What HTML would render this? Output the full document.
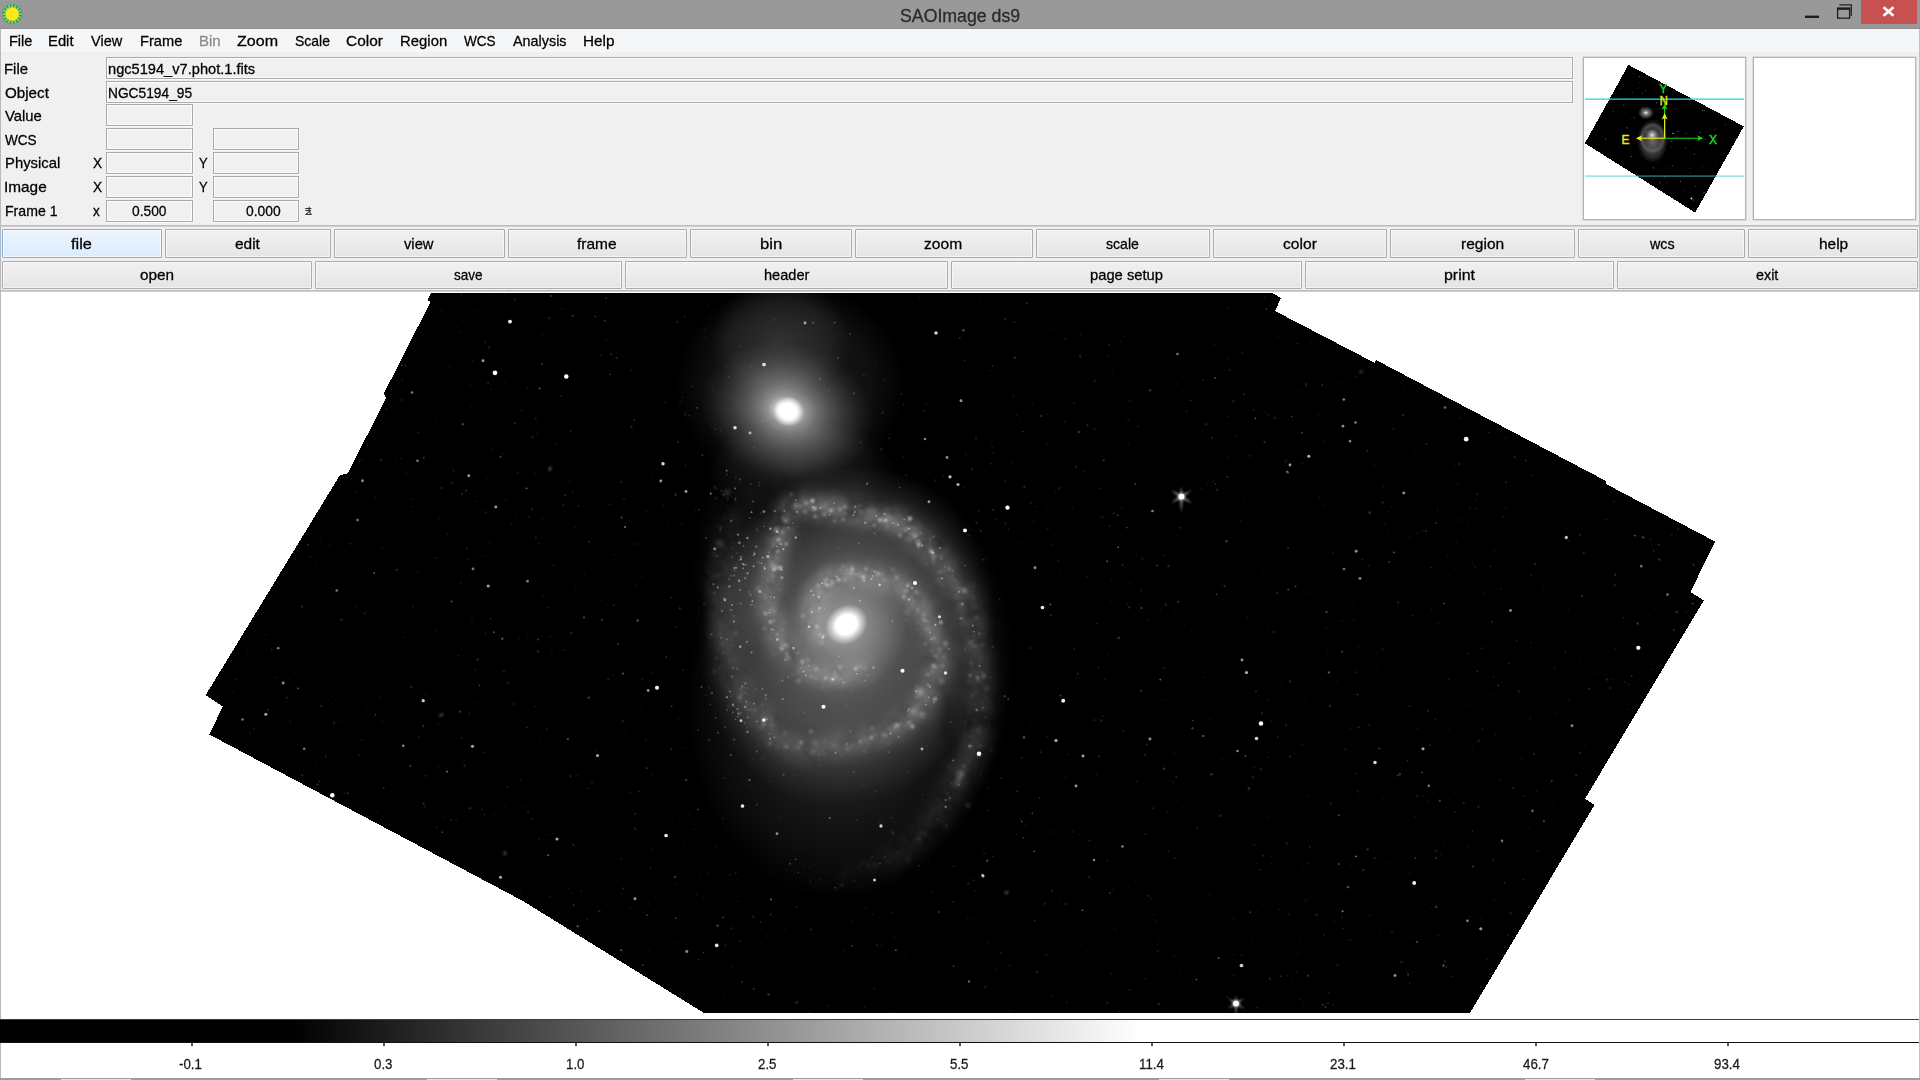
<!DOCTYPE html>
<html><head><meta charset="utf-8"><title>SAOImage ds9</title>
<style>
html,body{margin:0;padding:0}
body{width:1920px;height:1080px;position:relative;overflow:hidden;background:#f0f0f0;font-family:"Liberation Sans",sans-serif;}
.t{-webkit-text-stroke:0.28px currentColor;position:absolute;white-space:pre;line-height:20px;height:20px;transform-origin:0 0;font-family:"Liberation Sans",sans-serif;}
.abs{position:absolute}
.entry{position:absolute;box-sizing:border-box;border:1px solid #a9a9a9;box-shadow:inset 1px 1px 0 #fcfcfc, inset -1px -1px 0 #fcfcfc, 1px 1px 0 #fafafa;background:#f0f0f0}
.btn{position:absolute;box-sizing:border-box;border:1px solid #acacac;border-radius:1px;background:linear-gradient(#f1f1f1,#e5e5e5);box-shadow:inset 0 0 0 1px rgba(255,255,255,.55)}
.btn.act{border-color:#7eb4ea;background:linear-gradient(#ecf4fc,#dcecfc)}
.panel{position:absolute;box-sizing:border-box;background:#fff;border:1px solid #b4b4b4;box-shadow:0 0 0 1px #dcdcdc}
</style></head>
<body>
<div class="abs" style="left:0;top:0;width:1920px;height:29px;background:#999999"></div>
<div class="abs" style="left:0;top:28px;width:1920px;height:1px;background:#8e8e8e"></div>
<svg class="abs" style="left:0;top:2px" width="26" height="26" viewBox="0 0 26 26">
<circle cx="12.2" cy="12" r="10.1" fill="#1fa08c"/>
<g stroke="#9fd23a" stroke-width="1.6"><line x1="18.20" y1="12.00" x2="21.90" y2="12.00"/><line x1="17.74" y1="14.30" x2="21.16" y2="15.71"/><line x1="16.44" y1="16.24" x2="19.06" y2="18.86"/><line x1="14.50" y1="17.54" x2="15.91" y2="20.96"/><line x1="12.20" y1="18.00" x2="12.20" y2="21.70"/><line x1="9.90" y1="17.54" x2="8.49" y2="20.96"/><line x1="7.96" y1="16.24" x2="5.34" y2="18.86"/><line x1="6.66" y1="14.30" x2="3.24" y2="15.71"/><line x1="6.20" y1="12.00" x2="2.50" y2="12.00"/><line x1="6.66" y1="9.70" x2="3.24" y2="8.29"/><line x1="7.96" y1="7.76" x2="5.34" y2="5.14"/><line x1="9.90" y1="6.46" x2="8.49" y2="3.04"/><line x1="12.20" y1="6.00" x2="12.20" y2="2.30"/><line x1="14.50" y1="6.46" x2="15.91" y2="3.04"/><line x1="16.44" y1="7.76" x2="19.06" y2="5.14"/><line x1="17.74" y1="9.70" x2="21.16" y2="8.29"/></g><circle cx="12.2" cy="12" r="6.7" fill="#ffe81a"/></svg>
<div class="abs" style="left:1861px;top:0;width:56px;height:24px;background:#c75050"></div>
<svg class="abs" style="left:1800px;top:0" width="120" height="28" viewBox="0 0 120 28">
<rect x="5" y="15.6" width="14" height="2.4" fill="#1e1e1e"/>
<path d="M39.4 4.8 H51.3 V16" fill="none" stroke="#1e1e1e" stroke-width="1.25"/>
<rect x="37.6" y="8.6" width="12" height="9.6" fill="none" stroke="#1e1e1e" stroke-width="1.3"/>
<rect x="37" y="7.4" width="13.2" height="2.4" fill="#1e1e1e"/>
<path d="M83.5 7.2 L93.5 15.8 M93.5 7.2 L83.5 15.8" stroke="#fff" stroke-width="2.6" fill="none"/>
</svg>
<div class="abs" style="left:0;top:29px;width:1920px;height:23px;background:#f5f6f7"></div>
<div class="abs" style="left:0;top:29px;width:1px;height:1051px;background:#b9b9b9"></div>
<div class="entry" style="left:106px;top:57px;width:1467px;height:22px"></div>
<div class="entry" style="left:106px;top:81px;width:1467px;height:22px"></div>
<div class="entry" style="left:106px;top:104px;width:87px;height:22px"></div>
<div class="entry" style="left:106px;top:128px;width:87px;height:22px"></div>
<div class="entry" style="left:213px;top:128px;width:86px;height:22px"></div>
<div class="entry" style="left:106px;top:152px;width:87px;height:22px"></div>
<div class="entry" style="left:213px;top:152px;width:86px;height:22px"></div>
<div class="entry" style="left:106px;top:176px;width:87px;height:22px"></div>
<div class="entry" style="left:213px;top:176px;width:86px;height:22px"></div>
<div class="entry" style="left:106px;top:200px;width:87px;height:22px"></div>
<div class="entry" style="left:213px;top:200px;width:86px;height:22px"></div>
<svg class="abs" style="left:304px;top:206px" width="10" height="10" viewBox="0 0 10 10"><path d="M1.2 2.6 H7.4 M5.2 0.8 V4 M1.4 4.6 H6.8 L1.6 8.4 H7.2 M5 5.4 L7.6 8.6" stroke="#222" stroke-width="1" fill="none"/></svg>
<div class="panel" style="left:1583px;top:57px;width:163px;height:163px"></div>
<div class="panel" style="left:1753px;top:57px;width:163px;height:163px"></div>
<div class="abs" style="left:1px;top:225px;width:1919px;height:1px;background:#bdbdbd"></div>
<div class="abs" style="left:1px;top:226px;width:1919px;height:1px;background:#cfcfcf"></div>
<div class="btn act" style="left:2px;top:229px;width:160px;height:29px"></div>
<div class="btn" style="left:165px;top:229px;width:166px;height:29px"></div>
<div class="btn" style="left:334px;top:229px;width:171px;height:29px"></div>
<div class="btn" style="left:508px;top:229px;width:179px;height:29px"></div>
<div class="btn" style="left:690px;top:229px;width:162px;height:29px"></div>
<div class="btn" style="left:855px;top:229px;width:178px;height:29px"></div>
<div class="btn" style="left:1036px;top:229px;width:174px;height:29px"></div>
<div class="btn" style="left:1213px;top:229px;width:174px;height:29px"></div>
<div class="btn" style="left:1390px;top:229px;width:185px;height:29px"></div>
<div class="btn" style="left:1578px;top:229px;width:167px;height:29px"></div>
<div class="btn" style="left:1748px;top:229px;width:170px;height:29px"></div>
<div class="btn" style="left:2px;top:261px;width:310px;height:28px"></div>
<div class="btn" style="left:315px;top:261px;width:307px;height:28px"></div>
<div class="btn" style="left:625px;top:261px;width:323px;height:28px"></div>
<div class="btn" style="left:951px;top:261px;width:351px;height:28px"></div>
<div class="btn" style="left:1305px;top:261px;width:309px;height:28px"></div>
<div class="btn" style="left:1617px;top:261px;width:301px;height:28px"></div>
<div class="abs" style="left:1px;top:290px;width:1919px;height:1px;background:#bdbdbd"></div>
<div class="abs" style="left:1px;top:291px;width:1919px;height:1px;background:#cfcfcf"></div>
<div class="abs" style="left:1px;top:292px;width:1919px;height:786px;background:#fff"></div>
<svg class="abs" style="left:0;top:292px" width="1920" height="722" viewBox="0 292 1920 722">
<defs>
<clipPath id="cp"><polygon points="431,293 1272.5,293 1281,298 1275,311 1375,363 1376,360 1606,481 1606,484 1715,541.5 1690.5,592 1703.75,600.5 1585,798.75 1594.5,805 1470,1013 704,1013 522.5,900.75 209.25,734.5 222.8,706.5 205.75,695 340,475 347.5,473.5 386.25,398 383.75,393.75 430.5,302 427.5,300"/></clipPath>
<filter id="b05" filterUnits="userSpaceOnUse" x="0" y="292" width="1920" height="722"><feGaussianBlur stdDeviation="0.62"/></filter>
<filter id="b07" x="-50%" y="-50%" width="200%" height="200%"><feGaussianBlur stdDeviation="0.6"/></filter>
<filter id="b15" filterUnits="userSpaceOnUse" x="600" y="292" width="500" height="722"><feGaussianBlur stdDeviation="1.25"/></filter>
<filter id="b1" filterUnits="userSpaceOnUse" x="0" y="292" width="1920" height="722"><feGaussianBlur stdDeviation="1.1"/></filter>
<filter id="b2" filterUnits="userSpaceOnUse" x="600" y="292" width="500" height="722"><feGaussianBlur stdDeviation="2.4"/></filter>
<filter id="b5" filterUnits="userSpaceOnUse" x="600" y="292" width="500" height="722"><feGaussianBlur stdDeviation="5"/></filter>
<filter id="b9" x="-20%" y="-20%" width="140%" height="140%"><feGaussianBlur stdDeviation="9"/></filter>
<filter id="b16" x="-30%" y="-30%" width="160%" height="160%"><feGaussianBlur stdDeviation="16"/></filter>
<filter id="b7t" filterUnits="userSpaceOnUse" x="640" y="440" width="420" height="500"><feGaussianBlur stdDeviation="8" result="bl"/><feTurbulence type="fractalNoise" baseFrequency="0.045" numOctaves="3" seed="4" result="n"/><feColorMatrix in="n" type="matrix" values="0 0 0 0 1 0 0 0 0 1 0 0 0 0 1 1.7 0 0 0 -0.05" result="a"/><feComposite in="bl" in2="a" operator="in"/></filter>
<filter id="b3t" filterUnits="userSpaceOnUse" x="640" y="440" width="420" height="500"><feGaussianBlur stdDeviation="3.5" result="bl"/><feTurbulence type="fractalNoise" baseFrequency="0.11" numOctaves="3" seed="9" result="n"/><feColorMatrix in="n" type="matrix" values="0 0 0 0 1 0 0 0 0 1 0 0 0 0 1 2.4 0 0 0 -0.45" result="a"/><feComposite in="bl" in2="a" operator="in"/></filter>
<radialGradient id="genv"><stop offset="0" stop-color="#fff" stop-opacity=".13"/><stop offset="0.6" stop-color="#fff" stop-opacity=".09"/><stop offset="0.85" stop-color="#fff" stop-opacity=".04"/><stop offset="1" stop-color="#fff" stop-opacity="0"/></radialGradient>
<radialGradient id="gcore"><stop offset="0" stop-color="#fff" stop-opacity="1"/><stop offset="0.3" stop-color="#fff" stop-opacity="1"/><stop offset="0.55" stop-color="#fff" stop-opacity=".55"/><stop offset="1" stop-color="#fff" stop-opacity="0"/></radialGradient>
<radialGradient id="ginner"><stop offset="0" stop-color="#fff" stop-opacity=".30"/><stop offset="0.6" stop-color="#fff" stop-opacity=".17"/><stop offset="1" stop-color="#fff" stop-opacity="0"/></radialGradient>
<radialGradient id="gcore2"><stop offset="0" stop-color="#fff" stop-opacity="1"/><stop offset="0.5" stop-color="#fff" stop-opacity="1"/><stop offset="0.7" stop-color="#fff" stop-opacity=".55"/><stop offset="1" stop-color="#fff" stop-opacity="0"/></radialGradient>
<radialGradient id="ghalo2"><stop offset="0" stop-color="#fff" stop-opacity="1"/><stop offset="0.10" stop-color="#fff" stop-opacity=".95"/><stop offset="0.15" stop-color="#fff" stop-opacity=".72"/><stop offset="0.22" stop-color="#fff" stop-opacity=".53"/><stop offset="0.34" stop-color="#fff" stop-opacity=".38"/><stop offset="0.48" stop-color="#fff" stop-opacity=".26"/><stop offset="0.66" stop-color="#fff" stop-opacity=".14"/><stop offset="0.84" stop-color="#fff" stop-opacity=".05"/><stop offset="1" stop-color="#fff" stop-opacity="0"/></radialGradient>
<radialGradient id="ghalo"><stop offset="0" stop-color="#fff" stop-opacity=".75"/><stop offset="0.25" stop-color="#fff" stop-opacity=".42"/><stop offset="0.6" stop-color="#fff" stop-opacity=".16"/><stop offset="1" stop-color="#fff" stop-opacity="0"/></radialGradient>
<radialGradient id="gdisk"><stop offset="0" stop-color="#fff" stop-opacity=".30"/><stop offset="0.55" stop-color="#fff" stop-opacity=".20"/><stop offset="0.82" stop-color="#fff" stop-opacity=".09"/><stop offset="1" stop-color="#fff" stop-opacity="0"/></radialGradient>
<radialGradient id="gfaint"><stop offset="0" stop-color="#fff" stop-opacity=".12"/><stop offset="0.7" stop-color="#fff" stop-opacity=".06"/><stop offset="1" stop-color="#fff" stop-opacity="0"/></radialGradient>
</defs>
<polygon points="431,293 1272.5,293 1281,298 1275,311 1375,363 1376,360 1606,481 1606,484 1715,541.5 1690.5,592 1703.75,600.5 1585,798.75 1594.5,805 1470,1013 704,1013 522.5,900.75 209.25,734.5 222.8,706.5 205.75,695 340,475 347.5,473.5 386.25,398 383.75,393.75 430.5,302 427.5,300" fill="#000" shape-rendering="crispEdges"/>
<g clip-path="url(#cp)">
<ellipse cx="790" cy="385" rx="115" ry="105" fill="url(#gfaint)"/>
<ellipse cx="780" cy="340" rx="70" ry="60" fill="url(#gfaint)"/>
<ellipse cx="800" cy="468" rx="95" ry="48" fill="url(#gfaint)" opacity=".9"/><g transform="rotate(15 788 411)"><ellipse cx="787" cy="411" rx="88" ry="68" fill="url(#ghalo2)"/></g>
<circle cx="788.5" cy="411.6" r="15" fill="url(#gcore2)"/>
<g transform="rotate(10 850 682)"><ellipse cx="850" cy="682" rx="162" ry="218" fill="url(#genv)"/></g>
<g transform="rotate(14 848 636)"><ellipse cx="848" cy="636" rx="146" ry="172" fill="url(#gdisk)"/></g>
<g filter="url(#b7t)" fill="#fff"><circle cx="868.0" cy="668.0" r="10.5" opacity="0.045"/><circle cx="865.1" cy="669.3" r="10.5" opacity="0.045"/><circle cx="862.3" cy="670.7" r="10.5" opacity="0.045"/><circle cx="859.4" cy="672.0" r="10.6" opacity="0.045"/><circle cx="856.5" cy="673.3" r="10.6" opacity="0.046"/><circle cx="853.6" cy="674.6" r="10.6" opacity="0.046"/><circle cx="850.6" cy="675.7" r="10.6" opacity="0.046"/><circle cx="847.7" cy="676.7" r="10.6" opacity="0.047"/><circle cx="844.6" cy="677.6" r="10.7" opacity="0.047"/><circle cx="841.5" cy="678.1" r="10.7" opacity="0.047"/><circle cx="838.3" cy="678.3" r="10.7" opacity="0.047"/><circle cx="835.1" cy="678.2" r="10.7" opacity="0.048"/><circle cx="832.0" cy="678.0" r="10.7" opacity="0.048"/><circle cx="828.8" cy="677.6" r="10.8" opacity="0.048"/><circle cx="825.7" cy="677.1" r="10.8" opacity="0.048"/><circle cx="822.6" cy="676.4" r="10.8" opacity="0.049"/><circle cx="819.6" cy="675.6" r="10.8" opacity="0.049"/><circle cx="816.6" cy="674.6" r="10.8" opacity="0.049"/><circle cx="813.6" cy="673.4" r="10.8" opacity="0.050"/><circle cx="810.8" cy="672.1" r="10.9" opacity="0.050"/><circle cx="808.0" cy="670.6" r="10.9" opacity="0.050"/><circle cx="805.3" cy="668.9" r="10.9" opacity="0.050"/><circle cx="802.7" cy="667.1" r="10.9" opacity="0.051"/><circle cx="800.2" cy="665.2" r="10.9" opacity="0.051"/><circle cx="797.7" cy="663.2" r="11.0" opacity="0.051"/><circle cx="795.3" cy="661.1" r="11.0" opacity="0.051"/><circle cx="793.0" cy="659.0" r="11.0" opacity="0.052"/><circle cx="790.7" cy="656.8" r="11.0" opacity="0.052"/><circle cx="788.5" cy="654.4" r="11.0" opacity="0.052"/><circle cx="786.5" cy="652.0" r="11.1" opacity="0.052"/><circle cx="784.6" cy="649.5" r="11.1" opacity="0.052"/><circle cx="782.8" cy="646.9" r="11.1" opacity="0.052"/><circle cx="781.1" cy="644.2" r="11.1" opacity="0.053"/><circle cx="779.7" cy="641.4" r="11.1" opacity="0.053"/><circle cx="778.3" cy="638.5" r="11.2" opacity="0.053"/><circle cx="777.2" cy="635.6" r="11.2" opacity="0.053"/><circle cx="776.1" cy="632.6" r="11.2" opacity="0.053"/><circle cx="775.2" cy="629.6" r="11.2" opacity="0.053"/><circle cx="774.3" cy="626.5" r="11.2" opacity="0.054"/><circle cx="773.5" cy="623.5" r="11.3" opacity="0.054"/><circle cx="772.8" cy="620.4" r="11.3" opacity="0.054"/><circle cx="772.1" cy="617.3" r="11.3" opacity="0.054"/><circle cx="771.4" cy="614.2" r="11.3" opacity="0.054"/><circle cx="770.8" cy="611.1" r="11.3" opacity="0.054"/><circle cx="770.3" cy="608.0" r="11.3" opacity="0.054"/><circle cx="769.9" cy="604.8" r="11.4" opacity="0.055"/><circle cx="769.5" cy="601.7" r="11.4" opacity="0.055"/><circle cx="769.2" cy="598.5" r="11.4" opacity="0.055"/><circle cx="769.0" cy="595.4" r="11.4" opacity="0.055"/><circle cx="768.9" cy="592.2" r="11.4" opacity="0.055"/><circle cx="768.9" cy="589.0" r="11.5" opacity="0.055"/><circle cx="769.1" cy="585.9" r="11.5" opacity="0.055"/><circle cx="769.4" cy="582.7" r="11.5" opacity="0.056"/><circle cx="769.9" cy="579.6" r="11.5" opacity="0.056"/><circle cx="770.5" cy="576.5" r="11.5" opacity="0.056"/><circle cx="771.3" cy="573.4" r="11.6" opacity="0.056"/><circle cx="772.0" cy="570.3" r="11.6" opacity="0.056"/><circle cx="772.7" cy="567.2" r="11.6" opacity="0.056"/><circle cx="773.4" cy="564.1" r="11.6" opacity="0.056"/><circle cx="774.1" cy="561.1" r="11.6" opacity="0.056"/><circle cx="774.7" cy="558.0" r="11.7" opacity="0.056"/><circle cx="775.4" cy="554.9" r="11.7" opacity="0.056"/><circle cx="776.1" cy="551.8" r="11.7" opacity="0.056"/><circle cx="776.9" cy="548.7" r="11.7" opacity="0.056"/><circle cx="777.6" cy="545.6" r="11.7" opacity="0.056"/><circle cx="778.4" cy="542.5" r="11.8" opacity="0.056"/><circle cx="779.1" cy="539.5" r="11.8" opacity="0.056"/><circle cx="779.9" cy="536.4" r="11.8" opacity="0.056"/><circle cx="780.5" cy="533.3" r="11.8" opacity="0.056"/><circle cx="781.2" cy="530.2" r="11.8" opacity="0.056"/><circle cx="781.9" cy="527.1" r="11.9" opacity="0.056"/><circle cx="782.6" cy="524.0" r="11.9" opacity="0.056"/><circle cx="783.5" cy="521.0" r="11.9" opacity="0.056"/><circle cx="784.6" cy="518.0" r="11.9" opacity="0.056"/><circle cx="785.9" cy="515.1" r="11.9" opacity="0.056"/><circle cx="787.6" cy="512.5" r="11.9" opacity="0.056"/><circle cx="789.6" cy="510.0" r="12.0" opacity="0.056"/><circle cx="791.9" cy="507.8" r="12.0" opacity="0.056"/><circle cx="794.5" cy="506.0" r="12.0" opacity="0.056"/><circle cx="797.3" cy="504.7" r="12.0" opacity="0.056"/><circle cx="800.4" cy="503.9" r="12.0" opacity="0.056"/><circle cx="803.6" cy="503.8" r="12.1" opacity="0.056"/><circle cx="806.7" cy="504.2" r="12.1" opacity="0.056"/><circle cx="809.8" cy="504.9" r="12.1" opacity="0.056"/><circle cx="812.9" cy="505.8" r="12.1" opacity="0.056"/><circle cx="815.9" cy="506.6" r="12.1" opacity="0.056"/><circle cx="819.0" cy="507.3" r="12.2" opacity="0.056"/><circle cx="822.1" cy="507.9" r="12.2" opacity="0.056"/><circle cx="825.3" cy="508.3" r="12.2" opacity="0.056"/><circle cx="828.4" cy="508.7" r="12.2" opacity="0.056"/><circle cx="831.6" cy="509.0" r="12.2" opacity="0.055"/><circle cx="834.7" cy="509.3" r="12.3" opacity="0.055"/><circle cx="837.9" cy="509.6" r="12.3" opacity="0.055"/><circle cx="841.0" cy="509.9" r="12.3" opacity="0.055"/><circle cx="844.2" cy="510.2" r="12.3" opacity="0.055"/><circle cx="847.3" cy="510.6" r="12.3" opacity="0.055"/><circle cx="850.4" cy="511.0" r="12.4" opacity="0.055"/><circle cx="853.6" cy="511.4" r="12.4" opacity="0.055"/><circle cx="856.7" cy="511.9" r="12.4" opacity="0.055"/><circle cx="859.8" cy="512.5" r="12.4" opacity="0.055"/><circle cx="862.9" cy="513.1" r="12.4" opacity="0.055"/><circle cx="866.1" cy="513.7" r="12.4" opacity="0.055"/><circle cx="869.2" cy="514.3" r="12.5" opacity="0.055"/><circle cx="872.3" cy="514.9" r="12.5" opacity="0.054"/><circle cx="875.3" cy="515.6" r="12.5" opacity="0.054"/><circle cx="878.4" cy="516.4" r="12.5" opacity="0.054"/><circle cx="881.5" cy="517.2" r="12.5" opacity="0.054"/><circle cx="884.5" cy="518.1" r="12.6" opacity="0.054"/><circle cx="887.5" cy="519.1" r="12.6" opacity="0.054"/><circle cx="890.5" cy="520.2" r="12.6" opacity="0.054"/><circle cx="893.4" cy="521.4" r="12.6" opacity="0.053"/><circle cx="896.3" cy="522.8" r="12.6" opacity="0.053"/><circle cx="899.1" cy="524.2" r="12.7" opacity="0.052"/><circle cx="901.9" cy="525.8" r="12.7" opacity="0.051"/><circle cx="904.6" cy="527.4" r="12.7" opacity="0.050"/><circle cx="907.2" cy="529.2" r="12.7" opacity="0.050"/><circle cx="909.8" cy="531.0" r="12.7" opacity="0.049"/><circle cx="912.3" cy="532.9" r="12.8" opacity="0.048"/><circle cx="914.8" cy="534.8" r="12.8" opacity="0.048"/><circle cx="917.3" cy="536.8" r="12.8" opacity="0.047"/><circle cx="919.7" cy="538.9" r="12.8" opacity="0.046"/><circle cx="922.0" cy="541.0" r="12.8" opacity="0.046"/><circle cx="924.3" cy="543.2" r="12.9" opacity="0.045"/><circle cx="926.6" cy="545.4" r="12.9" opacity="0.044"/><circle cx="928.9" cy="547.6" r="12.9" opacity="0.044"/><circle cx="931.1" cy="549.9" r="12.9" opacity="0.043"/><circle cx="933.2" cy="552.2" r="12.9" opacity="0.042"/><circle cx="935.3" cy="554.6" r="13.0" opacity="0.042"/><circle cx="937.4" cy="556.9" r="13.0" opacity="0.041"/><circle cx="939.5" cy="559.4" r="13.0" opacity="0.040"/><circle cx="941.5" cy="561.8" r="13.0" opacity="0.040"/><circle cx="943.4" cy="564.3" r="13.0" opacity="0.039"/><circle cx="945.3" cy="566.8" r="13.0" opacity="0.039"/><circle cx="947.2" cy="569.4" r="13.1" opacity="0.038"/><circle cx="949.0" cy="572.0" r="13.1" opacity="0.038"/><circle cx="950.8" cy="574.6" r="13.1" opacity="0.037"/><circle cx="952.6" cy="577.2" r="13.1" opacity="0.037"/><circle cx="954.3" cy="579.9" r="13.1" opacity="0.036"/><circle cx="955.9" cy="582.6" r="13.2" opacity="0.036"/><circle cx="957.5" cy="585.4" r="13.2" opacity="0.035"/><circle cx="959.0" cy="588.1" r="13.2" opacity="0.034"/><circle cx="960.5" cy="590.9" r="13.2" opacity="0.034"/><circle cx="961.9" cy="593.8" r="13.2" opacity="0.033"/><circle cx="963.2" cy="596.6" r="13.3" opacity="0.033"/><circle cx="964.5" cy="599.5" r="13.3" opacity="0.032"/><circle cx="965.7" cy="602.5" r="13.3" opacity="0.032"/><circle cx="966.8" cy="605.4" r="13.3" opacity="0.031"/><circle cx="967.9" cy="608.4" r="13.3" opacity="0.031"/><circle cx="968.9" cy="611.4" r="13.4" opacity="0.030"/><circle cx="969.9" cy="614.4" r="13.4" opacity="0.030"/><circle cx="970.8" cy="617.5" r="13.4" opacity="0.029"/><circle cx="971.6" cy="620.5" r="13.4" opacity="0.029"/><circle cx="972.4" cy="623.6" r="13.4" opacity="0.029"/><circle cx="973.1" cy="626.7" r="13.5" opacity="0.029"/><circle cx="973.7" cy="629.8" r="13.5" opacity="0.028"/><circle cx="974.3" cy="632.9" r="13.5" opacity="0.028"/><circle cx="974.8" cy="636.0" r="13.5" opacity="0.028"/><circle cx="975.3" cy="639.1" r="13.5" opacity="0.028"/><circle cx="975.7" cy="642.3" r="13.6" opacity="0.027"/><circle cx="976.2" cy="645.4" r="13.6" opacity="0.027"/><circle cx="976.6" cy="648.6" r="13.6" opacity="0.027"/><circle cx="977.0" cy="651.7" r="13.6" opacity="0.027"/><circle cx="977.4" cy="654.8" r="13.6" opacity="0.026"/><circle cx="977.7" cy="658.0" r="13.6" opacity="0.026"/><circle cx="978.1" cy="661.1" r="13.7" opacity="0.026"/><circle cx="978.6" cy="664.3" r="13.7" opacity="0.026"/><circle cx="979.0" cy="667.4" r="13.7" opacity="0.026"/><circle cx="979.4" cy="670.5" r="13.7" opacity="0.025"/><circle cx="979.8" cy="673.7" r="13.7" opacity="0.025"/><circle cx="980.2" cy="676.8" r="13.8" opacity="0.025"/><circle cx="980.5" cy="680.0" r="13.8" opacity="0.025"/><circle cx="980.7" cy="683.1" r="13.8" opacity="0.024"/><circle cx="980.9" cy="686.3" r="13.8" opacity="0.025"/><circle cx="981.0" cy="689.5" r="13.8" opacity="0.025"/><circle cx="981.0" cy="692.6" r="13.9" opacity="0.025"/><circle cx="980.8" cy="695.8" r="13.9" opacity="0.025"/><circle cx="980.6" cy="699.0" r="13.9" opacity="0.025"/><circle cx="980.2" cy="702.1" r="13.9" opacity="0.025"/><circle cx="979.8" cy="705.2" r="13.9" opacity="0.025"/><circle cx="979.3" cy="708.4" r="14.0" opacity="0.025"/><circle cx="978.8" cy="711.5" r="14.0" opacity="0.025"/><circle cx="978.2" cy="714.6" r="14.0" opacity="0.025"/><circle cx="977.7" cy="717.7" r="14.0" opacity="0.025"/><circle cx="977.2" cy="720.9" r="14.0" opacity="0.026"/><circle cx="976.7" cy="724.0" r="14.1" opacity="0.026"/><circle cx="976.3" cy="727.1" r="14.1" opacity="0.026"/><circle cx="975.9" cy="730.3" r="14.1" opacity="0.026"/><circle cx="975.5" cy="733.4" r="14.1" opacity="0.026"/><circle cx="975.1" cy="736.6" r="14.1" opacity="0.026"/><circle cx="974.7" cy="739.7" r="14.1" opacity="0.025"/><circle cx="974.2" cy="742.8" r="14.2" opacity="0.025"/><circle cx="973.6" cy="745.9" r="14.2" opacity="0.025"/><circle cx="972.9" cy="749.0" r="14.2" opacity="0.025"/><circle cx="972.0" cy="752.1" r="14.2" opacity="0.025"/><circle cx="970.9" cy="755.0" r="14.2" opacity="0.025"/><circle cx="969.6" cy="757.9" r="14.3" opacity="0.025"/><circle cx="968.2" cy="760.8" r="14.3" opacity="0.024"/><circle cx="966.7" cy="763.5" r="14.3" opacity="0.024"/><circle cx="965.1" cy="766.3" r="14.3" opacity="0.024"/><circle cx="963.4" cy="769.0" r="14.3" opacity="0.024"/><circle cx="961.8" cy="771.7" r="14.4" opacity="0.024"/><circle cx="960.3" cy="774.5" r="14.4" opacity="0.024"/><circle cx="958.8" cy="777.3" r="14.4" opacity="0.024"/><circle cx="957.5" cy="780.1" r="14.4" opacity="0.023"/><circle cx="956.1" cy="783.0" r="14.4" opacity="0.022"/><circle cx="954.7" cy="785.8" r="14.5" opacity="0.022"/><circle cx="953.3" cy="788.7" r="14.5" opacity="0.021"/><circle cx="951.9" cy="791.5" r="14.5" opacity="0.020"/><circle cx="950.4" cy="794.3" r="14.5" opacity="0.020"/><circle cx="948.9" cy="797.1" r="14.5" opacity="0.019"/><circle cx="947.3" cy="799.9" r="14.6" opacity="0.019"/><circle cx="945.8" cy="802.6" r="14.6" opacity="0.018"/><circle cx="944.3" cy="805.4" r="14.6" opacity="0.017"/><circle cx="942.7" cy="808.2" r="14.6" opacity="0.017"/><circle cx="941.1" cy="810.9" r="14.6" opacity="0.016"/><circle cx="939.5" cy="813.6" r="14.7" opacity="0.016"/><circle cx="937.7" cy="816.2" r="14.7" opacity="0.015"/><circle cx="935.9" cy="818.8" r="14.7" opacity="0.014"/><circle cx="934.0" cy="821.3" r="14.7" opacity="0.014"/><circle cx="931.9" cy="823.7" r="14.7" opacity="0.014"/><circle cx="929.8" cy="826.1" r="14.7" opacity="0.014"/><circle cx="927.6" cy="828.4" r="14.8" opacity="0.013"/><circle cx="925.3" cy="830.6" r="14.8" opacity="0.013"/><circle cx="923.0" cy="832.8" r="14.8" opacity="0.013"/><circle cx="920.7" cy="834.9" r="14.8" opacity="0.013"/><circle cx="918.3" cy="837.0" r="14.8" opacity="0.012"/><circle cx="916.0" cy="839.1" r="14.9" opacity="0.012"/><circle cx="913.6" cy="841.2" r="14.9" opacity="0.012"/><circle cx="911.3" cy="843.4" r="14.9" opacity="0.012"/><circle cx="909.0" cy="845.5" r="14.9" opacity="0.012"/><circle cx="906.6" cy="847.7" r="14.9" opacity="0.011"/><circle cx="904.3" cy="849.8" r="15.0" opacity="0.011"/><circle cx="901.8" cy="851.8" r="15.0" opacity="0.011"/><circle cx="899.4" cy="853.8" r="15.0" opacity="0.011"/><circle cx="896.8" cy="855.7" r="15.0" opacity="0.010"/><circle cx="894.2" cy="857.5" r="15.0" opacity="0.010"/><circle cx="891.5" cy="859.1" r="15.1" opacity="0.010"/><circle cx="888.8" cy="860.7" r="15.1" opacity="0.010"/><circle cx="885.9" cy="862.1" r="15.1" opacity="0.009"/><circle cx="883.1" cy="863.5" r="15.1" opacity="0.009"/><circle cx="880.2" cy="864.9" r="15.1" opacity="0.009"/><circle cx="877.3" cy="866.1" r="15.2" opacity="0.009"/><circle cx="874.4" cy="867.4" r="15.2" opacity="0.008"/><circle cx="871.5" cy="868.6" r="15.2" opacity="0.008"/><circle cx="868.5" cy="869.7" r="15.2" opacity="0.008"/><circle cx="865.5" cy="870.8" r="15.2" opacity="0.008"/><circle cx="862.6" cy="871.8" r="15.2" opacity="0.007"/><circle cx="859.5" cy="872.8" r="15.3" opacity="0.007"/><circle cx="856.5" cy="873.8" r="15.3" opacity="0.007"/><circle cx="853.5" cy="874.6" r="15.3" opacity="0.006"/><circle cx="850.4" cy="875.4" r="15.3" opacity="0.006"/><circle cx="847.3" cy="875.9" r="15.3" opacity="0.006"/><circle cx="844.1" cy="876.4" r="15.4" opacity="0.006"/><circle cx="841.0" cy="876.7" r="15.4" opacity="0.005"/><circle cx="837.8" cy="876.8" r="15.4" opacity="0.005"/><circle cx="834.7" cy="876.9" r="15.4" opacity="0.005"/><circle cx="831.5" cy="877.0" r="15.4" opacity="0.005"/><circle cx="828.3" cy="877.0" r="15.5" opacity="0.004"/><circle cx="825.2" cy="876.9" r="15.5" opacity="0.004"/><circle cx="822.0" cy="877.0" r="15.5" opacity="0.004"/><circle cx="822.0" cy="640.0" r="10.5" opacity="0.054"/><circle cx="820.8" cy="637.0" r="10.5" opacity="0.054"/><circle cx="819.5" cy="634.1" r="10.5" opacity="0.054"/><circle cx="818.2" cy="631.2" r="10.6" opacity="0.054"/><circle cx="817.0" cy="628.2" r="10.6" opacity="0.055"/><circle cx="815.8" cy="625.2" r="10.6" opacity="0.055"/><circle cx="814.7" cy="622.2" r="10.6" opacity="0.055"/><circle cx="813.8" cy="619.1" r="10.7" opacity="0.055"/><circle cx="813.1" cy="616.0" r="10.7" opacity="0.055"/><circle cx="812.9" cy="612.8" r="10.7" opacity="0.055"/><circle cx="812.9" cy="609.6" r="10.7" opacity="0.055"/><circle cx="813.2" cy="606.4" r="10.8" opacity="0.056"/><circle cx="813.7" cy="603.3" r="10.8" opacity="0.056"/><circle cx="814.3" cy="600.1" r="10.8" opacity="0.056"/><circle cx="815.2" cy="597.0" r="10.8" opacity="0.056"/><circle cx="816.2" cy="594.0" r="10.8" opacity="0.056"/><circle cx="817.4" cy="591.0" r="10.9" opacity="0.056"/><circle cx="818.8" cy="588.2" r="10.9" opacity="0.056"/><circle cx="820.6" cy="585.5" r="10.9" opacity="0.056"/><circle cx="822.7" cy="583.1" r="10.9" opacity="0.056"/><circle cx="825.1" cy="581.0" r="11.0" opacity="0.056"/><circle cx="827.7" cy="579.2" r="11.0" opacity="0.056"/><circle cx="830.5" cy="577.6" r="11.0" opacity="0.056"/><circle cx="833.4" cy="576.2" r="11.0" opacity="0.056"/><circle cx="836.4" cy="575.0" r="11.0" opacity="0.056"/><circle cx="839.4" cy="574.0" r="11.1" opacity="0.056"/><circle cx="842.5" cy="573.1" r="11.1" opacity="0.056"/><circle cx="845.7" cy="572.5" r="11.1" opacity="0.056"/><circle cx="848.8" cy="572.1" r="11.1" opacity="0.055"/><circle cx="852.0" cy="572.0" r="11.2" opacity="0.055"/><circle cx="855.2" cy="572.3" r="11.2" opacity="0.055"/><circle cx="858.4" cy="572.9" r="11.2" opacity="0.055"/><circle cx="861.5" cy="573.6" r="11.2" opacity="0.055"/><circle cx="864.6" cy="574.5" r="11.3" opacity="0.055"/><circle cx="867.6" cy="575.4" r="11.3" opacity="0.055"/><circle cx="870.7" cy="576.4" r="11.3" opacity="0.055"/><circle cx="873.8" cy="577.2" r="11.3" opacity="0.055"/><circle cx="876.9" cy="578.0" r="11.3" opacity="0.055"/><circle cx="880.0" cy="578.7" r="11.4" opacity="0.055"/><circle cx="883.1" cy="579.5" r="11.4" opacity="0.054"/><circle cx="886.2" cy="580.4" r="11.4" opacity="0.054"/><circle cx="889.2" cy="581.4" r="11.4" opacity="0.054"/><circle cx="892.2" cy="582.6" r="11.5" opacity="0.054"/><circle cx="895.1" cy="584.0" r="11.5" opacity="0.054"/><circle cx="897.9" cy="585.6" r="11.5" opacity="0.054"/><circle cx="900.6" cy="587.4" r="11.5" opacity="0.053"/><circle cx="903.2" cy="589.2" r="11.6" opacity="0.053"/><circle cx="905.7" cy="591.1" r="11.6" opacity="0.052"/><circle cx="908.2" cy="593.2" r="11.6" opacity="0.052"/><circle cx="910.6" cy="595.3" r="11.6" opacity="0.051"/><circle cx="912.8" cy="597.6" r="11.6" opacity="0.051"/><circle cx="915.0" cy="600.0" r="11.7" opacity="0.050"/><circle cx="917.0" cy="602.5" r="11.7" opacity="0.050"/><circle cx="918.9" cy="605.1" r="11.7" opacity="0.049"/><circle cx="920.7" cy="607.7" r="11.7" opacity="0.049"/><circle cx="922.4" cy="610.4" r="11.8" opacity="0.048"/><circle cx="924.0" cy="613.2" r="11.8" opacity="0.048"/><circle cx="925.5" cy="616.0" r="11.8" opacity="0.047"/><circle cx="927.0" cy="618.9" r="11.8" opacity="0.046"/><circle cx="928.4" cy="621.7" r="11.8" opacity="0.046"/><circle cx="929.8" cy="624.6" r="11.9" opacity="0.045"/><circle cx="931.1" cy="627.5" r="11.9" opacity="0.045"/><circle cx="932.4" cy="630.5" r="11.9" opacity="0.044"/><circle cx="933.6" cy="633.5" r="11.9" opacity="0.044"/><circle cx="934.7" cy="636.5" r="12.0" opacity="0.043"/><circle cx="935.7" cy="639.5" r="12.0" opacity="0.043"/><circle cx="936.5" cy="642.6" r="12.0" opacity="0.042"/><circle cx="937.3" cy="645.7" r="12.0" opacity="0.042"/><circle cx="937.8" cy="648.9" r="12.1" opacity="0.041"/><circle cx="938.3" cy="652.0" r="12.1" opacity="0.041"/><circle cx="938.5" cy="655.2" r="12.1" opacity="0.041"/><circle cx="938.7" cy="658.4" r="12.1" opacity="0.040"/><circle cx="938.7" cy="661.6" r="12.1" opacity="0.040"/><circle cx="938.6" cy="664.8" r="12.2" opacity="0.040"/><circle cx="938.3" cy="668.0" r="12.2" opacity="0.039"/><circle cx="937.9" cy="671.2" r="12.2" opacity="0.039"/><circle cx="937.4" cy="674.4" r="12.2" opacity="0.039"/><circle cx="936.6" cy="677.5" r="12.3" opacity="0.038"/><circle cx="935.6" cy="680.5" r="12.3" opacity="0.038"/><circle cx="934.5" cy="683.5" r="12.3" opacity="0.038"/><circle cx="933.2" cy="686.5" r="12.3" opacity="0.038"/><circle cx="931.8" cy="689.4" r="12.3" opacity="0.038"/><circle cx="930.4" cy="692.2" r="12.4" opacity="0.038"/><circle cx="928.8" cy="695.0" r="12.4" opacity="0.038"/><circle cx="927.3" cy="697.8" r="12.4" opacity="0.039"/><circle cx="925.7" cy="700.6" r="12.4" opacity="0.039"/><circle cx="924.0" cy="703.3" r="12.5" opacity="0.039"/><circle cx="922.3" cy="706.1" r="12.5" opacity="0.039"/><circle cx="920.5" cy="708.7" r="12.5" opacity="0.039"/><circle cx="918.6" cy="711.2" r="12.5" opacity="0.039"/><circle cx="916.4" cy="713.6" r="12.6" opacity="0.040"/><circle cx="914.1" cy="715.9" r="12.6" opacity="0.040"/><circle cx="911.7" cy="718.0" r="12.6" opacity="0.040"/><circle cx="909.2" cy="719.9" r="12.6" opacity="0.039"/><circle cx="906.5" cy="721.7" r="12.6" opacity="0.039"/><circle cx="903.8" cy="723.4" r="12.7" opacity="0.038"/><circle cx="901.0" cy="724.9" r="12.7" opacity="0.037"/><circle cx="898.1" cy="726.4" r="12.7" opacity="0.037"/><circle cx="895.3" cy="727.9" r="12.7" opacity="0.036"/><circle cx="892.4" cy="729.2" r="12.8" opacity="0.035"/><circle cx="889.5" cy="730.6" r="12.8" opacity="0.035"/><circle cx="886.6" cy="731.9" r="12.8" opacity="0.034"/><circle cx="883.6" cy="733.2" r="12.8" opacity="0.033"/><circle cx="880.7" cy="734.4" r="12.9" opacity="0.033"/><circle cx="877.7" cy="735.6" r="12.9" opacity="0.032"/><circle cx="874.7" cy="736.7" r="12.9" opacity="0.031"/><circle cx="871.7" cy="737.8" r="12.9" opacity="0.031"/><circle cx="868.6" cy="738.8" r="12.9" opacity="0.030"/><circle cx="865.6" cy="739.8" r="13.0" opacity="0.029"/><circle cx="862.5" cy="740.7" r="13.0" opacity="0.029"/><circle cx="859.4" cy="741.6" r="13.0" opacity="0.028"/><circle cx="856.3" cy="742.4" r="13.0" opacity="0.028"/><circle cx="853.2" cy="743.1" r="13.1" opacity="0.028"/><circle cx="850.1" cy="743.7" r="13.1" opacity="0.027"/><circle cx="846.9" cy="744.3" r="13.1" opacity="0.027"/><circle cx="843.7" cy="744.8" r="13.1" opacity="0.027"/><circle cx="840.6" cy="745.3" r="13.1" opacity="0.026"/><circle cx="837.4" cy="745.7" r="13.2" opacity="0.026"/><circle cx="834.2" cy="746.1" r="13.2" opacity="0.026"/><circle cx="831.0" cy="746.6" r="13.2" opacity="0.026"/><circle cx="827.9" cy="747.1" r="13.2" opacity="0.025"/><circle cx="824.7" cy="747.6" r="13.3" opacity="0.025"/><circle cx="821.6" cy="748.2" r="13.3" opacity="0.025"/><circle cx="818.4" cy="748.7" r="13.3" opacity="0.025"/><circle cx="815.2" cy="749.1" r="13.3" opacity="0.024"/><circle cx="812.0" cy="749.4" r="13.4" opacity="0.024"/><circle cx="808.8" cy="749.6" r="13.4" opacity="0.024"/><circle cx="805.6" cy="749.5" r="13.4" opacity="0.024"/><circle cx="802.5" cy="749.3" r="13.4" opacity="0.024"/><circle cx="799.3" cy="748.7" r="13.4" opacity="0.024"/><circle cx="796.2" cy="747.7" r="13.5" opacity="0.024"/><circle cx="793.3" cy="746.4" r="13.5" opacity="0.024"/><circle cx="790.5" cy="744.9" r="13.5" opacity="0.024"/><circle cx="787.8" cy="743.2" r="13.5" opacity="0.024"/><circle cx="785.2" cy="741.3" r="13.6" opacity="0.024"/><circle cx="782.7" cy="739.3" r="13.6" opacity="0.024"/><circle cx="780.3" cy="737.2" r="13.6" opacity="0.024"/><circle cx="777.9" cy="735.0" r="13.6" opacity="0.024"/><circle cx="775.6" cy="732.8" r="13.7" opacity="0.024"/><circle cx="773.3" cy="730.6" r="13.7" opacity="0.024"/><circle cx="771.1" cy="728.3" r="13.7" opacity="0.024"/><circle cx="768.9" cy="726.0" r="13.7" opacity="0.024"/><circle cx="766.6" cy="723.7" r="13.7" opacity="0.024"/><circle cx="764.4" cy="721.4" r="13.8" opacity="0.024"/><circle cx="762.2" cy="719.1" r="13.8" opacity="0.024"/><circle cx="760.0" cy="716.7" r="13.8" opacity="0.023"/><circle cx="757.8" cy="714.3" r="13.8" opacity="0.023"/><circle cx="755.7" cy="711.9" r="13.9" opacity="0.023"/><circle cx="753.7" cy="709.5" r="13.9" opacity="0.023"/><circle cx="751.7" cy="706.9" r="13.9" opacity="0.022"/><circle cx="749.8" cy="704.4" r="13.9" opacity="0.022"/><circle cx="748.0" cy="701.8" r="13.9" opacity="0.022"/><circle cx="746.2" cy="699.1" r="14.0" opacity="0.021"/><circle cx="744.5" cy="696.4" r="14.0" opacity="0.021"/><circle cx="742.9" cy="693.6" r="14.0" opacity="0.021"/><circle cx="741.3" cy="690.8" r="14.0" opacity="0.021"/><circle cx="739.9" cy="687.9" r="14.1" opacity="0.020"/><circle cx="738.5" cy="685.0" r="14.1" opacity="0.020"/><circle cx="737.2" cy="682.1" r="14.1" opacity="0.020"/><circle cx="735.9" cy="679.2" r="14.1" opacity="0.019"/><circle cx="734.8" cy="676.2" r="14.2" opacity="0.019"/><circle cx="733.6" cy="673.2" r="14.2" opacity="0.019"/><circle cx="732.5" cy="670.2" r="14.2" opacity="0.019"/><circle cx="731.5" cy="667.1" r="14.2" opacity="0.018"/><circle cx="730.5" cy="664.1" r="14.2" opacity="0.018"/><circle cx="729.6" cy="661.0" r="14.3" opacity="0.018"/><circle cx="728.6" cy="658.0" r="14.3" opacity="0.018"/><circle cx="727.8" cy="654.9" r="14.3" opacity="0.017"/><circle cx="726.9" cy="651.8" r="14.3" opacity="0.017"/><circle cx="726.2" cy="648.7" r="14.4" opacity="0.017"/><circle cx="725.4" cy="645.6" r="14.4" opacity="0.017"/><circle cx="724.8" cy="642.4" r="14.4" opacity="0.017"/><circle cx="724.1" cy="639.3" r="14.4" opacity="0.016"/><circle cx="723.5" cy="636.1" r="14.4" opacity="0.016"/><circle cx="722.9" cy="633.0" r="14.5" opacity="0.016"/><circle cx="722.4" cy="629.8" r="14.5" opacity="0.016"/><circle cx="721.9" cy="626.7" r="14.5" opacity="0.015"/><circle cx="721.4" cy="623.5" r="14.5" opacity="0.015"/><circle cx="720.9" cy="620.3" r="14.6" opacity="0.015"/><circle cx="720.5" cy="617.2" r="14.6" opacity="0.015"/><circle cx="720.1" cy="614.0" r="14.6" opacity="0.015"/><circle cx="719.7" cy="610.8" r="14.6" opacity="0.015"/><circle cx="719.3" cy="607.6" r="14.7" opacity="0.015"/><circle cx="718.9" cy="604.4" r="14.7" opacity="0.015"/><circle cx="718.6" cy="601.2" r="14.7" opacity="0.015"/><circle cx="718.4" cy="598.1" r="14.7" opacity="0.014"/><circle cx="718.2" cy="594.9" r="14.7" opacity="0.014"/><circle cx="718.0" cy="591.7" r="14.8" opacity="0.014"/><circle cx="717.9" cy="588.5" r="14.8" opacity="0.014"/><circle cx="717.9" cy="585.3" r="14.8" opacity="0.014"/><circle cx="717.8" cy="582.0" r="14.8" opacity="0.014"/><circle cx="717.9" cy="578.8" r="14.9" opacity="0.014"/><circle cx="717.9" cy="575.6" r="14.9" opacity="0.014"/><circle cx="718.0" cy="572.4" r="14.9" opacity="0.014"/><circle cx="718.0" cy="569.2" r="14.9" opacity="0.013"/><circle cx="718.1" cy="566.0" r="15.0" opacity="0.013"/><circle cx="718.2" cy="562.8" r="15.0" opacity="0.013"/><circle cx="718.4" cy="559.6" r="15.0" opacity="0.013"/><circle cx="718.7" cy="556.4" r="15.0" opacity="0.013"/><circle cx="718.9" cy="553.2" r="15.0" opacity="0.013"/><circle cx="719.2" cy="550.1" r="15.1" opacity="0.012"/><circle cx="719.6" cy="546.9" r="15.1" opacity="0.012"/><circle cx="719.9" cy="543.7" r="15.1" opacity="0.012"/><circle cx="720.3" cy="540.5" r="15.1" opacity="0.012"/><circle cx="720.7" cy="537.3" r="15.2" opacity="0.011"/><circle cx="721.1" cy="534.1" r="15.2" opacity="0.011"/><circle cx="721.5" cy="531.0" r="15.2" opacity="0.011"/><circle cx="722.0" cy="527.8" r="15.2" opacity="0.010"/><circle cx="722.4" cy="524.6" r="15.2" opacity="0.010"/><circle cx="722.9" cy="521.5" r="15.3" opacity="0.010"/><circle cx="723.5" cy="518.3" r="15.3" opacity="0.010"/><circle cx="724.0" cy="515.1" r="15.3" opacity="0.009"/><circle cx="724.5" cy="512.0" r="15.3" opacity="0.009"/><circle cx="725.1" cy="508.8" r="15.4" opacity="0.009"/><circle cx="725.7" cy="505.7" r="15.4" opacity="0.008"/><circle cx="726.4" cy="502.5" r="15.4" opacity="0.008"/><circle cx="727.0" cy="499.4" r="15.4" opacity="0.008"/><circle cx="727.7" cy="496.3" r="15.5" opacity="0.008"/><circle cx="728.3" cy="493.1" r="15.5" opacity="0.007"/><circle cx="729.0" cy="490.0" r="15.5" opacity="0.007"/></g>
<g filter="url(#b15)" fill="#fff"><circle cx="864.9" cy="668.0" r="2.5" opacity="0.089"/><circle cx="859.5" cy="666.2" r="1.6" opacity="0.175"/><circle cx="851.7" cy="691.4" r="1.9" opacity="0.053"/><circle cx="837.6" cy="678.5" r="1.9" opacity="0.154"/><circle cx="839.9" cy="667.0" r="2.5" opacity="0.212"/><circle cx="835.4" cy="675.4" r="2.6" opacity="0.142"/><circle cx="816.3" cy="669.0" r="2.1" opacity="0.224"/><circle cx="811.1" cy="676.8" r="1.8" opacity="0.180"/><circle cx="807.9" cy="659.9" r="1.8" opacity="0.234"/><circle cx="797.9" cy="681.2" r="2.8" opacity="0.119"/><circle cx="815.4" cy="678.6" r="1.5" opacity="0.137"/><circle cx="799.7" cy="680.0" r="1.7" opacity="0.146"/><circle cx="793.2" cy="675.0" r="1.3" opacity="0.154"/><circle cx="788.1" cy="657.8" r="2.7" opacity="0.182"/><circle cx="802.6" cy="661.7" r="1.4" opacity="0.162"/><circle cx="786.9" cy="646.1" r="1.6" opacity="0.226"/><circle cx="781.5" cy="644.0" r="2.1" opacity="0.091"/><circle cx="784.7" cy="644.6" r="1.7" opacity="0.254"/><circle cx="782.2" cy="647.2" r="2.4" opacity="0.074"/><circle cx="772.0" cy="632.4" r="1.3" opacity="0.122"/><circle cx="781.7" cy="629.5" r="1.4" opacity="0.181"/><circle cx="783.5" cy="622.8" r="2.3" opacity="0.062"/><circle cx="773.6" cy="620.6" r="1.5" opacity="0.213"/><circle cx="773.9" cy="610.7" r="2.2" opacity="0.158"/><circle cx="764.2" cy="628.2" r="1.5" opacity="0.261"/><circle cx="768.8" cy="601.8" r="1.6" opacity="0.090"/><circle cx="765.5" cy="597.6" r="2.3" opacity="0.109"/><circle cx="757.9" cy="588.6" r="2.7" opacity="0.119"/><circle cx="780.1" cy="589.8" r="1.5" opacity="0.122"/><circle cx="772.9" cy="575.9" r="1.4" opacity="0.143"/><circle cx="781.1" cy="578.5" r="1.4" opacity="0.152"/><circle cx="769.3" cy="556.7" r="1.9" opacity="0.122"/><circle cx="771.9" cy="565.1" r="1.4" opacity="0.217"/><circle cx="769.7" cy="560.8" r="1.9" opacity="0.088"/><circle cx="775.8" cy="567.9" r="2.6" opacity="0.269"/><circle cx="773.0" cy="562.0" r="1.6" opacity="0.101"/><circle cx="776.9" cy="557.7" r="1.9" opacity="0.097"/><circle cx="775.2" cy="554.2" r="1.5" opacity="0.089"/><circle cx="773.1" cy="544.9" r="2.5" opacity="0.073"/><circle cx="776.1" cy="529.4" r="2.6" opacity="0.248"/><circle cx="797.6" cy="526.3" r="1.4" opacity="0.073"/><circle cx="782.1" cy="532.2" r="2.2" opacity="0.192"/><circle cx="782.4" cy="517.7" r="1.8" opacity="0.125"/><circle cx="800.5" cy="506.2" r="2.2" opacity="0.134"/><circle cx="795.2" cy="505.0" r="1.8" opacity="0.173"/><circle cx="805.0" cy="511.5" r="2.6" opacity="0.199"/><circle cx="791.5" cy="494.0" r="1.6" opacity="0.233"/><circle cx="806.1" cy="503.2" r="2.4" opacity="0.226"/><circle cx="801.1" cy="506.0" r="1.2" opacity="0.097"/><circle cx="830.2" cy="510.6" r="2.1" opacity="0.210"/><circle cx="814.3" cy="508.8" r="2.1" opacity="0.262"/><circle cx="826.0" cy="504.2" r="2.5" opacity="0.071"/><circle cx="824.2" cy="514.7" r="2.2" opacity="0.159"/><circle cx="834.3" cy="497.4" r="1.9" opacity="0.072"/><circle cx="834.9" cy="521.0" r="1.9" opacity="0.174"/><circle cx="824.1" cy="513.8" r="1.6" opacity="0.154"/><circle cx="831.5" cy="510.5" r="2.5" opacity="0.216"/><circle cx="840.0" cy="509.3" r="2.0" opacity="0.259"/><circle cx="844.9" cy="506.8" r="1.9" opacity="0.270"/><circle cx="862.6" cy="511.5" r="1.7" opacity="0.096"/><circle cx="859.9" cy="505.4" r="1.9" opacity="0.124"/><circle cx="869.3" cy="509.9" r="1.5" opacity="0.083"/><circle cx="887.6" cy="516.3" r="2.2" opacity="0.090"/><circle cx="874.3" cy="525.4" r="1.8" opacity="0.276"/><circle cx="880.9" cy="520.3" r="1.9" opacity="0.105"/><circle cx="896.2" cy="523.7" r="2.3" opacity="0.129"/><circle cx="887.1" cy="526.6" r="2.1" opacity="0.102"/><circle cx="879.4" cy="529.8" r="1.2" opacity="0.097"/><circle cx="909.7" cy="519.5" r="2.0" opacity="0.196"/><circle cx="910.7" cy="534.4" r="2.2" opacity="0.111"/><circle cx="909.7" cy="527.6" r="2.2" opacity="0.148"/><circle cx="900.2" cy="535.2" r="2.2" opacity="0.224"/><circle cx="914.3" cy="527.8" r="1.7" opacity="0.097"/><circle cx="906.8" cy="538.7" r="2.3" opacity="0.143"/><circle cx="906.1" cy="529.7" r="2.4" opacity="0.196"/><circle cx="911.0" cy="539.4" r="2.5" opacity="0.133"/><circle cx="917.7" cy="542.2" r="2.5" opacity="0.234"/><circle cx="933.7" cy="556.4" r="2.8" opacity="0.185"/><circle cx="935.3" cy="543.2" r="1.5" opacity="0.062"/><circle cx="930.7" cy="539.3" r="1.4" opacity="0.090"/><circle cx="930.5" cy="551.4" r="1.9" opacity="0.086"/><circle cx="941.4" cy="558.2" r="1.9" opacity="0.195"/><circle cx="944.0" cy="571.2" r="1.8" opacity="0.097"/><circle cx="933.6" cy="561.3" r="2.6" opacity="0.097"/><circle cx="939.0" cy="579.5" r="2.8" opacity="0.087"/><circle cx="939.7" cy="572.2" r="2.4" opacity="0.114"/><circle cx="941.4" cy="583.9" r="2.5" opacity="0.060"/><circle cx="957.4" cy="587.9" r="2.4" opacity="0.048"/><circle cx="963.2" cy="590.7" r="2.7" opacity="0.119"/><circle cx="965.2" cy="591.2" r="2.6" opacity="0.147"/><circle cx="955.9" cy="595.2" r="2.0" opacity="0.041"/><circle cx="973.5" cy="596.3" r="1.3" opacity="0.125"/><circle cx="960.0" cy="588.7" r="2.3" opacity="0.098"/><circle cx="964.1" cy="589.3" r="2.7" opacity="0.075"/><circle cx="961.6" cy="604.5" r="2.5" opacity="0.133"/><circle cx="976.4" cy="607.1" r="1.6" opacity="0.070"/><circle cx="976.3" cy="617.5" r="2.3" opacity="0.134"/><circle cx="962.6" cy="618.6" r="2.4" opacity="0.117"/><circle cx="962.3" cy="624.1" r="1.2" opacity="0.099"/><circle cx="974.1" cy="635.2" r="1.3" opacity="0.102"/><circle cx="981.7" cy="644.7" r="2.3" opacity="0.103"/><circle cx="975.6" cy="645.9" r="2.4" opacity="0.045"/><circle cx="973.8" cy="646.2" r="2.5" opacity="0.044"/><circle cx="970.3" cy="642.8" r="2.4" opacity="0.108"/><circle cx="974.3" cy="653.7" r="1.2" opacity="0.054"/><circle cx="971.1" cy="663.4" r="1.8" opacity="0.114"/><circle cx="983.4" cy="675.6" r="2.2" opacity="0.129"/><circle cx="969.2" cy="681.2" r="2.8" opacity="0.056"/><circle cx="977.7" cy="674.4" r="1.3" opacity="0.048"/><circle cx="984.3" cy="676.2" r="2.1" opacity="0.109"/><circle cx="978.7" cy="679.6" r="2.5" opacity="0.083"/><circle cx="975.6" cy="693.1" r="2.4" opacity="0.052"/><circle cx="981.9" cy="708.6" r="1.5" opacity="0.069"/><circle cx="986.8" cy="688.5" r="2.2" opacity="0.089"/><circle cx="980.7" cy="701.6" r="1.8" opacity="0.043"/><circle cx="980.1" cy="726.8" r="2.0" opacity="0.063"/><circle cx="970.2" cy="736.4" r="1.2" opacity="0.066"/><circle cx="973.9" cy="720.2" r="1.3" opacity="0.042"/><circle cx="965.7" cy="723.3" r="1.8" opacity="0.064"/><circle cx="978.4" cy="730.7" r="2.8" opacity="0.080"/><circle cx="991.1" cy="749.6" r="2.1" opacity="0.063"/><circle cx="980.0" cy="746.0" r="1.6" opacity="0.125"/><circle cx="978.9" cy="755.3" r="2.6" opacity="0.104"/><circle cx="976.5" cy="766.3" r="1.3" opacity="0.054"/><circle cx="959.5" cy="779.3" r="2.7" opacity="0.085"/><circle cx="948.8" cy="766.8" r="2.1" opacity="0.039"/><circle cx="947.4" cy="793.4" r="1.8" opacity="0.095"/><circle cx="967.7" cy="805.5" r="2.7" opacity="0.108"/><circle cx="958.2" cy="779.5" r="2.4" opacity="0.032"/><circle cx="950.9" cy="796.8" r="2.4" opacity="0.032"/><circle cx="939.1" cy="798.9" r="1.4" opacity="0.035"/><circle cx="948.9" cy="799.9" r="2.6" opacity="0.033"/><circle cx="950.1" cy="807.9" r="2.0" opacity="0.063"/><circle cx="930.5" cy="817.7" r="2.1" opacity="0.031"/><circle cx="939.3" cy="820.7" r="2.0" opacity="0.019"/><circle cx="918.8" cy="833.8" r="2.4" opacity="0.027"/><circle cx="930.4" cy="840.5" r="2.2" opacity="0.028"/><circle cx="918.3" cy="838.1" r="2.5" opacity="0.049"/><circle cx="921.2" cy="832.6" r="1.9" opacity="0.056"/><circle cx="920.0" cy="839.4" r="2.7" opacity="0.047"/><circle cx="924.6" cy="833.8" r="2.1" opacity="0.062"/><circle cx="908.9" cy="861.4" r="1.8" opacity="0.045"/><circle cx="897.9" cy="852.1" r="2.0" opacity="0.043"/><circle cx="904.1" cy="840.6" r="2.5" opacity="0.032"/><circle cx="908.5" cy="857.9" r="2.7" opacity="0.027"/><circle cx="891.1" cy="857.1" r="1.5" opacity="0.015"/><circle cx="884.1" cy="867.3" r="1.4" opacity="0.026"/><circle cx="874.9" cy="865.0" r="2.6" opacity="0.045"/><circle cx="887.7" cy="861.1" r="2.8" opacity="0.027"/><circle cx="859.3" cy="867.7" r="2.0" opacity="0.030"/><circle cx="862.5" cy="863.4" r="2.1" opacity="0.035"/><circle cx="868.1" cy="866.5" r="2.0" opacity="0.022"/><circle cx="853.3" cy="870.7" r="2.1" opacity="0.015"/><circle cx="859.6" cy="869.2" r="1.2" opacity="0.011"/><circle cx="861.3" cy="884.8" r="2.6" opacity="0.010"/><circle cx="843.5" cy="874.1" r="2.7" opacity="0.022"/><circle cx="837.6" cy="889.2" r="2.8" opacity="0.021"/><circle cx="829.5" cy="873.1" r="1.7" opacity="0.012"/><circle cx="827.6" cy="874.4" r="2.4" opacity="0.009"/><circle cx="821.8" cy="642.4" r="2.0" opacity="0.190"/><circle cx="820.3" cy="634.3" r="1.5" opacity="0.241"/><circle cx="811.2" cy="621.6" r="2.6" opacity="0.107"/><circle cx="802.8" cy="615.9" r="1.9" opacity="0.244"/><circle cx="819.1" cy="610.9" r="2.4" opacity="0.109"/><circle cx="811.3" cy="610.3" r="2.3" opacity="0.113"/><circle cx="819.2" cy="593.8" r="2.7" opacity="0.094"/><circle cx="818.3" cy="585.2" r="1.7" opacity="0.284"/><circle cx="829.7" cy="585.3" r="1.9" opacity="0.280"/><circle cx="825.4" cy="580.3" r="2.4" opacity="0.191"/><circle cx="824.9" cy="583.6" r="1.6" opacity="0.250"/><circle cx="832.5" cy="582.5" r="2.7" opacity="0.255"/><circle cx="839.2" cy="581.0" r="2.4" opacity="0.083"/><circle cx="842.8" cy="565.8" r="2.0" opacity="0.131"/><circle cx="844.9" cy="580.0" r="1.8" opacity="0.250"/><circle cx="859.6" cy="574.4" r="2.3" opacity="0.169"/><circle cx="851.7" cy="572.7" r="1.5" opacity="0.270"/><circle cx="866.0" cy="568.5" r="2.0" opacity="0.280"/><circle cx="863.4" cy="578.3" r="2.5" opacity="0.220"/><circle cx="884.0" cy="580.2" r="1.3" opacity="0.183"/><circle cx="872.0" cy="570.7" r="2.2" opacity="0.095"/><circle cx="877.3" cy="574.7" r="2.2" opacity="0.173"/><circle cx="892.6" cy="569.3" r="1.4" opacity="0.219"/><circle cx="886.7" cy="579.9" r="2.2" opacity="0.064"/><circle cx="896.6" cy="577.4" r="2.0" opacity="0.244"/><circle cx="881.8" cy="574.5" r="2.7" opacity="0.146"/><circle cx="909.0" cy="584.8" r="1.7" opacity="0.194"/><circle cx="911.7" cy="597.8" r="1.4" opacity="0.216"/><circle cx="907.8" cy="585.8" r="2.0" opacity="0.138"/><circle cx="916.2" cy="592.2" r="1.7" opacity="0.248"/><circle cx="905.7" cy="591.1" r="2.1" opacity="0.192"/><circle cx="913.2" cy="601.3" r="2.1" opacity="0.104"/><circle cx="917.8" cy="610.0" r="1.5" opacity="0.202"/><circle cx="927.0" cy="621.1" r="1.4" opacity="0.175"/><circle cx="923.7" cy="614.6" r="2.1" opacity="0.164"/><circle cx="923.4" cy="619.3" r="1.4" opacity="0.213"/><circle cx="927.6" cy="629.2" r="2.7" opacity="0.126"/><circle cx="939.5" cy="649.6" r="2.7" opacity="0.119"/><circle cx="945.4" cy="644.1" r="2.5" opacity="0.174"/><circle cx="934.8" cy="655.4" r="2.2" opacity="0.148"/><circle cx="932.0" cy="650.7" r="1.6" opacity="0.127"/><circle cx="944.2" cy="656.1" r="2.7" opacity="0.096"/><circle cx="925.4" cy="644.3" r="1.7" opacity="0.170"/><circle cx="936.7" cy="656.7" r="1.6" opacity="0.175"/><circle cx="942.6" cy="665.3" r="2.4" opacity="0.071"/><circle cx="942.8" cy="666.6" r="1.4" opacity="0.095"/><circle cx="933.7" cy="666.9" r="2.8" opacity="0.110"/><circle cx="936.8" cy="667.4" r="1.5" opacity="0.122"/><circle cx="941.9" cy="681.6" r="2.8" opacity="0.126"/><circle cx="938.3" cy="683.5" r="1.8" opacity="0.054"/><circle cx="926.6" cy="674.4" r="2.6" opacity="0.084"/><circle cx="930.1" cy="686.0" r="2.0" opacity="0.044"/><circle cx="916.8" cy="697.2" r="1.7" opacity="0.112"/><circle cx="926.5" cy="698.8" r="2.8" opacity="0.057"/><circle cx="917.8" cy="705.7" r="2.4" opacity="0.077"/><circle cx="908.6" cy="715.8" r="1.4" opacity="0.146"/><circle cx="911.5" cy="727.7" r="2.6" opacity="0.059"/><circle cx="905.6" cy="725.0" r="1.4" opacity="0.110"/><circle cx="889.4" cy="728.9" r="2.6" opacity="0.105"/><circle cx="895.6" cy="724.9" r="2.5" opacity="0.143"/><circle cx="888.3" cy="743.7" r="1.6" opacity="0.116"/><circle cx="885.3" cy="734.9" r="2.4" opacity="0.117"/><circle cx="875.8" cy="735.2" r="2.2" opacity="0.044"/><circle cx="890.7" cy="740.2" r="1.3" opacity="0.039"/><circle cx="883.3" cy="734.4" r="2.7" opacity="0.119"/><circle cx="872.3" cy="728.4" r="2.3" opacity="0.116"/><circle cx="851.8" cy="745.7" r="1.9" opacity="0.119"/><circle cx="864.4" cy="751.2" r="2.5" opacity="0.087"/><circle cx="847.5" cy="748.6" r="2.7" opacity="0.115"/><circle cx="837.7" cy="750.9" r="2.6" opacity="0.061"/><circle cx="842.1" cy="755.6" r="1.9" opacity="0.072"/><circle cx="815.6" cy="742.8" r="2.8" opacity="0.085"/><circle cx="823.9" cy="754.7" r="1.8" opacity="0.098"/><circle cx="825.2" cy="746.5" r="1.4" opacity="0.035"/><circle cx="818.2" cy="746.7" r="1.4" opacity="0.067"/><circle cx="824.3" cy="741.1" r="2.0" opacity="0.067"/><circle cx="811.7" cy="752.6" r="2.6" opacity="0.086"/><circle cx="815.7" cy="750.7" r="1.5" opacity="0.091"/><circle cx="798.8" cy="746.6" r="1.5" opacity="0.100"/><circle cx="784.5" cy="743.4" r="2.2" opacity="0.038"/><circle cx="797.8" cy="747.3" r="2.6" opacity="0.057"/><circle cx="777.1" cy="746.6" r="1.5" opacity="0.102"/><circle cx="785.0" cy="747.4" r="2.5" opacity="0.043"/><circle cx="784.3" cy="733.9" r="2.8" opacity="0.092"/><circle cx="768.9" cy="744.2" r="2.4" opacity="0.055"/><circle cx="771.5" cy="724.4" r="2.5" opacity="0.094"/><circle cx="761.0" cy="728.0" r="2.8" opacity="0.069"/><circle cx="781.6" cy="714.4" r="1.5" opacity="0.071"/><circle cx="771.1" cy="718.6" r="2.5" opacity="0.077"/><circle cx="755.4" cy="710.1" r="2.7" opacity="0.072"/><circle cx="746.5" cy="703.3" r="2.6" opacity="0.063"/><circle cx="747.1" cy="689.8" r="2.0" opacity="0.061"/><circle cx="740.1" cy="697.8" r="2.8" opacity="0.102"/><circle cx="741.4" cy="693.5" r="2.3" opacity="0.103"/><circle cx="740.9" cy="689.3" r="1.6" opacity="0.101"/><circle cx="730.1" cy="673.7" r="1.8" opacity="0.023"/><circle cx="716.2" cy="658.0" r="2.0" opacity="0.085"/><circle cx="714.7" cy="671.4" r="2.3" opacity="0.077"/><circle cx="722.0" cy="664.5" r="1.9" opacity="0.037"/><circle cx="710.1" cy="636.2" r="2.5" opacity="0.045"/><circle cx="736.1" cy="633.0" r="2.6" opacity="0.065"/><circle cx="722.4" cy="643.4" r="2.4" opacity="0.070"/><circle cx="719.6" cy="634.4" r="2.3" opacity="0.042"/><circle cx="719.6" cy="625.0" r="1.3" opacity="0.020"/><circle cx="720.1" cy="619.6" r="1.9" opacity="0.024"/><circle cx="721.2" cy="610.9" r="1.4" opacity="0.038"/><circle cx="721.2" cy="611.0" r="1.4" opacity="0.053"/><circle cx="723.9" cy="607.2" r="1.6" opacity="0.058"/><circle cx="724.0" cy="587.8" r="1.5" opacity="0.045"/><circle cx="714.8" cy="594.1" r="1.4" opacity="0.051"/><circle cx="709.7" cy="590.9" r="2.0" opacity="0.023"/><circle cx="717.7" cy="575.6" r="2.4" opacity="0.069"/><circle cx="708.5" cy="571.6" r="1.9" opacity="0.045"/><circle cx="712.8" cy="576.6" r="1.6" opacity="0.060"/><circle cx="736.7" cy="566.0" r="2.4" opacity="0.046"/><circle cx="713.9" cy="554.0" r="1.8" opacity="0.066"/><circle cx="728.5" cy="557.2" r="2.8" opacity="0.014"/><circle cx="720.0" cy="543.5" r="2.7" opacity="0.039"/><circle cx="723.7" cy="545.8" r="2.5" opacity="0.020"/><circle cx="717.4" cy="540.7" r="1.7" opacity="0.040"/><circle cx="720.9" cy="526.0" r="2.0" opacity="0.032"/><circle cx="717.5" cy="526.2" r="2.3" opacity="0.023"/><circle cx="723.5" cy="524.3" r="1.8" opacity="0.023"/><circle cx="723.7" cy="517.7" r="2.2" opacity="0.034"/><circle cx="718.0" cy="517.4" r="1.6" opacity="0.028"/></g>
<g filter="url(#b2)" fill="#fff"><circle cx="920" cy="692" r="3.2" opacity="0.55"/><circle cx="913" cy="711" r="2.6" opacity="0.5"/><circle cx="922" cy="715" r="2.2" opacity="0.45"/><circle cx="895" cy="727" r="2.4" opacity="0.3"/><circle cx="907" cy="612" r="2" opacity="0.35"/><circle cx="763.8" cy="720" r="2.2" opacity="0.5"/><circle cx="796" cy="505" r="2.6" opacity="0.4"/><circle cx="823" cy="508" r="2.4" opacity="0.35"/><circle cx="786" cy="520" r="2.4" opacity="0.4"/><circle cx="779" cy="540" r="2.2" opacity="0.4"/><circle cx="772" cy="566" r="2.4" opacity="0.45"/><circle cx="961" cy="774" r="2.6" opacity="0.5"/><circle cx="957" cy="783" r="2" opacity="0.4"/><circle cx="727" cy="493" r="2.4" opacity="0.35"/><circle cx="720" cy="543" r="2.2" opacity="0.3"/><circle cx="865" cy="740" r="2.4" opacity="0.22"/><circle cx="835" cy="746" r="2.6" opacity="0.2"/><circle cx="890" cy="520" r="2.2" opacity="0.35"/><circle cx="915" cy="535" r="2.4" opacity="0.35"/><circle cx="850" cy="572" r="2.0" opacity="0.4"/><circle cx="828" cy="579" r="2.0" opacity="0.4"/><circle cx="873" cy="577" r="2.0" opacity="0.35"/><circle cx="818" cy="590" r="2" opacity="0.35"/></g>
<g filter="url(#b07)" fill="#fff"><circle cx="873.5" cy="667.6" r="1.3" opacity="0.32"/><circle cx="867.2" cy="675.0" r="0.8" opacity="0.30"/><circle cx="856.7" cy="673.7" r="0.8" opacity="0.50"/><circle cx="841.5" cy="679.4" r="1.0" opacity="0.14"/><circle cx="843.6" cy="682.6" r="1.1" opacity="0.32"/><circle cx="833.1" cy="679.3" r="1.3" opacity="0.49"/><circle cx="834.5" cy="671.8" r="1.0" opacity="0.31"/><circle cx="805.9" cy="675.5" r="1.0" opacity="0.37"/><circle cx="803.5" cy="671.6" r="1.1" opacity="0.38"/><circle cx="808.4" cy="665.7" r="0.8" opacity="0.35"/><circle cx="785.2" cy="659.9" r="0.8" opacity="0.51"/><circle cx="793.5" cy="648.1" r="1.3" opacity="0.51"/><circle cx="777.3" cy="639.5" r="1.3" opacity="0.51"/><circle cx="771.8" cy="629.3" r="1.1" opacity="0.34"/><circle cx="773.9" cy="629.9" r="1.1" opacity="0.18"/><circle cx="769.9" cy="609.8" r="1.0" opacity="0.18"/><circle cx="767.8" cy="580.2" r="0.8" opacity="0.27"/><circle cx="782.0" cy="577.5" r="1.3" opacity="0.36"/><circle cx="764.7" cy="568.5" r="0.9" opacity="0.60"/><circle cx="776.9" cy="546.6" r="0.8" opacity="0.38"/><circle cx="783.4" cy="549.0" r="1.0" opacity="0.56"/><circle cx="769.3" cy="552.3" r="0.8" opacity="0.37"/><circle cx="795.8" cy="537.6" r="1.1" opacity="0.60"/><circle cx="781.1" cy="544.0" r="0.9" opacity="0.49"/><circle cx="776.7" cy="531.6" r="1.0" opacity="0.58"/><circle cx="792.7" cy="523.3" r="0.8" opacity="0.30"/><circle cx="788.4" cy="515.6" r="0.9" opacity="0.13"/><circle cx="784.4" cy="510.9" r="0.9" opacity="0.30"/><circle cx="788.1" cy="527.7" r="0.8" opacity="0.36"/><circle cx="795.8" cy="500.0" r="0.8" opacity="0.48"/><circle cx="796.9" cy="511.9" r="1.1" opacity="0.30"/><circle cx="812.7" cy="506.8" r="1.0" opacity="0.43"/><circle cx="820.2" cy="507.9" r="0.8" opacity="0.57"/><circle cx="829.5" cy="514.9" r="0.8" opacity="0.34"/><circle cx="833.9" cy="503.0" r="1.0" opacity="0.26"/><circle cx="853.5" cy="514.9" r="0.9" opacity="0.43"/><circle cx="854.8" cy="512.1" r="1.1" opacity="0.35"/><circle cx="855.4" cy="506.6" r="0.9" opacity="0.47"/><circle cx="876.3" cy="515.8" r="0.8" opacity="0.50"/><circle cx="865.1" cy="522.7" r="1.3" opacity="0.34"/><circle cx="884.6" cy="513.9" r="1.1" opacity="0.34"/><circle cx="893.2" cy="523.2" r="0.9" opacity="0.33"/><circle cx="898.1" cy="524.9" r="0.8" opacity="0.57"/><circle cx="904.2" cy="519.6" r="0.8" opacity="0.39"/><circle cx="909.1" cy="528.6" r="0.9" opacity="0.51"/><circle cx="922.3" cy="545.4" r="1.0" opacity="0.46"/><circle cx="919.5" cy="540.1" r="1.1" opacity="0.14"/><circle cx="939.8" cy="547.9" r="1.0" opacity="0.35"/><circle cx="933.0" cy="552.8" r="1.3" opacity="0.46"/><circle cx="942.1" cy="578.3" r="1.1" opacity="0.42"/><circle cx="953.2" cy="570.7" r="1.3" opacity="0.13"/><circle cx="965.3" cy="565.7" r="1.1" opacity="0.17"/><circle cx="962.5" cy="603.7" r="1.1" opacity="0.36"/><circle cx="959.1" cy="591.8" r="1.1" opacity="0.36"/><circle cx="966.4" cy="621.1" r="1.0" opacity="0.07"/><circle cx="972.9" cy="625.6" r="1.1" opacity="0.36"/><circle cx="972.6" cy="640.3" r="0.8" opacity="0.23"/><circle cx="973.8" cy="631.7" r="0.9" opacity="0.33"/><circle cx="979.4" cy="649.8" r="0.8" opacity="0.12"/><circle cx="979.6" cy="666.0" r="1.3" opacity="0.24"/><circle cx="982.2" cy="672.2" r="0.9" opacity="0.15"/><circle cx="983.5" cy="707.5" r="0.9" opacity="0.20"/><circle cx="976.7" cy="710.0" r="1.3" opacity="0.29"/><circle cx="989.2" cy="724.7" r="0.9" opacity="0.11"/><circle cx="969.2" cy="746.0" r="0.9" opacity="0.30"/><circle cx="959.0" cy="784.5" r="0.9" opacity="0.25"/><circle cx="951.1" cy="783.2" r="0.8" opacity="0.14"/><circle cx="949.6" cy="798.0" r="1.3" opacity="0.15"/><circle cx="945.7" cy="806.9" r="1.3" opacity="0.31"/><circle cx="945.7" cy="799.9" r="1.1" opacity="0.29"/><circle cx="872.2" cy="857.0" r="1.1" opacity="0.12"/><circle cx="820.5" cy="879.4" r="1.0" opacity="0.09"/><circle cx="819.5" cy="634.9" r="1.1" opacity="0.15"/><circle cx="822.6" cy="637.4" r="1.3" opacity="0.47"/><circle cx="823.5" cy="635.6" r="1.3" opacity="0.30"/><circle cx="809.1" cy="626.7" r="1.3" opacity="0.60"/><circle cx="811.9" cy="612.3" r="1.0" opacity="0.49"/><circle cx="818.8" cy="597.2" r="1.1" opacity="0.59"/><circle cx="819.5" cy="607.9" r="1.0" opacity="0.57"/><circle cx="813.5" cy="594.9" r="1.0" opacity="0.41"/><circle cx="811.0" cy="590.9" r="0.9" opacity="0.54"/><circle cx="822.1" cy="583.4" r="0.8" opacity="0.54"/><circle cx="827.0" cy="579.6" r="0.9" opacity="0.15"/><circle cx="836.6" cy="576.5" r="1.1" opacity="0.38"/><circle cx="853.9" cy="588.1" r="0.9" opacity="0.62"/><circle cx="856.0" cy="574.1" r="1.0" opacity="0.30"/><circle cx="864.1" cy="580.5" r="1.0" opacity="0.34"/><circle cx="859.6" cy="576.4" r="1.0" opacity="0.13"/><circle cx="874.7" cy="571.4" r="0.9" opacity="0.49"/><circle cx="872.6" cy="576.0" r="0.8" opacity="0.59"/><circle cx="879.6" cy="585.0" r="1.3" opacity="0.61"/><circle cx="871.3" cy="579.0" r="1.1" opacity="0.39"/><circle cx="912.0" cy="588.0" r="0.9" opacity="0.50"/><circle cx="907.3" cy="585.8" r="1.0" opacity="0.33"/><circle cx="909.1" cy="599.6" r="1.1" opacity="0.54"/><circle cx="919.3" cy="605.9" r="0.8" opacity="0.13"/><circle cx="935.3" cy="624.8" r="1.1" opacity="0.47"/><circle cx="930.1" cy="632.5" r="0.9" opacity="0.34"/><circle cx="931.3" cy="639.2" r="0.9" opacity="0.34"/><circle cx="949.2" cy="648.8" r="1.1" opacity="0.21"/><circle cx="929.9" cy="686.6" r="1.1" opacity="0.36"/><circle cx="928.0" cy="684.7" r="1.1" opacity="0.25"/><circle cx="915.9" cy="691.1" r="1.3" opacity="0.29"/><circle cx="928.6" cy="697.4" r="0.8" opacity="0.36"/><circle cx="926.0" cy="704.7" r="0.8" opacity="0.43"/><circle cx="922.3" cy="713.8" r="0.8" opacity="0.26"/><circle cx="908.7" cy="709.6" r="1.0" opacity="0.35"/><circle cx="907.5" cy="711.5" r="0.8" opacity="0.19"/><circle cx="895.1" cy="727.7" r="0.9" opacity="0.14"/><circle cx="900.7" cy="723.5" r="1.1" opacity="0.15"/><circle cx="898.6" cy="737.1" r="0.8" opacity="0.38"/><circle cx="890.5" cy="733.4" r="1.3" opacity="0.26"/><circle cx="846.8" cy="744.0" r="1.1" opacity="0.22"/><circle cx="835.5" cy="752.9" r="0.9" opacity="0.37"/><circle cx="819.4" cy="754.4" r="1.3" opacity="0.08"/><circle cx="774.6" cy="737.4" r="1.3" opacity="0.12"/><circle cx="769.6" cy="733.8" r="1.3" opacity="0.11"/><circle cx="746.1" cy="701.4" r="1.1" opacity="0.20"/><circle cx="745.2" cy="707.0" r="1.3" opacity="0.33"/><circle cx="744.1" cy="687.8" r="0.8" opacity="0.17"/><circle cx="745.2" cy="683.5" r="1.1" opacity="0.20"/><circle cx="732.3" cy="676.4" r="1.3" opacity="0.19"/><circle cx="737.4" cy="668.8" r="1.3" opacity="0.14"/><circle cx="728.5" cy="660.1" r="0.8" opacity="0.06"/><circle cx="723.5" cy="652.7" r="0.8" opacity="0.15"/><circle cx="721.3" cy="637.9" r="1.0" opacity="0.24"/><circle cx="722.2" cy="611.3" r="1.0" opacity="0.28"/><circle cx="731.2" cy="610.1" r="1.0" opacity="0.27"/><circle cx="725.0" cy="601.2" r="1.1" opacity="0.06"/><circle cx="721.1" cy="528.0" r="1.3" opacity="0.08"/><circle cx="715.7" cy="498.6" r="1.3" opacity="0.08"/></g>
<g filter="url(#b1)" fill="#fff"><circle cx="855.6" cy="668.7" r="1.9" opacity="0.44"/><circle cx="832.0" cy="679.3" r="1.9" opacity="0.34"/><circle cx="825.8" cy="678.0" r="1.6" opacity="0.51"/><circle cx="822.4" cy="687.7" r="1.6" opacity="0.10"/><circle cx="802.3" cy="661.7" r="1.9" opacity="0.31"/><circle cx="797.6" cy="653.4" r="1.6" opacity="0.16"/><circle cx="782.0" cy="648.7" r="1.9" opacity="0.37"/><circle cx="787.1" cy="653.7" r="1.6" opacity="0.25"/><circle cx="776.8" cy="634.1" r="1.6" opacity="0.26"/><circle cx="770.4" cy="622.0" r="1.9" opacity="0.41"/><circle cx="765.6" cy="613.4" r="1.6" opacity="0.50"/><circle cx="780.3" cy="567.8" r="1.9" opacity="0.62"/><circle cx="773.8" cy="569.7" r="1.6" opacity="0.55"/><circle cx="777.6" cy="551.5" r="1.6" opacity="0.43"/><circle cx="786.3" cy="544.0" r="1.9" opacity="0.35"/><circle cx="778.4" cy="539.7" r="1.6" opacity="0.39"/><circle cx="785.6" cy="520.9" r="1.9" opacity="0.25"/><circle cx="815.2" cy="508.3" r="1.6" opacity="0.48"/><circle cx="815.0" cy="516.5" r="1.9" opacity="0.29"/><circle cx="812.4" cy="500.8" r="1.9" opacity="0.61"/><circle cx="845.2" cy="513.3" r="1.6" opacity="0.23"/><circle cx="843.1" cy="519.6" r="1.9" opacity="0.21"/><circle cx="860.4" cy="511.6" r="1.9" opacity="0.10"/><circle cx="878.9" cy="520.0" r="1.9" opacity="0.14"/><circle cx="880.5" cy="519.9" r="1.6" opacity="0.40"/><circle cx="885.4" cy="520.3" r="1.9" opacity="0.57"/><circle cx="910.0" cy="518.2" r="1.9" opacity="0.48"/><circle cx="918.8" cy="545.0" r="1.9" opacity="0.47"/><circle cx="915.0" cy="536.4" r="1.6" opacity="0.36"/><circle cx="931.5" cy="551.6" r="1.9" opacity="0.50"/><circle cx="949.5" cy="569.1" r="1.9" opacity="0.18"/><circle cx="977.3" cy="677.3" r="1.6" opacity="0.30"/><circle cx="970.1" cy="675.2" r="1.6" opacity="0.25"/><circle cx="972.6" cy="695.6" r="1.6" opacity="0.10"/><circle cx="970.3" cy="746.1" r="1.6" opacity="0.37"/><circle cx="963.9" cy="765.9" r="1.9" opacity="0.14"/><circle cx="938.7" cy="800.1" r="1.6" opacity="0.07"/><circle cx="946.5" cy="827.6" r="1.6" opacity="0.05"/><circle cx="892.9" cy="832.9" r="1.6" opacity="0.15"/><circle cx="842.0" cy="885.2" r="1.6" opacity="0.14"/><circle cx="816.8" cy="626.4" r="1.9" opacity="0.39"/><circle cx="813.2" cy="590.7" r="1.6" opacity="0.13"/><circle cx="826.8" cy="584.9" r="1.6" opacity="0.48"/><circle cx="852.3" cy="568.9" r="1.6" opacity="0.51"/><circle cx="838.5" cy="579.6" r="1.9" opacity="0.45"/><circle cx="863.3" cy="576.5" r="1.6" opacity="0.37"/><circle cx="878.1" cy="572.8" r="1.9" opacity="0.31"/><circle cx="903.7" cy="596.9" r="1.9" opacity="0.30"/><circle cx="924.7" cy="620.0" r="1.6" opacity="0.21"/><circle cx="940.8" cy="622.3" r="1.9" opacity="0.47"/><circle cx="934.0" cy="637.9" r="1.6" opacity="0.30"/><circle cx="933.7" cy="665.6" r="1.9" opacity="0.29"/><circle cx="932.4" cy="671.7" r="1.9" opacity="0.15"/><circle cx="928.5" cy="674.6" r="1.6" opacity="0.20"/><circle cx="934.9" cy="699.2" r="1.9" opacity="0.42"/><circle cx="909.3" cy="722.5" r="1.9" opacity="0.32"/><circle cx="912.5" cy="726.4" r="1.9" opacity="0.42"/><circle cx="897.8" cy="725.2" r="1.9" opacity="0.30"/><circle cx="871.4" cy="737.5" r="1.9" opacity="0.35"/><circle cx="860.3" cy="741.6" r="1.6" opacity="0.32"/><circle cx="812.8" cy="750.0" r="1.9" opacity="0.10"/><circle cx="811.0" cy="731.5" r="1.9" opacity="0.23"/><circle cx="800.9" cy="742.5" r="1.9" opacity="0.30"/><circle cx="786.7" cy="746.8" r="1.6" opacity="0.23"/><circle cx="770.1" cy="743.1" r="1.9" opacity="0.13"/><circle cx="763.7" cy="724.5" r="1.6" opacity="0.31"/><circle cx="739.8" cy="713.7" r="1.6" opacity="0.23"/><circle cx="740.1" cy="697.4" r="1.9" opacity="0.07"/><circle cx="728.8" cy="706.3" r="1.6" opacity="0.12"/><circle cx="715.0" cy="487.6" r="1.6" opacity="0.17"/></g>
<g transform="rotate(8 742 575)"><ellipse cx="742" cy="575" rx="40" ry="95" fill="url(#gfaint)" opacity="1.3"/></g>
<g filter="url(#b07)" fill="#fff"><circle cx="731.0" cy="575.9" r="0.9" opacity="0.20"/><circle cx="747.7" cy="573.3" r="1.2" opacity="0.34"/><circle cx="739.3" cy="542.7" r="1.5" opacity="0.32"/><circle cx="717.7" cy="587.4" r="0.9" opacity="0.46"/><circle cx="750.9" cy="484.2" r="0.9" opacity="0.17"/><circle cx="721.2" cy="490.8" r="1.0" opacity="0.14"/><circle cx="735.7" cy="498.2" r="0.8" opacity="0.31"/><circle cx="729.0" cy="579.1" r="0.8" opacity="0.29"/><circle cx="711.8" cy="634.3" r="0.8" opacity="0.31"/><circle cx="764.1" cy="526.4" r="0.8" opacity="0.26"/><circle cx="751.6" cy="652.4" r="0.9" opacity="0.44"/><circle cx="752.4" cy="604.6" r="0.9" opacity="0.12"/><circle cx="764.4" cy="566.9" r="1.2" opacity="0.14"/><circle cx="734.4" cy="568.0" r="1.0" opacity="0.38"/><circle cx="734.1" cy="575.4" r="1.2" opacity="0.19"/><circle cx="743.6" cy="546.2" r="0.9" opacity="0.30"/><circle cx="706.2" cy="537.9" r="0.9" opacity="0.26"/><circle cx="726.7" cy="470.7" r="0.9" opacity="0.43"/><circle cx="735.1" cy="488.5" r="0.9" opacity="0.37"/><circle cx="734.4" cy="570.3" r="0.9" opacity="0.23"/><circle cx="762.5" cy="557.6" r="0.9" opacity="0.50"/><circle cx="732.1" cy="604.8" r="0.9" opacity="0.48"/><circle cx="769.5" cy="612.4" r="0.9" opacity="0.41"/><circle cx="739.0" cy="560.0" r="0.8" opacity="0.25"/><circle cx="729.0" cy="586.6" r="1.2" opacity="0.27"/><circle cx="751.6" cy="512.2" r="0.9" opacity="0.50"/><circle cx="770.3" cy="528.8" r="1.2" opacity="0.45"/><circle cx="746.9" cy="641.7" r="0.9" opacity="0.39"/><circle cx="726.9" cy="639.4" r="1.0" opacity="0.20"/><circle cx="752.9" cy="501.4" r="0.9" opacity="0.27"/><circle cx="757.5" cy="530.4" r="1.0" opacity="0.13"/><circle cx="733.9" cy="621.5" r="1.0" opacity="0.45"/><circle cx="740.2" cy="646.7" r="1.2" opacity="0.54"/><circle cx="747.4" cy="538.0" r="1.2" opacity="0.41"/><circle cx="731.2" cy="520.8" r="1.2" opacity="0.25"/><circle cx="742.6" cy="563.7" r="1.0" opacity="0.41"/><circle cx="754.8" cy="553.9" r="0.9" opacity="0.46"/><circle cx="740.6" cy="603.5" r="0.9" opacity="0.28"/><circle cx="760.9" cy="513.1" r="0.8" opacity="0.15"/><circle cx="741.0" cy="559.6" r="1.0" opacity="0.53"/><circle cx="756.3" cy="546.6" r="1.2" opacity="0.31"/><circle cx="714.7" cy="548.7" r="1.5" opacity="0.45"/><circle cx="743.3" cy="568.2" r="0.8" opacity="0.46"/><circle cx="746.5" cy="564.9" r="0.8" opacity="0.29"/><circle cx="724.6" cy="599.3" r="1.5" opacity="0.36"/><circle cx="745.2" cy="578.1" r="1.2" opacity="0.28"/><circle cx="752.4" cy="601.2" r="0.9" opacity="0.50"/><circle cx="774.8" cy="511.1" r="1.2" opacity="0.29"/><circle cx="754.0" cy="552.5" r="1.0" opacity="0.19"/><circle cx="738.0" cy="534.6" r="1.2" opacity="0.36"/><circle cx="710.7" cy="493.5" r="0.9" opacity="0.54"/><circle cx="732.2" cy="557.0" r="1.2" opacity="0.13"/><circle cx="741.0" cy="556.9" r="1.5" opacity="0.22"/><circle cx="759.5" cy="562.8" r="1.0" opacity="0.17"/><circle cx="736.7" cy="553.1" r="0.8" opacity="0.12"/><circle cx="716.6" cy="556.2" r="1.0" opacity="0.17"/><circle cx="713.4" cy="584.2" r="1.2" opacity="0.20"/><circle cx="750.7" cy="604.8" r="1.0" opacity="0.22"/><circle cx="725.0" cy="600.3" r="0.9" opacity="0.45"/><circle cx="750.6" cy="594.8" r="1.5" opacity="0.14"/><circle cx="727.9" cy="499.3" r="0.9" opacity="0.17"/><circle cx="770.9" cy="596.7" r="1.2" opacity="0.17"/><circle cx="763.9" cy="511.6" r="1.5" opacity="0.37"/><circle cx="753.6" cy="555.1" r="0.8" opacity="0.50"/><circle cx="749.8" cy="518.1" r="1.0" opacity="0.18"/><circle cx="759.9" cy="591.6" r="1.5" opacity="0.43"/><circle cx="761.4" cy="563.2" r="0.8" opacity="0.45"/><circle cx="767.8" cy="556.5" r="1.5" opacity="0.49"/><circle cx="774.3" cy="597.4" r="0.9" opacity="0.45"/><circle cx="729.9" cy="586.1" r="0.8" opacity="0.36"/><circle cx="744.0" cy="564.7" r="1.0" opacity="0.46"/><circle cx="739.1" cy="580.7" r="1.2" opacity="0.46"/><circle cx="753.6" cy="566.3" r="1.0" opacity="0.48"/><circle cx="723.4" cy="494.8" r="0.8" opacity="0.27"/><circle cx="740.1" cy="589.9" r="0.9" opacity="0.41"/><circle cx="781.6" cy="569.7" r="1.0" opacity="0.43"/><circle cx="714.3" cy="592.4" r="0.9" opacity="0.18"/><circle cx="736.4" cy="567.8" r="0.9" opacity="0.39"/><circle cx="755.3" cy="606.6" r="1.2" opacity="0.10"/><circle cx="777.8" cy="532.2" r="0.9" opacity="0.51"/><circle cx="749.2" cy="592.1" r="1.0" opacity="0.18"/><circle cx="746.1" cy="683.0" r="0.8" opacity="0.24"/><circle cx="800.6" cy="668.3" r="0.8" opacity="0.13"/><circle cx="747.5" cy="731.9" r="1.2" opacity="0.37"/><circle cx="766.8" cy="719.2" r="0.9" opacity="0.31"/><circle cx="710.3" cy="704.6" r="0.8" opacity="0.22"/><circle cx="756.8" cy="751.4" r="0.9" opacity="0.23"/><circle cx="755.8" cy="688.9" r="1.0" opacity="0.13"/><circle cx="705.7" cy="694.7" r="0.8" opacity="0.16"/><circle cx="711.9" cy="693.0" r="1.2" opacity="0.21"/><circle cx="729.8" cy="691.6" r="1.0" opacity="0.33"/><circle cx="737.8" cy="716.8" r="0.8" opacity="0.38"/><circle cx="727.3" cy="710.1" r="0.8" opacity="0.29"/><circle cx="763.7" cy="759.1" r="1.0" opacity="0.08"/><circle cx="730.7" cy="696.2" r="1.0" opacity="0.12"/><circle cx="738.2" cy="713.8" r="1.0" opacity="0.25"/><circle cx="747.4" cy="709.6" r="0.8" opacity="0.19"/><circle cx="750.6" cy="709.4" r="1.2" opacity="0.09"/><circle cx="788.1" cy="677.3" r="0.9" opacity="0.25"/><circle cx="745.9" cy="693.8" r="0.9" opacity="0.15"/><circle cx="735.6" cy="719.2" r="0.8" opacity="0.29"/><circle cx="715.5" cy="717.7" r="0.8" opacity="0.30"/><circle cx="765.8" cy="695.1" r="1.2" opacity="0.26"/><circle cx="725.0" cy="727.0" r="1.0" opacity="0.18"/><circle cx="738.8" cy="712.4" r="0.9" opacity="0.10"/><circle cx="762.0" cy="704.9" r="0.8" opacity="0.17"/><circle cx="734.2" cy="739.4" r="0.9" opacity="0.22"/><circle cx="741.2" cy="701.9" r="1.0" opacity="0.10"/><circle cx="718.2" cy="732.8" r="1.0" opacity="0.24"/><circle cx="782.3" cy="680.6" r="1.2" opacity="0.22"/><circle cx="762.5" cy="688.7" r="0.9" opacity="0.27"/><circle cx="701.5" cy="686.9" r="0.8" opacity="0.37"/><circle cx="732.9" cy="712.2" r="1.0" opacity="0.23"/><circle cx="671.8" cy="706.2" r="0.8" opacity="0.30"/><circle cx="753.8" cy="703.7" r="0.9" opacity="0.36"/><circle cx="761.1" cy="758.1" r="0.8" opacity="0.09"/><circle cx="749.7" cy="680.0" r="0.8" opacity="0.08"/><circle cx="698.0" cy="730.3" r="1.0" opacity="0.14"/><circle cx="770.1" cy="738.8" r="1.0" opacity="0.40"/><circle cx="742.2" cy="686.4" r="0.9" opacity="0.32"/><circle cx="737.5" cy="708.9" r="1.0" opacity="0.38"/><circle cx="730.8" cy="755.0" r="0.9" opacity="0.32"/><circle cx="744.2" cy="692.1" r="0.8" opacity="0.16"/><circle cx="709.3" cy="739.7" r="1.2" opacity="0.15"/><circle cx="782.7" cy="699.0" r="1.0" opacity="0.35"/><circle cx="744.8" cy="722.9" r="0.9" opacity="0.23"/><circle cx="756.7" cy="721.6" r="0.9" opacity="0.34"/><circle cx="747.6" cy="727.9" r="0.8" opacity="0.15"/><circle cx="733.7" cy="706.7" r="0.8" opacity="0.19"/><circle cx="749.9" cy="670.4" r="0.8" opacity="0.08"/><circle cx="765.7" cy="717.5" r="0.8" opacity="0.08"/></g>
<path d="M944 690 Q950 712 944 738" stroke="#000" stroke-width="7" fill="none" opacity=".35" filter="url(#b5)"/>
<ellipse cx="846" cy="626" rx="62" ry="66" fill="url(#ginner)"/><ellipse cx="846" cy="624" rx="36" ry="39" fill="url(#ghalo)" opacity=".36"/>
<g transform="rotate(-35 846.4 624.6)"><ellipse cx="846.4" cy="624.6" rx="22" ry="19" fill="url(#gcore2)"/></g>
<g filter="url(#b05)" fill="#fff"><circle cx="1181.5" cy="496.5" r="2.85" opacity="1"/><circle cx="1236" cy="1003.5" r="2.85" opacity="1"/><circle cx="495" cy="372.8" r="2.35" opacity="1"/><circle cx="566.3" cy="376.5" r="2.25" opacity="1"/><circle cx="1466.2" cy="439.2" r="2.35" opacity="1"/><circle cx="1261" cy="723.5" r="2.25" opacity="1"/><circle cx="1638.3" cy="647.8" r="2.15" opacity="1"/><circle cx="332.3" cy="795.2" r="2.25" opacity="1"/><circle cx="979" cy="753.7" r="2.25" opacity="1"/><circle cx="915" cy="583" r="2.05" opacity="1"/><circle cx="902.5" cy="670.7" r="2.05" opacity="1"/><circle cx="823.5" cy="706.8" r="2.05" opacity="1"/><circle cx="1007.5" cy="507.7" r="2.15" opacity="1"/><circle cx="965" cy="530.4" r="1.95" opacity="1"/><circle cx="510" cy="321.6" r="1.95" opacity="0.95"/><circle cx="1063.2" cy="700.8" r="1.95" opacity="0.95"/><circle cx="657" cy="687.7" r="2.05" opacity="0.95"/><circle cx="1042.5" cy="607.5" r="1.85" opacity="0.9"/><circle cx="1414.2" cy="883" r="1.95" opacity="0.95"/><circle cx="1256.5" cy="738.5" r="1.75" opacity="0.85"/><circle cx="1375" cy="762.5" r="1.75" opacity="0.85"/><circle cx="742.5" cy="806" r="1.85" opacity="0.9"/><circle cx="666.1" cy="835.5" r="1.85" opacity="0.9"/><circle cx="716.7" cy="945.3" r="1.85" opacity="0.9"/><circle cx="945.5" cy="673" r="1.75" opacity="0.85"/><circle cx="763.8" cy="720" r="1.85" opacity="0.9"/><circle cx="764" cy="364.5" r="1.85" opacity="0.85"/><circle cx="735" cy="427.8" r="1.75" opacity="0.85"/><circle cx="936" cy="333" r="1.75" opacity="0.85"/><circle cx="663" cy="463.8" r="1.75" opacity="0.85"/><circle cx="1241.5" cy="965.5" r="1.85" opacity="0.8"/><circle cx="881" cy="826" r="1.65" opacity="0.8"/><circle cx="1566.3" cy="537.5" r="1.65" opacity="0.75"/><circle cx="423.2" cy="700.7" r="1.65" opacity="0.8"/><circle cx="1246.5" cy="672.5" r="1.55" opacity="0.7"/><circle cx="1242" cy="660" r="1.45" opacity="0.6"/><circle cx="950" cy="476.8" r="1.65" opacity="0.75"/><circle cx="958" cy="484.5" r="1.55" opacity="0.7"/><circle cx="939.5" cy="616.8" r="1.55" opacity="0.8"/><circle cx="874.5" cy="880" r="1.55" opacity="0.75"/><circle cx="983" cy="876" r="1.55" opacity="0.7"/><circle cx="1056" cy="740.5" r="1.55" opacity="0.7"/><circle cx="1083" cy="756" r="1.45" opacity="0.65"/><circle cx="922" cy="749" r="1.45" opacity="0.6"/><circle cx="1076" cy="786" r="1.45" opacity="0.6"/><circle cx="741" cy="720.8" r="1.45" opacity="0.7"/><circle cx="750" cy="433" r="1.45" opacity="0.6"/><circle cx="961" cy="400.8" r="1.45" opacity="0.6"/><circle cx="929" cy="501.8" r="1.45" opacity="0.55"/><circle cx="925" cy="439" r="1.35" opacity="0.5"/><circle cx="947" cy="457.5" r="1.45" opacity="0.55"/><circle cx="660.8" cy="481" r="1.45" opacity="0.6"/><circle cx="686" cy="491.5" r="1.45" opacity="0.6"/><circle cx="805" cy="323" r="1.45" opacity="0.6"/><circle cx="483" cy="360.8" r="1.45" opacity="0.6"/><circle cx="468.8" cy="475.8" r="1.45" opacity="0.6"/><circle cx="495.8" cy="507" r="1.45" opacity="0.6"/><circle cx="412" cy="392.5" r="1.35" opacity="0.45"/><circle cx="362.5" cy="480.8" r="1.45" opacity="0.55"/><circle cx="417.5" cy="460.8" r="1.35" opacity="0.45"/><circle cx="357.5" cy="520" r="1.35" opacity="0.45"/><circle cx="1308.8" cy="456.2" r="1.55" opacity="0.7"/><circle cx="1290" cy="465" r="1.45" opacity="0.6"/><circle cx="1343.8" cy="399.5" r="1.35" opacity="0.5"/><circle cx="1343" cy="426.2" r="1.35" opacity="0.55"/><circle cx="1355.5" cy="422.5" r="1.35" opacity="0.5"/><circle cx="1350" cy="441.2" r="1.35" opacity="0.5"/><circle cx="1403.8" cy="493" r="1.45" opacity="0.55"/><circle cx="1356.2" cy="551.2" r="1.45" opacity="0.55"/><circle cx="1445" cy="407.5" r="1.35" opacity="0.4"/><circle cx="1510.5" cy="610.5" r="1.45" opacity="0.55"/><circle cx="1423" cy="748.8" r="1.55" opacity="0.65"/><circle cx="1572" cy="725.8" r="1.45" opacity="0.5"/><circle cx="1641.2" cy="566.2" r="1.35" opacity="0.45"/><circle cx="1667.5" cy="594.5" r="1.35" opacity="0.45"/><circle cx="1480.8" cy="928.8" r="1.55" opacity="0.6"/><circle cx="1467.5" cy="920.8" r="1.35" opacity="0.5"/><circle cx="1395" cy="975.5" r="1.45" opacity="0.55"/><circle cx="1428.8" cy="785.8" r="1.35" opacity="0.45"/><circle cx="1502" cy="840.8" r="1.35" opacity="0.45"/><circle cx="1532.5" cy="810.8" r="1.35" opacity="0.4"/><circle cx="265.8" cy="714.2" r="1.55" opacity="0.65"/><circle cx="283.2" cy="683" r="1.45" opacity="0.55"/><circle cx="488.2" cy="586" r="1.55" opacity="0.65"/><circle cx="472.5" cy="746.2" r="1.55" opacity="0.65"/><circle cx="597.5" cy="755.5" r="1.55" opacity="0.65"/><circle cx="648.2" cy="690.5" r="1.45" opacity="0.55"/><circle cx="473" cy="568.8" r="1.35" opacity="0.5"/><circle cx="527.5" cy="581.2" r="1.35" opacity="0.5"/><circle cx="403.2" cy="745.8" r="1.35" opacity="0.5"/><circle cx="336.8" cy="590.5" r="1.35" opacity="0.45"/><circle cx="278.2" cy="648.2" r="1.35" opacity="0.45"/><circle cx="242.5" cy="719.5" r="1.35" opacity="0.45"/><circle cx="304.2" cy="748.8" r="1.35" opacity="0.45"/><circle cx="557" cy="839" r="1.55" opacity="0.65"/><circle cx="500.5" cy="877.3" r="1.55" opacity="0.65"/><circle cx="635" cy="898.7" r="1.45" opacity="0.6"/><circle cx="686.8" cy="951.5" r="1.45" opacity="0.55"/><circle cx="777" cy="833.8" r="1.45" opacity="0.5"/><circle cx="1360" cy="578.5" r="1.45" opacity="0.5"/><circle cx="1344" cy="569" r="1.35" opacity="0.45"/><circle cx="1035" cy="567.8" r="1.45" opacity="0.55"/><circle cx="1150" cy="739" r="1.45" opacity="0.55"/><circle cx="1237.5" cy="751" r="1.35" opacity="0.5"/><circle cx="1177.5" cy="354" r="1.35" opacity="0.45"/><circle cx="1152.5" cy="511" r="1.35" opacity="0.5"/><circle cx="982.5" cy="875" r="1.35" opacity="0.5"/><circle cx="1094" cy="860" r="1.35" opacity="0.5"/><circle cx="1122.5" cy="846.5" r="1.35" opacity="0.5"/></g>
<path d="M1179.60 496.70L1181.30 512.70L1183.00 496.70ZM1183.00 496.70L1181.30 486.70L1179.60 496.70ZM1180.40 498.14L1192.32 503.59L1182.20 495.26ZM1180.40 495.26L1171.12 503.06L1182.20 498.14ZM1182.23 495.27L1171.24 490.16L1180.37 498.13ZM1182.23 498.13L1191.36 490.16L1180.37 495.27Z" fill="#fff" opacity=".5" filter="url(#b1)"/>
<circle cx="1181.3" cy="496.7" r="3.4" fill="#fff" opacity=".5" filter="url(#b1)"/>
<path d="M1234.64 1003.50L1236.00 1016.30L1237.36 1003.50ZM1237.36 1003.50L1236.00 995.50L1234.64 1003.50ZM1235.28 1004.65L1244.82 1009.01L1236.72 1002.35ZM1235.28 1002.35L1227.86 1008.59L1236.72 1004.65ZM1236.74 1002.36L1227.95 998.27L1235.26 1004.64ZM1236.74 1004.64L1244.05 998.27L1235.26 1002.36Z" fill="#fff" opacity=".5" filter="url(#b1)"/>
<circle cx="1236" cy="1003.5" r="3.4" fill="#fff" opacity=".5" filter="url(#b1)"/>
<ellipse cx="550" cy="468.8" rx="1.6" ry="2.6" transform="rotate(20 550 468.8)" fill="#fff" opacity="0.28" filter="url(#b1)"/>
<ellipse cx="441.2" cy="715" rx="2.6" ry="1.3" transform="rotate(-30 441.2 715)" fill="#fff" opacity="0.3" filter="url(#b1)"/>
<ellipse cx="505" cy="853.2" rx="1.4" ry="2.2" transform="rotate(20 505 853.2)" fill="#fff" opacity="0.3" filter="url(#b1)"/>
<ellipse cx="1361.2" cy="371.8" rx="2.2" ry="1.3" transform="rotate(10 1361.2 371.8)" fill="#fff" opacity="0.25" filter="url(#b1)"/>
<ellipse cx="1006.5" cy="892.5" rx="2" ry="2" transform="rotate(0 1006.5 892.5)" fill="#fff" opacity="0.25" filter="url(#b1)"/>
<g filter="url(#b05)" fill="#fff"><circle cx="570.7" cy="431.0" r="0.9" opacity="0.13"/><circle cx="1274.5" cy="417.7" r="1.2" opacity="0.12"/><circle cx="492.6" cy="736.8" r="1.0" opacity="0.04"/><circle cx="1469.8" cy="507.4" r="1.0" opacity="0.09"/><circle cx="874.5" cy="988.8" r="1.0" opacity="0.09"/><circle cx="733.3" cy="543.6" r="0.8" opacity="0.13"/><circle cx="1255.9" cy="691.4" r="0.9" opacity="0.18"/><circle cx="1429.7" cy="745.2" r="1.2" opacity="0.08"/><circle cx="924.6" cy="410.8" r="1.0" opacity="0.10"/><circle cx="1305.3" cy="901.4" r="1.2" opacity="0.06"/><circle cx="230.8" cy="720.3" r="0.9" opacity="0.05"/><circle cx="275.1" cy="677.4" r="1.2" opacity="0.06"/><circle cx="753.7" cy="691.6" r="0.8" opacity="0.13"/><circle cx="652.0" cy="773.9" r="1.0" opacity="0.08"/><circle cx="1165.3" cy="322.0" r="0.8" opacity="0.08"/><circle cx="853.0" cy="684.8" r="1.0" opacity="0.07"/><circle cx="1174.1" cy="957.0" r="1.0" opacity="0.04"/><circle cx="513.5" cy="853.4" r="0.9" opacity="0.04"/><circle cx="1233.7" cy="954.7" r="1.0" opacity="0.07"/><circle cx="1101.5" cy="720.4" r="1.2" opacity="0.12"/><circle cx="642.6" cy="964.9" r="1.0" opacity="0.20"/><circle cx="1475.6" cy="499.8" r="0.8" opacity="0.09"/><circle cx="1013.4" cy="395.5" r="1.0" opacity="0.09"/><circle cx="399.7" cy="511.4" r="1.0" opacity="0.04"/><circle cx="948.4" cy="637.2" r="0.8" opacity="0.09"/><circle cx="661.0" cy="854.2" r="0.8" opacity="0.05"/><circle cx="741.8" cy="982.0" r="1.0" opacity="0.15"/><circle cx="1014.2" cy="321.9" r="0.8" opacity="0.17"/><circle cx="1299.0" cy="964.2" r="1.0" opacity="0.05"/><circle cx="997.7" cy="622.9" r="0.8" opacity="0.05"/><circle cx="1692.8" cy="603.6" r="0.9" opacity="0.30"/><circle cx="1589.4" cy="688.5" r="1.0" opacity="0.17"/><circle cx="1437.5" cy="510.1" r="0.8" opacity="0.12"/><circle cx="1065.5" cy="903.9" r="1.0" opacity="0.14"/><circle cx="634.9" cy="544.0" r="0.9" opacity="0.12"/><circle cx="1448.6" cy="679.1" r="0.9" opacity="0.12"/><circle cx="979.3" cy="637.6" r="0.8" opacity="0.07"/><circle cx="828.4" cy="1005.5" r="1.2" opacity="0.06"/><circle cx="1529.5" cy="805.8" r="0.8" opacity="0.05"/><circle cx="1506.1" cy="508.8" r="1.0" opacity="0.07"/><circle cx="811.3" cy="929.6" r="1.0" opacity="0.15"/><circle cx="215.1" cy="686.8" r="1.0" opacity="0.06"/><circle cx="1472.6" cy="746.5" r="0.9" opacity="0.06"/><circle cx="418.9" cy="737.3" r="1.2" opacity="0.07"/><circle cx="1214.2" cy="403.4" r="1.0" opacity="0.05"/><circle cx="383.6" cy="788.1" r="1.0" opacity="0.15"/><circle cx="1008.7" cy="529.5" r="0.9" opacity="0.13"/><circle cx="1351.1" cy="865.2" r="1.0" opacity="0.05"/><circle cx="574.9" cy="586.4" r="0.9" opacity="0.07"/><circle cx="484.5" cy="814.8" r="0.8" opacity="0.11"/><circle cx="779.1" cy="817.9" r="1.0" opacity="0.08"/><circle cx="969.0" cy="981.4" r="1.2" opacity="0.40"/><circle cx="852.8" cy="921.0" r="1.0" opacity="0.06"/><circle cx="1317.7" cy="414.4" r="0.9" opacity="0.08"/><circle cx="770.9" cy="899.4" r="1.0" opacity="0.39"/><circle cx="906.3" cy="620.3" r="1.2" opacity="0.09"/><circle cx="1105.0" cy="678.7" r="1.2" opacity="0.08"/><circle cx="1594.7" cy="779.6" r="0.9" opacity="0.04"/><circle cx="945.1" cy="567.3" r="1.0" opacity="0.17"/><circle cx="1306.2" cy="384.0" r="0.8" opacity="0.24"/><circle cx="1032.6" cy="978.1" r="0.8" opacity="0.04"/><circle cx="1094.4" cy="428.9" r="0.9" opacity="0.15"/><circle cx="589.1" cy="542.1" r="0.8" opacity="0.27"/><circle cx="537.6" cy="727.4" r="0.9" opacity="0.05"/><circle cx="1342.8" cy="425.4" r="1.0" opacity="0.08"/><circle cx="1456.5" cy="542.7" r="1.0" opacity="0.06"/><circle cx="1446.4" cy="966.9" r="0.9" opacity="0.16"/><circle cx="809.5" cy="866.9" r="1.0" opacity="0.07"/><circle cx="1273.7" cy="632.0" r="1.0" opacity="0.15"/><circle cx="930.5" cy="648.9" r="1.0" opacity="0.04"/><circle cx="1014.7" cy="357.9" r="0.8" opacity="0.33"/><circle cx="1603.3" cy="561.6" r="0.8" opacity="0.05"/><circle cx="747.6" cy="717.5" r="1.0" opacity="0.28"/><circle cx="1210.0" cy="894.3" r="1.2" opacity="0.04"/><circle cx="1214.4" cy="344.9" r="0.8" opacity="0.12"/><circle cx="374.2" cy="572.9" r="1.0" opacity="0.32"/><circle cx="406.3" cy="473.8" r="1.2" opacity="0.07"/><circle cx="720.8" cy="430.3" r="1.0" opacity="0.09"/><circle cx="1403.1" cy="415.0" r="1.2" opacity="0.15"/><circle cx="1217.0" cy="765.6" r="0.9" opacity="0.04"/><circle cx="740.1" cy="479.4" r="1.0" opacity="0.23"/><circle cx="332.6" cy="696.1" r="0.8" opacity="0.11"/><circle cx="1240.9" cy="521.0" r="1.0" opacity="0.07"/><circle cx="1525.9" cy="460.5" r="1.0" opacity="0.16"/><circle cx="890.6" cy="592.8" r="0.9" opacity="0.08"/><circle cx="548.1" cy="834.9" r="1.2" opacity="0.04"/><circle cx="535.9" cy="537.8" r="1.0" opacity="0.15"/><circle cx="515.7" cy="691.7" r="0.8" opacity="0.05"/><circle cx="1440.8" cy="854.1" r="0.9" opacity="0.08"/><circle cx="1110.7" cy="601.4" r="1.0" opacity="0.05"/><circle cx="904.8" cy="957.8" r="1.0" opacity="0.05"/><circle cx="675.3" cy="883.9" r="1.2" opacity="0.04"/><circle cx="532.6" cy="437.4" r="1.2" opacity="0.10"/><circle cx="1336.0" cy="462.5" r="1.0" opacity="0.04"/><circle cx="1503.7" cy="592.8" r="0.9" opacity="0.04"/><circle cx="1401.2" cy="424.6" r="0.9" opacity="0.05"/><circle cx="849.0" cy="348.7" r="1.0" opacity="0.04"/><circle cx="571.4" cy="892.9" r="1.2" opacity="0.04"/><circle cx="1137.1" cy="781.4" r="1.0" opacity="0.11"/><circle cx="1328.8" cy="992.7" r="1.2" opacity="0.08"/><circle cx="1050.5" cy="832.0" r="1.0" opacity="0.09"/><circle cx="1338.8" cy="863.9" r="1.2" opacity="0.19"/><circle cx="1114.8" cy="929.2" r="1.2" opacity="0.05"/><circle cx="1089.6" cy="840.5" r="1.0" opacity="0.16"/><circle cx="631.6" cy="426.8" r="1.0" opacity="0.19"/><circle cx="1109.0" cy="344.9" r="0.9" opacity="0.14"/><circle cx="1332.8" cy="553.1" r="0.9" opacity="0.11"/><circle cx="933.8" cy="702.5" r="1.0" opacity="0.27"/><circle cx="724.1" cy="777.9" r="0.9" opacity="0.12"/><circle cx="625.6" cy="733.0" r="1.2" opacity="0.04"/><circle cx="1422.9" cy="795.7" r="0.9" opacity="0.08"/><circle cx="1183.9" cy="623.7" r="0.9" opacity="0.05"/><circle cx="1145.3" cy="834.1" r="1.2" opacity="0.08"/><circle cx="1369.0" cy="565.8" r="0.9" opacity="0.11"/><circle cx="616.7" cy="357.9" r="1.0" opacity="0.14"/><circle cx="1482.5" cy="729.1" r="1.2" opacity="0.07"/><circle cx="441.5" cy="310.5" r="1.2" opacity="0.04"/><circle cx="666.2" cy="657.1" r="1.0" opacity="0.15"/><circle cx="1529.8" cy="827.2" r="0.8" opacity="0.11"/><circle cx="892.6" cy="912.9" r="1.2" opacity="0.07"/><circle cx="726.2" cy="367.0" r="0.8" opacity="0.11"/><circle cx="386.1" cy="409.1" r="0.9" opacity="0.13"/><circle cx="551.3" cy="636.5" r="0.8" opacity="0.06"/><circle cx="783.6" cy="774.7" r="1.0" opacity="0.22"/><circle cx="1293.1" cy="420.1" r="1.2" opacity="0.04"/><circle cx="781.8" cy="676.7" r="1.2" opacity="0.05"/><circle cx="1064.7" cy="935.2" r="0.8" opacity="0.04"/><circle cx="309.4" cy="531.7" r="1.0" opacity="0.05"/><circle cx="1454.3" cy="961.6" r="0.8" opacity="0.07"/><circle cx="979.5" cy="633.7" r="1.2" opacity="0.15"/><circle cx="704.3" cy="603.9" r="1.2" opacity="0.10"/><circle cx="1311.1" cy="616.0" r="0.9" opacity="0.05"/><circle cx="906.4" cy="474.9" r="1.0" opacity="0.12"/><circle cx="735.1" cy="740.0" r="0.8" opacity="0.05"/><circle cx="990.4" cy="677.6" r="1.0" opacity="0.12"/><circle cx="850.0" cy="334.1" r="0.9" opacity="0.24"/><circle cx="872.5" cy="914.6" r="1.0" opacity="0.08"/><circle cx="489.0" cy="347.5" r="1.2" opacity="0.11"/><circle cx="464.6" cy="760.1" r="1.0" opacity="0.07"/><circle cx="1472.4" cy="830.9" r="1.0" opacity="0.12"/><circle cx="1088.6" cy="705.2" r="1.0" opacity="0.04"/><circle cx="504.7" cy="693.1" r="0.9" opacity="0.04"/><circle cx="681.8" cy="524.1" r="1.0" opacity="0.07"/><circle cx="578.1" cy="505.9" r="1.0" opacity="0.11"/><circle cx="795.6" cy="859.3" r="0.9" opacity="0.24"/><circle cx="1666.4" cy="662.2" r="1.2" opacity="0.21"/><circle cx="1327.8" cy="653.7" r="1.0" opacity="0.08"/><circle cx="1493.0" cy="824.5" r="1.0" opacity="0.05"/><circle cx="774.3" cy="319.3" r="1.0" opacity="0.10"/><circle cx="1065.1" cy="718.1" r="1.0" opacity="0.04"/><circle cx="1108.3" cy="355.8" r="1.2" opacity="0.05"/><circle cx="452.9" cy="854.3" r="1.0" opacity="0.04"/><circle cx="960.6" cy="618.3" r="1.2" opacity="0.21"/><circle cx="294.2" cy="673.4" r="1.0" opacity="0.05"/><circle cx="1295.0" cy="753.8" r="0.8" opacity="0.06"/><circle cx="730.1" cy="875.0" r="1.0" opacity="0.08"/><circle cx="1503.4" cy="516.6" r="1.2" opacity="0.09"/><circle cx="1167.6" cy="812.4" r="0.8" opacity="0.12"/><circle cx="548.2" cy="877.4" r="1.0" opacity="0.04"/><circle cx="1404.3" cy="388.6" r="1.2" opacity="0.04"/><circle cx="992.8" cy="856.4" r="1.0" opacity="0.13"/><circle cx="1480.5" cy="919.4" r="0.8" opacity="0.07"/><circle cx="1278.1" cy="737.2" r="0.9" opacity="0.14"/><circle cx="1427.5" cy="685.8" r="1.0" opacity="0.04"/><circle cx="1243.8" cy="501.2" r="1.0" opacity="0.05"/><circle cx="323.5" cy="765.7" r="1.0" opacity="0.04"/><circle cx="993.0" cy="509.9" r="0.8" opacity="0.21"/><circle cx="903.7" cy="404.6" r="0.9" opacity="0.16"/><circle cx="751.2" cy="366.7" r="1.2" opacity="0.06"/><circle cx="1357.8" cy="791.2" r="1.0" opacity="0.11"/><circle cx="1024.3" cy="487.0" r="1.0" opacity="0.18"/><circle cx="1120.6" cy="341.5" r="0.9" opacity="0.07"/><circle cx="881.4" cy="449.2" r="1.2" opacity="0.11"/><circle cx="1449.2" cy="799.5" r="0.9" opacity="0.05"/><circle cx="1117.6" cy="515.2" r="1.0" opacity="0.19"/><circle cx="718.0" cy="475.6" r="0.9" opacity="0.06"/><circle cx="1299.7" cy="941.9" r="1.2" opacity="0.04"/><circle cx="698.9" cy="959.4" r="1.0" opacity="0.10"/><circle cx="500.5" cy="456.8" r="1.0" opacity="0.26"/><circle cx="522.5" cy="713.7" r="0.8" opacity="0.06"/><circle cx="1648.5" cy="615.2" r="1.0" opacity="0.05"/><circle cx="543.5" cy="595.6" r="1.2" opacity="0.06"/><circle cx="1213.0" cy="933.3" r="0.8" opacity="0.07"/><circle cx="319.5" cy="781.5" r="0.8" opacity="0.22"/><circle cx="1206.1" cy="424.2" r="1.2" opacity="0.10"/><circle cx="338.3" cy="721.6" r="0.9" opacity="0.07"/><circle cx="1543.9" cy="586.6" r="1.0" opacity="0.07"/><circle cx="882.3" cy="568.7" r="1.0" opacity="0.07"/><circle cx="1492.9" cy="860.4" r="1.2" opacity="0.09"/><circle cx="1309.3" cy="795.9" r="1.2" opacity="0.05"/><circle cx="531.5" cy="818.7" r="1.2" opacity="0.08"/><circle cx="1207.5" cy="483.3" r="1.2" opacity="0.06"/><circle cx="1494.4" cy="550.8" r="1.0" opacity="0.05"/><circle cx="498.1" cy="616.1" r="0.8" opacity="0.07"/><circle cx="795.7" cy="1003.1" r="1.2" opacity="0.08"/><circle cx="286.8" cy="697.8" r="1.2" opacity="0.09"/><circle cx="1470.8" cy="449.6" r="0.8" opacity="0.04"/><circle cx="948.4" cy="459.7" r="1.0" opacity="0.06"/><circle cx="1083.6" cy="576.3" r="0.8" opacity="0.04"/><circle cx="1042.4" cy="766.2" r="0.8" opacity="0.05"/><circle cx="1009.7" cy="965.6" r="0.9" opacity="0.13"/><circle cx="726.4" cy="506.1" r="0.8" opacity="0.07"/><circle cx="606.4" cy="339.6" r="1.2" opacity="0.07"/><circle cx="649.4" cy="950.2" r="0.9" opacity="0.06"/><circle cx="785.2" cy="930.2" r="0.8" opacity="0.10"/><circle cx="1178.1" cy="534.7" r="0.8" opacity="0.09"/><circle cx="1048.4" cy="368.4" r="1.0" opacity="0.05"/><circle cx="1462.6" cy="605.0" r="1.0" opacity="0.04"/><circle cx="485.5" cy="633.3" r="1.0" opacity="0.08"/><circle cx="1350.8" cy="940.0" r="0.9" opacity="0.10"/><circle cx="599.3" cy="911.3" r="1.2" opacity="0.12"/><circle cx="650.5" cy="868.0" r="1.0" opacity="0.09"/><circle cx="383.0" cy="722.6" r="1.0" opacity="0.04"/><circle cx="673.1" cy="528.5" r="1.0" opacity="0.04"/><circle cx="1160.6" cy="609.6" r="0.8" opacity="0.08"/><circle cx="527.3" cy="387.7" r="0.8" opacity="0.15"/><circle cx="469.9" cy="580.1" r="0.8" opacity="0.06"/><circle cx="1250.0" cy="455.8" r="1.0" opacity="0.12"/><circle cx="1334.2" cy="921.0" r="0.8" opacity="0.09"/><circle cx="1278.0" cy="336.7" r="0.9" opacity="0.07"/><circle cx="1119.3" cy="1011.4" r="1.0" opacity="0.08"/><circle cx="1228.2" cy="423.6" r="0.8" opacity="0.04"/><circle cx="798.3" cy="872.6" r="0.8" opacity="0.19"/><circle cx="797.1" cy="1001.9" r="1.0" opacity="0.18"/><circle cx="1066.5" cy="573.0" r="0.8" opacity="0.04"/><circle cx="1401.6" cy="962.2" r="1.2" opacity="0.12"/><circle cx="1478.7" cy="740.8" r="1.2" opacity="0.10"/><circle cx="661.5" cy="417.8" r="1.0" opacity="0.04"/><circle cx="410.5" cy="765.9" r="1.0" opacity="0.26"/><circle cx="1236.2" cy="435.4" r="1.0" opacity="0.08"/><circle cx="1297.0" cy="971.5" r="0.9" opacity="0.10"/><circle cx="830.9" cy="801.5" r="0.8" opacity="0.07"/><circle cx="1227.8" cy="417.0" r="1.0" opacity="0.07"/><circle cx="491.1" cy="389.2" r="1.0" opacity="0.09"/><circle cx="987.6" cy="787.5" r="0.9" opacity="0.07"/><circle cx="549.8" cy="896.8" r="0.9" opacity="0.10"/><circle cx="1118.7" cy="638.0" r="1.2" opacity="0.21"/><circle cx="838.5" cy="656.4" r="1.2" opacity="0.15"/><circle cx="520.3" cy="893.7" r="0.8" opacity="0.11"/><circle cx="684.4" cy="845.8" r="0.9" opacity="0.06"/><circle cx="492.4" cy="448.7" r="0.9" opacity="0.08"/><circle cx="489.3" cy="542.4" r="1.0" opacity="0.07"/><circle cx="835.2" cy="887.7" r="0.9" opacity="0.21"/><circle cx="1223.9" cy="820.2" r="1.0" opacity="0.04"/><circle cx="570.0" cy="481.9" r="0.8" opacity="0.09"/><circle cx="1302.4" cy="866.3" r="1.0" opacity="0.06"/><circle cx="1437.6" cy="623.5" r="0.9" opacity="0.09"/><circle cx="423.8" cy="457.8" r="1.2" opacity="0.16"/><circle cx="772.6" cy="699.8" r="1.0" opacity="0.08"/><circle cx="694.2" cy="829.6" r="1.0" opacity="0.07"/><circle cx="1306.7" cy="592.6" r="0.9" opacity="0.08"/><circle cx="783.9" cy="491.2" r="1.2" opacity="0.04"/><circle cx="1109.7" cy="525.9" r="1.0" opacity="0.11"/><circle cx="1349.8" cy="540.8" r="0.8" opacity="0.07"/><circle cx="438.2" cy="467.6" r="0.8" opacity="0.04"/><circle cx="931.0" cy="933.6" r="1.0" opacity="0.05"/><circle cx="1192.2" cy="631.8" r="1.2" opacity="0.05"/><circle cx="1260.7" cy="769.0" r="1.0" opacity="0.14"/><circle cx="1363.3" cy="870.1" r="1.2" opacity="0.16"/><circle cx="1091.1" cy="937.8" r="1.0" opacity="0.04"/><circle cx="1691.2" cy="570.5" r="1.0" opacity="0.04"/><circle cx="1451.9" cy="976.6" r="0.8" opacity="0.14"/><circle cx="899.4" cy="483.8" r="1.0" opacity="0.04"/><circle cx="1417.1" cy="942.0" r="1.2" opacity="0.21"/><circle cx="796.6" cy="907.1" r="1.0" opacity="0.11"/><circle cx="302.2" cy="606.4" r="1.0" opacity="0.17"/><circle cx="1018.4" cy="543.3" r="1.0" opacity="0.05"/><circle cx="1205.3" cy="701.3" r="0.9" opacity="0.07"/><circle cx="604.6" cy="320.5" r="1.0" opacity="0.20"/><circle cx="1148.2" cy="620.3" r="1.0" opacity="0.10"/><circle cx="1475.8" cy="508.7" r="1.0" opacity="0.09"/><circle cx="1523.5" cy="796.2" r="0.8" opacity="0.18"/><circle cx="946.3" cy="372.3" r="0.8" opacity="0.08"/><circle cx="985.9" cy="717.0" r="1.0" opacity="0.11"/><circle cx="1032.0" cy="330.9" r="1.0" opacity="0.06"/><circle cx="1045.6" cy="414.3" r="0.9" opacity="0.06"/><circle cx="466.0" cy="816.3" r="0.8" opacity="0.06"/><circle cx="1457.9" cy="971.7" r="0.8" opacity="0.05"/><circle cx="963.4" cy="330.2" r="1.2" opacity="0.30"/><circle cx="840.9" cy="678.6" r="1.0" opacity="0.15"/><circle cx="539.3" cy="543.0" r="0.9" opacity="0.09"/><circle cx="1516.7" cy="640.8" r="1.2" opacity="0.08"/><circle cx="1205.1" cy="312.0" r="0.8" opacity="0.10"/><circle cx="732.1" cy="440.4" r="0.9" opacity="0.07"/><circle cx="857.9" cy="806.7" r="0.9" opacity="0.04"/><circle cx="983.7" cy="559.8" r="1.0" opacity="0.17"/><circle cx="475.3" cy="669.8" r="1.2" opacity="0.07"/><circle cx="658.5" cy="710.2" r="0.8" opacity="0.05"/><circle cx="1226.4" cy="541.2" r="1.2" opacity="0.24"/><circle cx="1114.6" cy="365.5" r="0.9" opacity="0.07"/><circle cx="1445.3" cy="500.7" r="1.0" opacity="0.06"/><circle cx="1484.4" cy="593.2" r="1.0" opacity="0.09"/><circle cx="1227.3" cy="476.8" r="0.9" opacity="0.20"/><circle cx="543.8" cy="870.9" r="1.0" opacity="0.04"/><circle cx="616.9" cy="901.2" r="1.0" opacity="0.04"/><circle cx="396.7" cy="459.1" r="1.2" opacity="0.05"/><circle cx="939.0" cy="912.1" r="1.0" opacity="0.20"/><circle cx="1280.9" cy="976.2" r="0.9" opacity="0.19"/><circle cx="1490.2" cy="566.3" r="1.0" opacity="0.11"/><circle cx="1247.4" cy="617.5" r="0.8" opacity="0.16"/><circle cx="1046.8" cy="506.7" r="1.2" opacity="0.04"/><circle cx="1111.6" cy="973.7" r="1.0" opacity="0.11"/><circle cx="1331.0" cy="803.4" r="1.2" opacity="0.10"/><circle cx="1059.1" cy="488.3" r="1.2" opacity="0.10"/><circle cx="1288.4" cy="589.6" r="1.2" opacity="0.19"/><circle cx="1676.7" cy="612.0" r="1.2" opacity="0.20"/><circle cx="488.1" cy="382.7" r="1.0" opacity="0.15"/><circle cx="1521.5" cy="521.2" r="0.9" opacity="0.04"/><circle cx="705.3" cy="336.8" r="1.0" opacity="0.05"/><circle cx="651.0" cy="672.3" r="1.2" opacity="0.07"/><circle cx="1565.4" cy="651.9" r="0.9" opacity="0.10"/><circle cx="377.7" cy="582.9" r="0.8" opacity="0.05"/><circle cx="1615.1" cy="649.1" r="0.9" opacity="0.08"/><circle cx="1356.6" cy="672.2" r="1.0" opacity="0.13"/><circle cx="987.2" cy="860.7" r="1.2" opacity="0.28"/><circle cx="862.2" cy="970.1" r="0.9" opacity="0.04"/><circle cx="902.0" cy="674.7" r="0.8" opacity="0.05"/><circle cx="1118.1" cy="547.3" r="1.0" opacity="0.30"/><circle cx="1291.7" cy="416.5" r="0.9" opacity="0.20"/><circle cx="1369.7" cy="640.6" r="1.0" opacity="0.04"/><circle cx="610.3" cy="374.4" r="0.8" opacity="0.22"/><circle cx="1153.4" cy="808.2" r="1.0" opacity="0.15"/><circle cx="1637.7" cy="623.5" r="1.2" opacity="0.22"/><circle cx="595.9" cy="749.9" r="1.2" opacity="0.05"/><circle cx="381.5" cy="721.0" r="0.9" opacity="0.06"/><circle cx="1166.6" cy="810.9" r="1.0" opacity="0.04"/><circle cx="1047.8" cy="529.2" r="0.9" opacity="0.11"/><circle cx="1190.5" cy="400.3" r="0.9" opacity="0.19"/><circle cx="613.7" cy="605.2" r="0.8" opacity="0.20"/><circle cx="942.4" cy="678.1" r="0.8" opacity="0.12"/><circle cx="563.4" cy="505.0" r="1.2" opacity="0.09"/><circle cx="1140.8" cy="590.5" r="1.0" opacity="0.12"/><circle cx="581.2" cy="891.0" r="0.8" opacity="0.17"/><circle cx="889.1" cy="438.3" r="1.2" opacity="0.08"/><circle cx="364.9" cy="613.4" r="1.2" opacity="0.09"/><circle cx="618.0" cy="644.1" r="1.0" opacity="0.17"/><circle cx="709.0" cy="687.7" r="1.2" opacity="0.08"/><circle cx="677.2" cy="321.9" r="0.8" opacity="0.21"/><circle cx="635.1" cy="585.7" r="0.8" opacity="0.13"/><circle cx="1150.6" cy="898.1" r="1.2" opacity="0.05"/><circle cx="1282.1" cy="684.4" r="1.2" opacity="0.04"/><circle cx="1008.3" cy="699.1" r="1.0" opacity="0.23"/><circle cx="728.7" cy="376.9" r="0.9" opacity="0.14"/><circle cx="425.0" cy="358.0" r="1.0" opacity="0.04"/><circle cx="1122.6" cy="564.9" r="1.0" opacity="0.13"/><circle cx="1342.6" cy="911.3" r="1.0" opacity="0.48"/><circle cx="1212.0" cy="438.1" r="0.8" opacity="0.21"/><circle cx="1243.8" cy="394.3" r="0.9" opacity="0.18"/><circle cx="1030.7" cy="502.8" r="1.0" opacity="0.13"/><circle cx="362.0" cy="460.5" r="0.8" opacity="0.12"/><circle cx="1263.1" cy="570.4" r="1.0" opacity="0.05"/><circle cx="1504.6" cy="882.8" r="1.0" opacity="0.13"/><circle cx="1398.1" cy="602.4" r="1.2" opacity="0.11"/><circle cx="413.1" cy="606.4" r="0.8" opacity="0.13"/><circle cx="1289.9" cy="756.4" r="1.0" opacity="0.16"/><circle cx="543.2" cy="475.2" r="0.8" opacity="0.05"/><circle cx="1191.0" cy="490.1" r="0.8" opacity="0.08"/><circle cx="1060.5" cy="695.4" r="1.0" opacity="0.23"/><circle cx="1409.8" cy="706.1" r="1.0" opacity="0.12"/><circle cx="1130.0" cy="583.2" r="1.0" opacity="0.05"/><circle cx="756.4" cy="752.3" r="0.9" opacity="0.04"/><circle cx="900.6" cy="631.3" r="1.0" opacity="0.06"/><circle cx="1428.9" cy="890.2" r="1.0" opacity="0.05"/><circle cx="922.6" cy="794.7" r="0.8" opacity="0.12"/><circle cx="1348.3" cy="886.9" r="1.2" opacity="0.29"/><circle cx="1066.7" cy="1002.2" r="1.0" opacity="0.09"/><circle cx="1128.2" cy="420.2" r="1.0" opacity="0.10"/><circle cx="526.5" cy="381.0" r="0.8" opacity="0.06"/><circle cx="1252.7" cy="777.3" r="1.0" opacity="0.15"/><circle cx="447.0" cy="771.6" r="1.2" opacity="0.32"/><circle cx="1602.5" cy="497.6" r="1.0" opacity="0.05"/><circle cx="470.0" cy="808.3" r="1.2" opacity="0.14"/><circle cx="1367.4" cy="400.3" r="1.0" opacity="0.05"/><circle cx="562.2" cy="323.5" r="1.0" opacity="0.05"/><circle cx="1286.7" cy="843.4" r="1.0" opacity="0.14"/><circle cx="697.0" cy="407.7" r="1.0" opacity="0.19"/><circle cx="887.5" cy="642.9" r="0.9" opacity="0.04"/><circle cx="700.3" cy="877.3" r="1.0" opacity="0.05"/><circle cx="1201.8" cy="628.7" r="0.9" opacity="0.05"/><circle cx="1160.3" cy="679.6" r="0.9" opacity="0.42"/><circle cx="864.8" cy="680.5" r="0.8" opacity="0.27"/><circle cx="1131.9" cy="431.8" r="1.2" opacity="0.04"/><circle cx="1168.4" cy="566.3" r="1.0" opacity="0.20"/><circle cx="1607.3" cy="679.5" r="1.2" opacity="0.13"/><circle cx="655.9" cy="898.1" r="0.8" opacity="0.10"/><circle cx="1221.6" cy="655.0" r="0.8" opacity="0.07"/><circle cx="1377.3" cy="666.9" r="1.0" opacity="0.06"/><circle cx="1287.3" cy="975.7" r="1.0" opacity="0.06"/><circle cx="1543.8" cy="821.1" r="1.2" opacity="0.23"/><circle cx="1065.5" cy="339.1" r="0.8" opacity="0.18"/><circle cx="1390.1" cy="684.8" r="1.0" opacity="0.05"/><circle cx="1308.2" cy="975.7" r="1.0" opacity="0.25"/><circle cx="1302.4" cy="463.8" r="0.8" opacity="0.15"/><circle cx="695.1" cy="524.5" r="0.8" opacity="0.04"/><circle cx="1468.1" cy="653.2" r="1.2" opacity="0.06"/><circle cx="1041.2" cy="415.9" r="1.2" opacity="0.15"/><circle cx="976.4" cy="522.8" r="1.2" opacity="0.11"/><circle cx="928.9" cy="861.9" r="1.2" opacity="0.04"/><circle cx="928.7" cy="435.2" r="1.0" opacity="0.04"/><circle cx="271.7" cy="649.5" r="0.9" opacity="0.12"/><circle cx="813.2" cy="322.8" r="1.2" opacity="0.16"/><circle cx="1514.5" cy="457.1" r="0.9" opacity="0.19"/><circle cx="737.8" cy="901.2" r="1.0" opacity="0.07"/><circle cx="648.4" cy="904.4" r="1.0" opacity="0.06"/><circle cx="1415.2" cy="858.1" r="1.0" opacity="0.20"/><circle cx="954.9" cy="580.2" r="1.0" opacity="0.11"/><circle cx="1317.4" cy="493.7" r="1.0" opacity="0.04"/><circle cx="792.4" cy="590.3" r="1.0" opacity="0.08"/><circle cx="646.6" cy="511.3" r="1.0" opacity="0.06"/><circle cx="1203.2" cy="380.2" r="0.8" opacity="0.18"/><circle cx="541.6" cy="334.6" r="1.0" opacity="0.07"/><circle cx="1353.7" cy="604.9" r="1.0" opacity="0.06"/><circle cx="926.8" cy="404.2" r="0.8" opacity="0.11"/><circle cx="1379.1" cy="932.1" r="1.0" opacity="0.05"/><circle cx="1112.3" cy="373.6" r="1.2" opacity="0.05"/><circle cx="1467.7" cy="846.6" r="1.2" opacity="0.06"/><circle cx="671.2" cy="597.5" r="0.8" opacity="0.19"/><circle cx="1576.3" cy="775.3" r="1.2" opacity="0.13"/><circle cx="1110.1" cy="893.0" r="1.0" opacity="0.19"/><circle cx="843.0" cy="725.0" r="1.0" opacity="0.08"/><circle cx="317.4" cy="784.5" r="1.0" opacity="0.19"/><circle cx="1338.9" cy="815.3" r="1.0" opacity="0.25"/><circle cx="1253.7" cy="409.7" r="1.0" opacity="0.12"/><circle cx="810.4" cy="881.4" r="1.0" opacity="0.10"/><circle cx="1032.3" cy="733.7" r="0.8" opacity="0.05"/><circle cx="991.0" cy="463.7" r="1.0" opacity="0.10"/><circle cx="1407.2" cy="625.3" r="1.0" opacity="0.04"/><circle cx="520.0" cy="830.2" r="0.8" opacity="0.07"/><circle cx="469.4" cy="713.2" r="0.9" opacity="0.10"/><circle cx="1382.4" cy="649.5" r="1.2" opacity="0.09"/><circle cx="514.9" cy="378.9" r="0.8" opacity="0.04"/><circle cx="1650.6" cy="539.2" r="1.0" opacity="0.10"/><circle cx="679.9" cy="821.6" r="0.8" opacity="0.11"/><circle cx="411.0" cy="499.1" r="1.2" opacity="0.06"/><circle cx="348.8" cy="757.2" r="1.0" opacity="0.04"/><circle cx="975.1" cy="890.9" r="0.9" opacity="0.08"/><circle cx="1653.0" cy="509.3" r="1.0" opacity="0.04"/><circle cx="911.8" cy="984.3" r="0.8" opacity="0.06"/><circle cx="722.3" cy="677.6" r="0.8" opacity="0.07"/><circle cx="463.1" cy="320.3" r="1.2" opacity="0.04"/><circle cx="504.7" cy="807.3" r="1.0" opacity="0.05"/><circle cx="668.0" cy="522.6" r="1.0" opacity="0.05"/><circle cx="1145.0" cy="754.8" r="1.2" opacity="0.09"/><circle cx="1436.3" cy="906.9" r="1.2" opacity="0.22"/><circle cx="935.3" cy="480.4" r="1.2" opacity="0.09"/><circle cx="1102.6" cy="716.2" r="0.9" opacity="0.10"/><circle cx="774.0" cy="702.8" r="1.0" opacity="0.07"/><circle cx="1454.7" cy="811.9" r="0.8" opacity="0.15"/><circle cx="1078.3" cy="548.0" r="0.8" opacity="0.04"/><circle cx="837.0" cy="661.8" r="1.2" opacity="0.04"/><circle cx="466.1" cy="490.4" r="1.0" opacity="0.17"/><circle cx="1431.9" cy="608.6" r="1.0" opacity="0.09"/><circle cx="707.7" cy="873.4" r="1.0" opacity="0.09"/><circle cx="761.3" cy="592.8" r="0.9" opacity="0.11"/><circle cx="876.5" cy="360.3" r="0.8" opacity="0.04"/><circle cx="1623.5" cy="617.8" r="1.0" opacity="0.13"/><circle cx="1064.1" cy="787.8" r="0.8" opacity="0.05"/><circle cx="572.6" cy="315.7" r="1.2" opacity="0.16"/><circle cx="869.7" cy="611.2" r="0.9" opacity="0.06"/><circle cx="1072.8" cy="831.8" r="1.0" opacity="0.08"/><circle cx="1414.9" cy="450.6" r="1.0" opacity="0.05"/><circle cx="953.3" cy="902.2" r="0.9" opacity="0.12"/><circle cx="858.7" cy="543.5" r="1.0" opacity="0.19"/><circle cx="1391.4" cy="507.3" r="1.0" opacity="0.05"/><circle cx="1269.4" cy="588.1" r="0.8" opacity="0.05"/><circle cx="1165.7" cy="604.6" r="1.2" opacity="0.14"/><circle cx="854.5" cy="880.4" r="1.0" opacity="0.09"/><circle cx="803.8" cy="865.6" r="0.8" opacity="0.08"/><circle cx="1530.9" cy="642.9" r="0.9" opacity="0.09"/><circle cx="705.4" cy="329.5" r="1.0" opacity="0.10"/><circle cx="578.7" cy="448.1" r="1.0" opacity="0.05"/><circle cx="1604.0" cy="702.6" r="0.9" opacity="0.04"/><circle cx="656.8" cy="469.0" r="0.8" opacity="0.04"/><circle cx="891.6" cy="817.6" r="1.2" opacity="0.09"/><circle cx="611.2" cy="354.3" r="1.2" opacity="0.11"/><circle cx="577.6" cy="775.5" r="1.0" opacity="0.07"/><circle cx="505.1" cy="382.8" r="0.8" opacity="0.08"/><circle cx="893.8" cy="821.4" r="0.8" opacity="0.10"/><circle cx="621.4" cy="893.6" r="1.0" opacity="0.07"/><circle cx="325.9" cy="756.5" r="1.2" opacity="0.10"/><circle cx="1566.1" cy="528.9" r="1.0" opacity="0.04"/><circle cx="266.3" cy="635.0" r="1.0" opacity="0.07"/><circle cx="1378.9" cy="858.0" r="0.8" opacity="0.05"/><circle cx="1201.3" cy="488.6" r="1.0" opacity="0.06"/><circle cx="959.8" cy="338.1" r="1.0" opacity="0.15"/><circle cx="882.5" cy="412.8" r="1.2" opacity="0.13"/><circle cx="980.7" cy="775.6" r="1.0" opacity="0.08"/><circle cx="834.0" cy="708.2" r="1.0" opacity="0.07"/><circle cx="1292.4" cy="980.9" r="1.0" opacity="0.05"/><circle cx="1317.4" cy="914.6" r="1.2" opacity="0.05"/><circle cx="950.8" cy="722.0" r="1.0" opacity="0.15"/><circle cx="956.4" cy="774.3" r="1.2" opacity="0.04"/><circle cx="807.2" cy="749.1" r="1.2" opacity="0.10"/><circle cx="379.2" cy="697.1" r="0.9" opacity="0.07"/><circle cx="1298.1" cy="391.4" r="1.0" opacity="0.06"/><circle cx="472.0" cy="622.0" r="1.2" opacity="0.06"/><circle cx="777.2" cy="530.0" r="1.2" opacity="0.05"/><circle cx="867.1" cy="483.6" r="1.2" opacity="0.31"/><circle cx="489.9" cy="827.4" r="0.8" opacity="0.06"/><circle cx="698.0" cy="809.5" r="1.0" opacity="0.20"/><circle cx="736.4" cy="448.4" r="0.9" opacity="0.06"/><circle cx="1142.2" cy="558.8" r="1.2" opacity="0.08"/><circle cx="1367.7" cy="849.5" r="1.2" opacity="0.18"/><circle cx="1568.6" cy="541.1" r="1.0" opacity="0.09"/><circle cx="542.0" cy="518.2" r="1.0" opacity="0.06"/><circle cx="1457.8" cy="483.8" r="1.0" opacity="0.08"/><circle cx="852.1" cy="634.8" r="1.0" opacity="0.10"/><circle cx="534.7" cy="473.5" r="0.9" opacity="0.08"/><circle cx="1078.9" cy="431.9" r="1.0" opacity="0.30"/><circle cx="1652.9" cy="669.0" r="1.2" opacity="0.05"/><circle cx="784.5" cy="391.1" r="1.0" opacity="0.05"/><circle cx="930.6" cy="787.8" r="0.8" opacity="0.04"/><circle cx="732.7" cy="668.0" r="1.2" opacity="0.15"/><circle cx="824.7" cy="608.9" r="0.9" opacity="0.11"/><circle cx="1598.0" cy="732.1" r="0.8" opacity="0.08"/><circle cx="1197.3" cy="828.5" r="1.2" opacity="0.08"/><circle cx="817.2" cy="622.2" r="1.0" opacity="0.06"/><circle cx="526.7" cy="475.5" r="0.9" opacity="0.05"/><circle cx="1400.4" cy="946.0" r="1.0" opacity="0.05"/><circle cx="1031.1" cy="722.8" r="0.8" opacity="0.08"/><circle cx="1508.3" cy="934.8" r="0.8" opacity="0.21"/><circle cx="1367.4" cy="450.8" r="1.2" opacity="0.11"/><circle cx="646.8" cy="768.2" r="1.0" opacity="0.18"/><circle cx="461.7" cy="494.0" r="1.0" opacity="0.16"/><circle cx="431.9" cy="774.0" r="0.8" opacity="0.05"/><circle cx="985.4" cy="987.2" r="1.0" opacity="0.15"/><circle cx="1306.2" cy="511.4" r="1.0" opacity="0.04"/><circle cx="1556.7" cy="714.3" r="1.0" opacity="0.07"/><circle cx="1203.2" cy="735.9" r="1.2" opacity="0.31"/><circle cx="1016.5" cy="771.3" r="0.9" opacity="0.05"/><circle cx="621.0" cy="858.8" r="1.2" opacity="0.07"/><circle cx="689.3" cy="415.4" r="1.0" opacity="0.13"/><circle cx="1435.9" cy="523.1" r="0.9" opacity="0.21"/><circle cx="519.8" cy="773.8" r="1.0" opacity="0.04"/><circle cx="972.1" cy="469.3" r="1.0" opacity="0.13"/><circle cx="753.3" cy="916.6" r="0.9" opacity="0.19"/><circle cx="767.2" cy="936.0" r="1.2" opacity="0.05"/><circle cx="953.7" cy="866.1" r="0.9" opacity="0.12"/><circle cx="1204.9" cy="677.3" r="0.9" opacity="0.09"/><circle cx="1265.5" cy="412.0" r="1.2" opacity="0.04"/><circle cx="538.9" cy="741.6" r="1.0" opacity="0.06"/><circle cx="485.2" cy="341.7" r="1.2" opacity="0.08"/><circle cx="1422.0" cy="772.5" r="0.9" opacity="0.29"/><circle cx="236.2" cy="679.4" r="1.0" opacity="0.08"/><circle cx="438.3" cy="766.3" r="1.2" opacity="0.05"/><circle cx="621.0" cy="481.8" r="0.9" opacity="0.19"/><circle cx="1129.9" cy="401.3" r="1.2" opacity="0.08"/><circle cx="1051.1" cy="544.3" r="1.0" opacity="0.09"/><circle cx="1569.1" cy="566.2" r="0.8" opacity="0.04"/><circle cx="349.8" cy="774.8" r="1.0" opacity="0.04"/><circle cx="689.0" cy="814.4" r="1.0" opacity="0.05"/><circle cx="1175.0" cy="857.9" r="1.2" opacity="0.08"/><circle cx="946.4" cy="499.4" r="1.0" opacity="0.07"/><circle cx="958.9" cy="351.9" r="0.8" opacity="0.07"/><circle cx="1027.1" cy="303.1" r="0.8" opacity="0.23"/><circle cx="816.7" cy="468.6" r="0.9" opacity="0.04"/><circle cx="1301.9" cy="433.1" r="1.0" opacity="0.23"/><circle cx="1245.7" cy="926.8" r="1.0" opacity="0.05"/><circle cx="677.5" cy="943.3" r="0.9" opacity="0.07"/><circle cx="813.8" cy="634.2" r="0.8" opacity="0.04"/><circle cx="1504.0" cy="438.4" r="0.9" opacity="0.05"/><circle cx="757.2" cy="561.9" r="1.2" opacity="0.07"/><circle cx="545.9" cy="795.1" r="1.0" opacity="0.05"/><circle cx="1297.7" cy="954.3" r="1.0" opacity="0.05"/><circle cx="1267.9" cy="757.4" r="0.8" opacity="0.11"/><circle cx="486.7" cy="477.8" r="1.2" opacity="0.04"/><circle cx="1010.2" cy="1010.4" r="1.0" opacity="0.07"/><circle cx="1259.5" cy="870.1" r="1.0" opacity="0.12"/><circle cx="675.6" cy="918.2" r="1.0" opacity="0.18"/><circle cx="1186.6" cy="410.9" r="0.9" opacity="0.12"/><circle cx="1132.6" cy="509.0" r="0.8" opacity="0.04"/><circle cx="1443.5" cy="965.5" r="0.9" opacity="0.50"/><circle cx="1531.3" cy="574.9" r="1.2" opacity="0.08"/><circle cx="752.2" cy="760.1" r="0.8" opacity="0.14"/><circle cx="561.5" cy="396.0" r="1.0" opacity="0.13"/><circle cx="1642.5" cy="536.6" r="1.2" opacity="0.16"/><circle cx="899.2" cy="678.1" r="0.8" opacity="0.07"/><circle cx="474.5" cy="702.6" r="1.0" opacity="0.06"/><circle cx="1615.1" cy="574.7" r="1.0" opacity="0.20"/><circle cx="802.0" cy="491.4" r="0.9" opacity="0.05"/><circle cx="1622.1" cy="723.5" r="1.0" opacity="0.04"/><circle cx="528.1" cy="811.6" r="0.9" opacity="0.17"/><circle cx="1233.5" cy="401.0" r="1.2" opacity="0.11"/><circle cx="1250.4" cy="912.2" r="1.0" opacity="0.20"/><circle cx="1098.2" cy="667.4" r="1.0" opacity="0.12"/><circle cx="1393.8" cy="552.5" r="0.9" opacity="0.36"/><circle cx="634.4" cy="419.7" r="0.8" opacity="0.26"/><circle cx="1037.3" cy="506.9" r="1.0" opacity="0.07"/><circle cx="447.6" cy="533.9" r="1.0" opacity="0.11"/><circle cx="482.1" cy="809.5" r="0.9" opacity="0.13"/><circle cx="854.1" cy="393.6" r="1.0" opacity="0.19"/><circle cx="834.6" cy="322.6" r="0.9" opacity="0.25"/><circle cx="624.0" cy="498.9" r="1.0" opacity="0.11"/><circle cx="1176.7" cy="384.0" r="1.0" opacity="0.08"/><circle cx="1442.9" cy="842.5" r="1.0" opacity="0.05"/><circle cx="966.0" cy="454.4" r="1.0" opacity="0.10"/><circle cx="1316.4" cy="915.1" r="1.2" opacity="0.11"/><circle cx="1585.3" cy="746.0" r="1.0" opacity="0.06"/><circle cx="829.2" cy="390.7" r="1.2" opacity="0.07"/><circle cx="1299.9" cy="507.5" r="0.8" opacity="0.04"/><circle cx="1655.2" cy="621.2" r="0.8" opacity="0.07"/><circle cx="502.3" cy="638.8" r="1.2" opacity="0.31"/><circle cx="442.3" cy="832.2" r="0.9" opacity="0.24"/><circle cx="1227.6" cy="307.9" r="1.0" opacity="0.06"/><circle cx="308.2" cy="544.7" r="0.9" opacity="0.19"/><circle cx="760.6" cy="922.0" r="0.8" opacity="0.20"/><circle cx="1369.8" cy="915.6" r="1.0" opacity="0.12"/><circle cx="698.5" cy="615.8" r="1.0" opacity="0.05"/><circle cx="978.6" cy="511.0" r="1.2" opacity="0.08"/><circle cx="945.8" cy="641.7" r="1.0" opacity="0.12"/><circle cx="1306.7" cy="899.0" r="0.9" opacity="0.05"/><circle cx="1454.7" cy="568.8" r="0.9" opacity="0.06"/><circle cx="1628.5" cy="709.3" r="1.0" opacity="0.07"/><circle cx="450.0" cy="366.7" r="0.8" opacity="0.12"/><circle cx="1389.5" cy="863.5" r="0.8" opacity="0.09"/><circle cx="552.0" cy="833.9" r="0.9" opacity="0.05"/><circle cx="315.7" cy="566.8" r="0.8" opacity="0.07"/><circle cx="1116.6" cy="676.4" r="0.8" opacity="0.05"/><circle cx="790.8" cy="558.8" r="0.9" opacity="0.04"/><circle cx="493.8" cy="632.2" r="1.0" opacity="0.30"/><circle cx="1074.1" cy="649.0" r="1.0" opacity="0.10"/><circle cx="953.1" cy="760.4" r="1.0" opacity="0.28"/><circle cx="1470.1" cy="916.9" r="0.9" opacity="0.06"/><circle cx="1531.7" cy="475.2" r="0.9" opacity="0.09"/><circle cx="1430.9" cy="567.5" r="1.0" opacity="0.12"/><circle cx="340.2" cy="487.2" r="0.8" opacity="0.06"/><circle cx="538.0" cy="651.4" r="1.2" opacity="0.14"/><circle cx="1193.6" cy="984.5" r="0.9" opacity="0.05"/><circle cx="1553.3" cy="804.9" r="0.8" opacity="0.08"/><circle cx="738.1" cy="879.3" r="0.9" opacity="0.06"/><circle cx="454.1" cy="471.0" r="0.9" opacity="0.11"/><circle cx="1423.1" cy="531.2" r="0.9" opacity="0.06"/><circle cx="630.2" cy="907.8" r="1.2" opacity="0.06"/><circle cx="635.3" cy="828.6" r="1.2" opacity="0.13"/><circle cx="511.5" cy="523.6" r="1.0" opacity="0.09"/><circle cx="356.1" cy="492.5" r="1.0" opacity="0.07"/><circle cx="1523.0" cy="879.8" r="1.0" opacity="0.11"/><circle cx="1065.8" cy="777.3" r="1.0" opacity="0.06"/><circle cx="1257.5" cy="863.1" r="1.0" opacity="0.05"/><circle cx="1659.4" cy="559.5" r="1.2" opacity="0.18"/><circle cx="1430.8" cy="496.6" r="0.9" opacity="0.05"/><circle cx="1128.9" cy="444.5" r="0.9" opacity="0.06"/><circle cx="1050.4" cy="604.4" r="1.0" opacity="0.32"/><circle cx="886.2" cy="619.3" r="1.2" opacity="0.07"/><circle cx="601.8" cy="619.7" r="1.0" opacity="0.27"/><circle cx="405.7" cy="365.4" r="1.2" opacity="0.09"/><circle cx="765.5" cy="392.5" r="1.2" opacity="0.06"/><circle cx="1255.4" cy="418.3" r="0.9" opacity="0.36"/><circle cx="1252.8" cy="942.1" r="1.0" opacity="0.05"/><circle cx="719.9" cy="461.6" r="0.8" opacity="0.06"/><circle cx="1365.8" cy="420.8" r="0.8" opacity="0.05"/><circle cx="1163.3" cy="597.6" r="1.0" opacity="0.04"/><circle cx="1387.9" cy="533.7" r="1.0" opacity="0.06"/><circle cx="1613.2" cy="584.0" r="0.8" opacity="0.04"/><circle cx="502.2" cy="482.2" r="0.8" opacity="0.06"/><circle cx="1634.8" cy="535.6" r="0.9" opacity="0.36"/><circle cx="714.3" cy="432.9" r="1.0" opacity="0.04"/><circle cx="1510.7" cy="913.3" r="1.2" opacity="0.10"/><circle cx="640.9" cy="709.2" r="1.0" opacity="0.05"/><circle cx="695.6" cy="511.5" r="1.0" opacity="0.07"/><circle cx="1519.0" cy="691.4" r="1.0" opacity="0.14"/><circle cx="1612.4" cy="678.7" r="0.8" opacity="0.12"/><circle cx="635.2" cy="813.8" r="1.0" opacity="0.13"/><circle cx="879.6" cy="821.8" r="1.2" opacity="0.07"/><circle cx="1281.0" cy="413.1" r="0.8" opacity="0.06"/><circle cx="1064.7" cy="421.5" r="0.9" opacity="0.10"/><circle cx="1326.5" cy="612.0" r="1.2" opacity="0.24"/><circle cx="1268.6" cy="415.2" r="1.2" opacity="0.05"/><circle cx="1121.4" cy="507.9" r="1.2" opacity="0.05"/><circle cx="1051.2" cy="615.2" r="1.0" opacity="0.15"/><circle cx="1376.8" cy="914.7" r="1.0" opacity="0.04"/><circle cx="1248.4" cy="791.8" r="0.8" opacity="0.10"/><circle cx="1436.3" cy="857.9" r="1.2" opacity="0.13"/><circle cx="562.4" cy="308.9" r="1.0" opacity="0.08"/><circle cx="520.8" cy="595.5" r="0.8" opacity="0.06"/><circle cx="1216.5" cy="594.3" r="0.9" opacity="0.24"/><circle cx="631.6" cy="370.3" r="1.2" opacity="0.07"/><circle cx="470.8" cy="385.4" r="0.8" opacity="0.08"/><circle cx="1337.6" cy="964.9" r="1.0" opacity="0.14"/><circle cx="464.4" cy="765.8" r="1.0" opacity="0.17"/><circle cx="1305.9" cy="385.7" r="0.9" opacity="0.10"/><circle cx="1267.8" cy="700.0" r="1.0" opacity="0.06"/><circle cx="1277.3" cy="593.3" r="1.0" opacity="0.16"/><circle cx="735.6" cy="873.2" r="1.0" opacity="0.09"/><circle cx="722.8" cy="917.6" r="1.0" opacity="0.21"/><circle cx="1473.0" cy="866.6" r="1.0" opacity="0.21"/><circle cx="731.3" cy="966.3" r="1.0" opacity="0.07"/><circle cx="787.7" cy="368.8" r="0.9" opacity="0.04"/><circle cx="1614.0" cy="501.4" r="1.0" opacity="0.11"/><circle cx="504.8" cy="293.3" r="1.0" opacity="0.08"/><circle cx="709.1" cy="675.2" r="1.0" opacity="0.06"/><circle cx="1020.9" cy="819.3" r="0.8" opacity="0.14"/><circle cx="399.7" cy="731.8" r="1.0" opacity="0.05"/><circle cx="505.8" cy="500.5" r="1.0" opacity="0.07"/><circle cx="1356.6" cy="376.5" r="1.0" opacity="0.09"/><circle cx="1310.9" cy="342.8" r="1.0" opacity="0.05"/><circle cx="741.0" cy="688.5" r="1.0" opacity="0.09"/><circle cx="1446.9" cy="555.2" r="0.8" opacity="0.10"/><circle cx="541.2" cy="752.3" r="0.8" opacity="0.05"/><circle cx="1408.1" cy="974.4" r="1.0" opacity="0.24"/><circle cx="1409.8" cy="982.8" r="0.9" opacity="0.15"/><circle cx="1253.9" cy="753.9" r="1.0" opacity="0.05"/><circle cx="884.7" cy="856.5" r="1.0" opacity="0.12"/><circle cx="809.2" cy="1012.3" r="1.2" opacity="0.05"/><circle cx="679.9" cy="608.3" r="1.0" opacity="0.20"/><circle cx="321.5" cy="706.1" r="1.2" opacity="0.13"/><circle cx="717.6" cy="925.7" r="1.2" opacity="0.25"/><circle cx="1320.4" cy="873.7" r="1.0" opacity="0.05"/><circle cx="1275.7" cy="318.6" r="1.0" opacity="0.08"/><circle cx="567.9" cy="739.1" r="1.2" opacity="0.27"/><circle cx="1233.7" cy="918.4" r="1.0" opacity="0.12"/><circle cx="477.8" cy="602.0" r="1.0" opacity="0.04"/><circle cx="1097.1" cy="623.5" r="0.9" opacity="0.13"/><circle cx="1183.6" cy="807.0" r="1.2" opacity="0.04"/><circle cx="600.7" cy="355.3" r="1.2" opacity="0.07"/><circle cx="699.3" cy="395.9" r="0.9" opacity="0.06"/><circle cx="1136.7" cy="554.7" r="1.2" opacity="0.04"/><circle cx="758.4" cy="525.2" r="1.0" opacity="0.04"/><circle cx="451.6" cy="601.6" r="1.0" opacity="0.28"/><circle cx="1317.7" cy="373.6" r="0.8" opacity="0.08"/><circle cx="1337.2" cy="681.5" r="1.0" opacity="0.05"/><circle cx="677.9" cy="442.3" r="1.0" opacity="0.15"/><circle cx="474.6" cy="311.0" r="1.2" opacity="0.04"/><circle cx="588.7" cy="697.8" r="1.2" opacity="0.23"/><circle cx="675.1" cy="876.9" r="1.2" opacity="0.22"/><circle cx="1254.3" cy="844.6" r="1.2" opacity="0.10"/><circle cx="727.1" cy="474.5" r="1.0" opacity="0.12"/><circle cx="1080.2" cy="678.5" r="0.8" opacity="0.09"/><circle cx="1439.8" cy="800.7" r="1.2" opacity="0.21"/><circle cx="1135.0" cy="484.1" r="1.0" opacity="0.25"/><circle cx="712.6" cy="390.3" r="1.0" opacity="0.07"/><circle cx="1297.9" cy="648.3" r="1.0" opacity="0.06"/><circle cx="1021.9" cy="757.7" r="1.0" opacity="0.12"/><circle cx="991.9" cy="440.8" r="0.9" opacity="0.04"/><circle cx="1477.2" cy="493.9" r="1.0" opacity="0.12"/><circle cx="1011.2" cy="463.1" r="0.9" opacity="0.09"/><circle cx="725.6" cy="945.4" r="1.2" opacity="0.09"/><circle cx="1501.2" cy="589.0" r="0.9" opacity="0.09"/><circle cx="618.5" cy="539.1" r="0.9" opacity="0.05"/><circle cx="1192.5" cy="728.3" r="1.2" opacity="0.21"/><circle cx="914.5" cy="423.8" r="0.9" opacity="0.07"/><circle cx="716.1" cy="846.7" r="1.0" opacity="0.07"/><circle cx="462.8" cy="547.5" r="0.8" opacity="0.05"/><circle cx="557.1" cy="357.3" r="0.8" opacity="0.06"/><circle cx="641.8" cy="576.7" r="1.0" opacity="0.05"/><circle cx="382.7" cy="548.2" r="0.8" opacity="0.10"/><circle cx="995.7" cy="519.5" r="1.0" opacity="0.09"/><circle cx="864.0" cy="491.9" r="0.8" opacity="0.05"/><circle cx="733.0" cy="704.8" r="1.2" opacity="0.38"/><circle cx="493.6" cy="814.0" r="1.0" opacity="0.07"/><circle cx="837.8" cy="548.7" r="0.9" opacity="0.13"/><circle cx="1111.5" cy="579.4" r="0.9" opacity="0.08"/><circle cx="1175.2" cy="612.8" r="0.9" opacity="0.06"/><circle cx="527.0" cy="637.1" r="0.9" opacity="0.07"/><circle cx="1643.6" cy="537.8" r="1.0" opacity="0.22"/><circle cx="644.2" cy="912.5" r="1.0" opacity="0.05"/><circle cx="821.7" cy="858.9" r="1.0" opacity="0.05"/><circle cx="899.6" cy="487.5" r="0.9" opacity="0.21"/><circle cx="768.5" cy="994.5" r="1.2" opacity="0.19"/><circle cx="895.9" cy="950.3" r="0.8" opacity="0.50"/><circle cx="1356.0" cy="856.4" r="0.9" opacity="0.47"/><circle cx="687.9" cy="1000.3" r="1.2" opacity="0.10"/><circle cx="1059.3" cy="901.9" r="0.9" opacity="0.06"/><circle cx="996.9" cy="969.1" r="0.8" opacity="0.11"/><circle cx="671.2" cy="749.1" r="1.0" opacity="0.14"/><circle cx="1000.0" cy="961.6" r="1.0" opacity="0.07"/><circle cx="980.7" cy="605.2" r="1.0" opacity="0.04"/><circle cx="625.1" cy="527.0" r="1.0" opacity="0.48"/><circle cx="711.6" cy="724.6" r="1.2" opacity="0.04"/><circle cx="472.8" cy="550.9" r="0.9" opacity="0.04"/><circle cx="1417.2" cy="796.3" r="1.0" opacity="0.13"/><circle cx="438.6" cy="723.7" r="1.2" opacity="0.05"/><circle cx="890.1" cy="463.3" r="1.0" opacity="0.04"/><circle cx="707.6" cy="304.2" r="1.0" opacity="0.07"/><circle cx="972.6" cy="919.8" r="0.8" opacity="0.06"/><circle cx="401.3" cy="400.0" r="0.8" opacity="0.20"/><circle cx="1164.0" cy="768.7" r="1.2" opacity="0.19"/><circle cx="1216.9" cy="489.7" r="1.2" opacity="0.11"/><circle cx="1267.9" cy="629.0" r="1.0" opacity="0.06"/><circle cx="916.9" cy="686.5" r="1.2" opacity="0.08"/><circle cx="1693.6" cy="564.7" r="1.2" opacity="0.15"/><circle cx="770.7" cy="321.5" r="0.8" opacity="0.10"/><circle cx="1499.3" cy="779.3" r="1.0" opacity="0.08"/><circle cx="735.2" cy="567.8" r="1.0" opacity="0.18"/><circle cx="586.9" cy="855.7" r="1.0" opacity="0.04"/><circle cx="888.5" cy="752.0" r="1.0" opacity="0.19"/><circle cx="1032.3" cy="813.4" r="0.9" opacity="0.24"/><circle cx="1506.0" cy="482.3" r="1.0" opacity="0.12"/><circle cx="1089.0" cy="877.0" r="1.0" opacity="0.13"/><circle cx="965.0" cy="649.4" r="1.0" opacity="0.17"/><circle cx="647.0" cy="915.2" r="0.9" opacity="0.27"/><circle cx="980.0" cy="303.4" r="1.0" opacity="0.05"/><circle cx="860.0" cy="600.7" r="0.9" opacity="0.43"/><circle cx="1108.2" cy="654.8" r="1.0" opacity="0.05"/><circle cx="1397.9" cy="775.5" r="1.0" opacity="0.23"/><circle cx="1463.9" cy="803.1" r="1.0" opacity="0.15"/><circle cx="247.5" cy="650.2" r="1.2" opacity="0.04"/><circle cx="1551.8" cy="781.1" r="1.0" opacity="0.20"/><circle cx="1176.4" cy="777.1" r="1.0" opacity="0.16"/><circle cx="1417.1" cy="728.5" r="0.8" opacity="0.09"/><circle cx="1502.7" cy="842.9" r="1.2" opacity="0.05"/><circle cx="546.6" cy="728.9" r="0.9" opacity="0.11"/><circle cx="992.2" cy="447.0" r="0.8" opacity="0.12"/><circle cx="756.8" cy="804.6" r="0.9" opacity="0.20"/><circle cx="840.4" cy="569.7" r="0.9" opacity="0.23"/><circle cx="1426.4" cy="444.2" r="1.0" opacity="0.16"/><circle cx="923.4" cy="574.0" r="0.8" opacity="0.13"/><circle cx="423.5" cy="803.5" r="0.9" opacity="0.20"/><circle cx="694.6" cy="399.8" r="0.9" opacity="0.04"/><circle cx="838.1" cy="358.0" r="1.0" opacity="0.24"/><circle cx="967.8" cy="917.7" r="0.9" opacity="0.11"/><circle cx="829.8" cy="818.0" r="0.9" opacity="0.38"/><circle cx="290.2" cy="721.8" r="1.0" opacity="0.09"/><circle cx="1163.4" cy="555.0" r="1.2" opacity="0.06"/><circle cx="1010.9" cy="627.7" r="1.0" opacity="0.06"/><circle cx="635.4" cy="466.7" r="1.0" opacity="0.04"/><circle cx="980.7" cy="530.9" r="0.9" opacity="0.18"/><circle cx="690.7" cy="313.1" r="0.9" opacity="0.05"/><circle cx="1250.0" cy="669.4" r="0.9" opacity="0.06"/><circle cx="927.2" cy="745.9" r="0.9" opacity="0.07"/><circle cx="1130.9" cy="752.3" r="1.0" opacity="0.04"/><circle cx="1141.6" cy="607.9" r="1.2" opacity="0.20"/><circle cx="342.3" cy="769.3" r="0.9" opacity="0.04"/><circle cx="803.4" cy="506.3" r="1.0" opacity="0.05"/><circle cx="535.8" cy="418.7" r="1.2" opacity="0.10"/><circle cx="254.1" cy="728.7" r="1.0" opacity="0.09"/><circle cx="758.8" cy="482.8" r="1.2" opacity="0.06"/><circle cx="1407.5" cy="760.7" r="1.0" opacity="0.14"/><circle cx="1536.6" cy="851.9" r="0.8" opacity="0.07"/><circle cx="1174.0" cy="956.3" r="1.0" opacity="0.05"/><circle cx="1287.1" cy="459.7" r="1.2" opacity="0.04"/><circle cx="766.4" cy="522.8" r="0.8" opacity="0.05"/><circle cx="829.7" cy="501.4" r="1.2" opacity="0.08"/><circle cx="1087.4" cy="425.2" r="1.0" opacity="0.16"/><circle cx="696.1" cy="675.0" r="0.8" opacity="0.09"/><circle cx="1579.9" cy="658.1" r="0.9" opacity="0.05"/><circle cx="1347.0" cy="940.1" r="1.0" opacity="0.05"/><circle cx="417.7" cy="572.1" r="0.8" opacity="0.09"/><circle cx="607.1" cy="765.0" r="0.9" opacity="0.04"/><circle cx="1513.1" cy="788.2" r="1.2" opacity="0.10"/><circle cx="602.9" cy="720.4" r="1.0" opacity="0.05"/><circle cx="1478.3" cy="806.5" r="1.2" opacity="0.11"/><circle cx="515.8" cy="515.2" r="1.0" opacity="0.05"/><circle cx="991.9" cy="998.0" r="0.8" opacity="0.04"/><circle cx="1319.4" cy="497.7" r="1.0" opacity="0.11"/><circle cx="1257.4" cy="1007.4" r="1.0" opacity="0.12"/><circle cx="1580.3" cy="752.7" r="1.2" opacity="0.12"/><circle cx="1330.0" cy="705.9" r="1.2" opacity="0.15"/><circle cx="804.7" cy="712.2" r="1.2" opacity="0.10"/><circle cx="1203.0" cy="916.2" r="0.8" opacity="0.06"/><circle cx="1124.9" cy="417.6" r="1.0" opacity="0.04"/><circle cx="731.4" cy="928.4" r="1.2" opacity="0.11"/><circle cx="1309.9" cy="847.0" r="1.2" opacity="0.09"/><circle cx="1158.1" cy="937.4" r="1.0" opacity="0.07"/><circle cx="1220.5" cy="815.8" r="1.2" opacity="0.14"/><circle cx="1201.5" cy="430.5" r="1.0" opacity="0.04"/><circle cx="1230.0" cy="409.8" r="0.9" opacity="0.06"/><circle cx="1382.5" cy="502.4" r="1.2" opacity="0.12"/><circle cx="1086.2" cy="325.8" r="0.9" opacity="0.04"/><circle cx="1358.5" cy="727.4" r="1.2" opacity="0.11"/><circle cx="765.6" cy="698.7" r="1.0" opacity="0.19"/><circle cx="1211.4" cy="774.3" r="1.2" opacity="0.19"/><circle cx="757.7" cy="328.8" r="1.0" opacity="0.04"/><circle cx="1128.1" cy="887.5" r="0.9" opacity="0.05"/><circle cx="1567.2" cy="499.0" r="0.8" opacity="0.05"/><circle cx="860.7" cy="442.6" r="1.0" opacity="0.15"/><circle cx="570.6" cy="776.1" r="0.8" opacity="0.24"/><circle cx="733.5" cy="432.8" r="0.8" opacity="0.07"/><circle cx="789.9" cy="863.8" r="1.0" opacity="0.23"/><circle cx="869.2" cy="420.7" r="0.8" opacity="0.04"/><circle cx="1266.9" cy="817.4" r="1.0" opacity="0.06"/><circle cx="1301.7" cy="461.9" r="1.0" opacity="0.05"/><circle cx="1368.3" cy="959.4" r="0.8" opacity="0.06"/><circle cx="875.9" cy="362.6" r="0.9" opacity="0.07"/><circle cx="1099.8" cy="516.1" r="0.9" opacity="0.05"/><circle cx="1222.1" cy="584.8" r="1.2" opacity="0.04"/><circle cx="452.2" cy="482.6" r="1.2" opacity="0.11"/><circle cx="549.4" cy="318.2" r="1.2" opacity="0.12"/><circle cx="503.8" cy="671.5" r="1.2" opacity="0.11"/><circle cx="1322.8" cy="1004.7" r="1.0" opacity="0.21"/><circle cx="723.8" cy="992.7" r="0.8" opacity="0.07"/><circle cx="756.4" cy="528.7" r="1.0" opacity="0.12"/><circle cx="1156.0" cy="921.8" r="1.2" opacity="0.07"/><circle cx="1358.4" cy="795.2" r="0.9" opacity="0.06"/><circle cx="622.9" cy="673.6" r="1.2" opacity="0.28"/><circle cx="1047.6" cy="444.1" r="1.2" opacity="0.06"/><circle cx="685.9" cy="465.6" r="1.0" opacity="0.11"/><circle cx="637.7" cy="620.5" r="1.2" opacity="0.30"/><circle cx="573.5" cy="905.3" r="1.0" opacity="0.20"/><circle cx="1261.8" cy="713.2" r="1.0" opacity="0.16"/><circle cx="1301.5" cy="602.0" r="1.0" opacity="0.04"/><circle cx="1036.3" cy="736.2" r="1.0" opacity="0.05"/><circle cx="594.0" cy="641.2" r="0.8" opacity="0.04"/><circle cx="1491.9" cy="621.9" r="1.0" opacity="0.14"/><circle cx="1342.1" cy="651.6" r="1.2" opacity="0.19"/><circle cx="1000.8" cy="778.1" r="1.0" opacity="0.11"/><circle cx="539.3" cy="608.6" r="1.0" opacity="0.05"/><circle cx="641.0" cy="900.6" r="1.0" opacity="0.04"/><circle cx="1112.4" cy="321.5" r="0.9" opacity="0.05"/><circle cx="251.5" cy="635.9" r="0.9" opacity="0.05"/><circle cx="863.4" cy="578.2" r="1.0" opacity="0.04"/><circle cx="1325.5" cy="1007.0" r="1.0" opacity="0.23"/><circle cx="974.3" cy="586.6" r="0.9" opacity="0.11"/><circle cx="793.1" cy="769.5" r="0.8" opacity="0.06"/><circle cx="520.6" cy="780.4" r="0.9" opacity="0.12"/><circle cx="335.8" cy="699.2" r="0.8" opacity="0.05"/><circle cx="621.2" cy="950.2" r="1.2" opacity="0.26"/><circle cx="1286.0" cy="725.0" r="1.0" opacity="0.12"/><circle cx="1353.3" cy="620.8" r="1.0" opacity="0.07"/><circle cx="1472.6" cy="563.2" r="1.0" opacity="0.07"/><circle cx="1312.6" cy="782.5" r="1.0" opacity="0.04"/><circle cx="1037.8" cy="595.4" r="1.2" opacity="0.04"/><circle cx="616.6" cy="352.3" r="1.0" opacity="0.08"/><circle cx="584.0" cy="617.6" r="1.0" opacity="0.32"/><circle cx="541.6" cy="764.5" r="0.8" opacity="0.08"/><circle cx="614.4" cy="675.3" r="0.9" opacity="0.05"/><circle cx="1245.4" cy="756.1" r="0.9" opacity="0.34"/><circle cx="892.4" cy="620.7" r="1.2" opacity="0.20"/><circle cx="566.6" cy="840.1" r="0.9" opacity="0.08"/><circle cx="617.3" cy="758.4" r="1.0" opacity="0.04"/><circle cx="990.1" cy="702.4" r="1.2" opacity="0.04"/><circle cx="863.8" cy="784.6" r="1.2" opacity="0.07"/><circle cx="411.3" cy="687.3" r="1.2" opacity="0.12"/><circle cx="435.6" cy="630.6" r="0.8" opacity="0.10"/><circle cx="1444.8" cy="961.6" r="1.2" opacity="0.13"/><circle cx="414.8" cy="341.0" r="1.0" opacity="0.07"/><circle cx="735.7" cy="478.0" r="1.0" opacity="0.10"/><circle cx="518.5" cy="638.4" r="1.0" opacity="0.11"/><circle cx="1288.1" cy="548.0" r="1.0" opacity="0.17"/><circle cx="769.7" cy="781.3" r="0.8" opacity="0.12"/><circle cx="1103.6" cy="460.4" r="1.2" opacity="0.16"/><circle cx="515.5" cy="608.1" r="1.0" opacity="0.05"/><circle cx="1174.3" cy="753.3" r="0.9" opacity="0.11"/><circle cx="479.5" cy="685.3" r="0.9" opacity="0.25"/><circle cx="571.4" cy="633.0" r="1.2" opacity="0.14"/><circle cx="498.5" cy="812.1" r="1.0" opacity="0.04"/><circle cx="1509.0" cy="663.5" r="0.9" opacity="0.13"/><circle cx="375.2" cy="497.7" r="0.9" opacity="0.10"/><circle cx="1436.4" cy="850.9" r="1.2" opacity="0.09"/><circle cx="1421.8" cy="848.0" r="1.2" opacity="0.05"/><circle cx="1374.6" cy="858.3" r="1.2" opacity="0.10"/><circle cx="1324.9" cy="506.1" r="1.2" opacity="0.05"/><circle cx="894.7" cy="937.8" r="1.0" opacity="0.07"/><circle cx="682.3" cy="397.3" r="0.9" opacity="0.11"/><circle cx="1050.7" cy="328.2" r="1.0" opacity="0.08"/><circle cx="1521.7" cy="758.8" r="0.8" opacity="0.09"/><circle cx="733.8" cy="645.5" r="1.2" opacity="0.08"/><circle cx="1034.6" cy="920.4" r="1.0" opacity="0.13"/><circle cx="1288.0" cy="472.4" r="1.2" opacity="0.24"/><circle cx="1545.8" cy="770.9" r="0.9" opacity="0.04"/><circle cx="526.6" cy="727.6" r="1.0" opacity="0.16"/><circle cx="903.7" cy="456.9" r="1.0" opacity="0.09"/><circle cx="1080.5" cy="334.7" r="0.8" opacity="0.11"/><circle cx="874.1" cy="678.4" r="1.2" opacity="0.07"/><circle cx="1087.3" cy="577.1" r="1.0" opacity="0.08"/><circle cx="850.5" cy="731.3" r="1.0" opacity="0.19"/><circle cx="1076.7" cy="677.7" r="1.2" opacity="0.05"/><circle cx="1678.2" cy="529.2" r="1.2" opacity="0.09"/><circle cx="794.6" cy="775.7" r="0.9" opacity="0.11"/><circle cx="1427.5" cy="801.6" r="1.2" opacity="0.08"/><circle cx="1193.5" cy="704.9" r="0.8" opacity="0.06"/><circle cx="1624.8" cy="681.9" r="1.0" opacity="0.08"/><circle cx="953.6" cy="966.1" r="1.2" opacity="0.16"/><circle cx="1040.8" cy="752.3" r="1.0" opacity="0.15"/><circle cx="1386.3" cy="694.4" r="0.8" opacity="0.08"/><circle cx="1628.9" cy="684.5" r="1.0" opacity="0.08"/><circle cx="927.3" cy="563.2" r="1.0" opacity="0.07"/><circle cx="935.7" cy="817.9" r="0.8" opacity="0.04"/><circle cx="1258.3" cy="695.9" r="1.2" opacity="0.04"/><circle cx="1477.4" cy="671.5" r="1.2" opacity="0.10"/><circle cx="614.0" cy="554.5" r="0.8" opacity="0.10"/><circle cx="647.6" cy="384.9" r="0.8" opacity="0.06"/><circle cx="302.2" cy="775.2" r="1.2" opacity="0.11"/><circle cx="1005.6" cy="523.4" r="1.2" opacity="0.09"/><circle cx="1051.8" cy="890.7" r="1.2" opacity="0.11"/><circle cx="932.3" cy="891.7" r="1.2" opacity="0.04"/><circle cx="1112.4" cy="890.0" r="1.2" opacity="0.06"/><circle cx="514.8" cy="299.6" r="1.0" opacity="0.14"/><circle cx="663.8" cy="372.0" r="1.0" opacity="0.06"/><circle cx="754.4" cy="447.8" r="1.0" opacity="0.12"/><circle cx="1262.4" cy="905.6" r="1.0" opacity="0.05"/><circle cx="424.6" cy="806.1" r="0.8" opacity="0.18"/><circle cx="621.6" cy="517.6" r="1.0" opacity="0.29"/><circle cx="1342.0" cy="916.8" r="0.9" opacity="0.13"/><circle cx="820.2" cy="378.9" r="1.0" opacity="0.20"/><circle cx="1119.1" cy="748.6" r="1.0" opacity="0.04"/><circle cx="453.0" cy="469.5" r="0.8" opacity="0.11"/><circle cx="1226.9" cy="996.7" r="1.0" opacity="0.11"/><circle cx="593.8" cy="615.5" r="0.9" opacity="0.04"/><circle cx="722.9" cy="819.1" r="1.0" opacity="0.08"/><circle cx="471.8" cy="412.7" r="0.8" opacity="0.07"/><circle cx="1457.8" cy="911.7" r="0.9" opacity="0.06"/><circle cx="1208.6" cy="848.0" r="1.2" opacity="0.04"/><circle cx="919.8" cy="297.9" r="1.2" opacity="0.05"/><circle cx="1554.7" cy="667.8" r="1.2" opacity="0.06"/><circle cx="1395.6" cy="797.3" r="0.9" opacity="0.04"/><circle cx="1517.4" cy="842.8" r="1.2" opacity="0.04"/><circle cx="1173.5" cy="782.2" r="1.0" opacity="0.10"/><circle cx="687.9" cy="680.1" r="1.0" opacity="0.09"/><circle cx="696.6" cy="894.6" r="0.8" opacity="0.12"/><circle cx="1215.2" cy="378.1" r="1.0" opacity="0.27"/><circle cx="310.4" cy="557.0" r="1.0" opacity="0.08"/><circle cx="714.9" cy="429.3" r="1.0" opacity="0.13"/><circle cx="675.5" cy="494.8" r="1.2" opacity="0.18"/><circle cx="438.8" cy="517.7" r="1.2" opacity="0.05"/><circle cx="801.7" cy="632.1" r="1.2" opacity="0.09"/><circle cx="951.5" cy="948.8" r="0.8" opacity="0.05"/><circle cx="1005.1" cy="318.7" r="1.0" opacity="0.17"/><circle cx="317.2" cy="615.6" r="0.9" opacity="0.07"/><circle cx="720.2" cy="530.0" r="0.9" opacity="0.20"/><circle cx="461.0" cy="582.8" r="1.2" opacity="0.06"/><circle cx="1036.9" cy="972.3" r="1.2" opacity="0.12"/><circle cx="843.6" cy="697.6" r="0.8" opacity="0.04"/><circle cx="1193.0" cy="720.6" r="0.8" opacity="0.27"/><circle cx="334.1" cy="723.0" r="0.9" opacity="0.19"/><circle cx="846.4" cy="705.7" r="0.9" opacity="0.12"/><circle cx="526.6" cy="488.3" r="0.9" opacity="0.39"/><circle cx="665.1" cy="402.3" r="1.0" opacity="0.08"/><circle cx="1052.6" cy="996.4" r="1.0" opacity="0.08"/><circle cx="347.8" cy="793.4" r="0.8" opacity="0.29"/><circle cx="411.2" cy="506.4" r="1.0" opacity="0.07"/><circle cx="938.6" cy="653.2" r="0.9" opacity="0.14"/><circle cx="1129.8" cy="989.9" r="0.9" opacity="0.13"/><circle cx="1264.6" cy="297.6" r="1.2" opacity="0.07"/><circle cx="1248.6" cy="787.7" r="1.2" opacity="0.13"/><circle cx="767.9" cy="873.7" r="0.8" opacity="0.08"/><circle cx="740.2" cy="345.9" r="0.8" opacity="0.14"/><circle cx="608.4" cy="679.4" r="1.2" opacity="0.11"/><circle cx="1341.1" cy="445.1" r="1.0" opacity="0.04"/><circle cx="1184.7" cy="625.1" r="1.0" opacity="0.04"/><circle cx="1224.7" cy="585.9" r="1.0" opacity="0.16"/><circle cx="360.7" cy="511.3" r="0.8" opacity="0.04"/><circle cx="903.2" cy="996.7" r="0.8" opacity="0.04"/><circle cx="1221.7" cy="758.9" r="0.8" opacity="0.08"/><circle cx="963.9" cy="529.8" r="1.2" opacity="0.09"/><circle cx="1241.6" cy="955.2" r="1.0" opacity="0.12"/><circle cx="1127.0" cy="527.6" r="0.9" opacity="0.21"/><circle cx="1347.0" cy="887.8" r="1.2" opacity="0.09"/><circle cx="1493.5" cy="677.1" r="1.0" opacity="0.08"/><circle cx="1099.2" cy="756.4" r="0.9" opacity="0.17"/><circle cx="1163.0" cy="505.9" r="1.0" opacity="0.05"/><circle cx="1358.5" cy="647.4" r="1.0" opacity="0.06"/><circle cx="1017.0" cy="702.3" r="0.8" opacity="0.05"/><circle cx="652.0" cy="849.6" r="1.2" opacity="0.06"/><circle cx="936.2" cy="698.0" r="1.0" opacity="0.12"/><circle cx="1468.9" cy="894.2" r="1.0" opacity="0.04"/><circle cx="1357.5" cy="694.5" r="0.8" opacity="0.27"/><circle cx="736.7" cy="604.4" r="0.9" opacity="0.10"/><circle cx="1323.8" cy="934.6" r="0.8" opacity="0.19"/><circle cx="685.4" cy="414.4" r="1.2" opacity="0.09"/><circle cx="1324.5" cy="441.6" r="1.0" opacity="0.12"/><circle cx="1469.5" cy="584.0" r="0.9" opacity="0.05"/><circle cx="1490.4" cy="974.1" r="1.0" opacity="0.15"/><circle cx="1658.6" cy="544.4" r="1.0" opacity="0.18"/><circle cx="719.1" cy="668.4" r="1.2" opacity="0.07"/><circle cx="355.3" cy="606.6" r="1.0" opacity="0.08"/><circle cx="917.3" cy="629.9" r="1.0" opacity="0.10"/><circle cx="1004.7" cy="696.2" r="1.2" opacity="0.18"/><circle cx="1566.7" cy="684.0" r="1.0" opacity="0.04"/><circle cx="1156.8" cy="565.6" r="1.2" opacity="0.15"/><circle cx="623.0" cy="721.1" r="1.0" opacity="0.14"/><circle cx="485.2" cy="556.3" r="1.0" opacity="0.06"/><circle cx="1537.0" cy="790.6" r="0.9" opacity="0.12"/><circle cx="768.0" cy="370.1" r="0.8" opacity="0.04"/><circle cx="1055.2" cy="491.5" r="1.2" opacity="0.04"/><circle cx="1285.5" cy="461.7" r="1.2" opacity="0.09"/><circle cx="683.2" cy="670.1" r="1.0" opacity="0.11"/><circle cx="1686.2" cy="611.2" r="1.0" opacity="0.08"/><circle cx="1305.1" cy="700.9" r="0.8" opacity="0.08"/><circle cx="849.6" cy="380.1" r="1.0" opacity="0.04"/><circle cx="933.8" cy="536.4" r="1.2" opacity="0.16"/><circle cx="1474.7" cy="566.8" r="1.0" opacity="0.08"/><circle cx="1615.3" cy="585.3" r="1.2" opacity="0.10"/><circle cx="1025.6" cy="712.5" r="0.9" opacity="0.05"/><circle cx="401.8" cy="365.3" r="1.0" opacity="0.19"/><circle cx="1179.6" cy="972.6" r="0.9" opacity="0.07"/><circle cx="789.0" cy="538.8" r="1.0" opacity="0.06"/><circle cx="1463.6" cy="790.1" r="1.0" opacity="0.04"/><circle cx="1417.6" cy="533.4" r="1.0" opacity="0.09"/><circle cx="485.5" cy="512.2" r="1.2" opacity="0.09"/><circle cx="1113.9" cy="513.6" r="1.0" opacity="0.11"/><circle cx="778.2" cy="478.5" r="0.9" opacity="0.06"/><circle cx="918.3" cy="547.7" r="1.0" opacity="0.09"/><circle cx="999.6" cy="598.9" r="0.9" opacity="0.14"/><circle cx="720.2" cy="339.7" r="0.9" opacity="0.06"/><circle cx="462.8" cy="424.3" r="1.2" opacity="0.24"/><circle cx="1178.5" cy="601.7" r="0.9" opacity="0.25"/><circle cx="320.7" cy="538.7" r="0.9" opacity="0.06"/><circle cx="740.3" cy="941.4" r="0.8" opacity="0.16"/><circle cx="1498.2" cy="685.4" r="1.0" opacity="0.15"/><circle cx="1427.9" cy="710.5" r="1.2" opacity="0.10"/><circle cx="525.2" cy="807.2" r="1.0" opacity="0.05"/><circle cx="1350.9" cy="728.5" r="0.8" opacity="0.10"/><circle cx="1564.7" cy="713.0" r="0.9" opacity="0.04"/><circle cx="580.1" cy="588.1" r="0.8" opacity="0.04"/><circle cx="686.2" cy="780.1" r="1.2" opacity="0.23"/><circle cx="717.2" cy="396.4" r="0.9" opacity="0.05"/><circle cx="684.8" cy="316.7" r="0.9" opacity="0.13"/><circle cx="461.5" cy="293.9" r="0.9" opacity="0.12"/><circle cx="1279.1" cy="909.4" r="0.8" opacity="0.10"/><circle cx="629.9" cy="792.5" r="1.0" opacity="0.08"/><circle cx="876.9" cy="945.3" r="1.0" opacity="0.13"/><circle cx="685.5" cy="747.7" r="0.8" opacity="0.10"/><circle cx="964.6" cy="360.4" r="0.9" opacity="0.15"/><circle cx="366.2" cy="701.5" r="0.8" opacity="0.08"/><circle cx="1094.1" cy="720.2" r="1.2" opacity="0.09"/><circle cx="1387.8" cy="511.3" r="0.9" opacity="0.06"/><circle cx="908.4" cy="771.4" r="1.0" opacity="0.13"/><circle cx="606.1" cy="298.4" r="0.8" opacity="0.20"/><circle cx="1023.1" cy="837.8" r="0.8" opacity="0.25"/><circle cx="1060.2" cy="572.9" r="0.9" opacity="0.06"/><circle cx="749.8" cy="874.4" r="0.8" opacity="0.07"/><circle cx="1484.8" cy="646.5" r="0.8" opacity="0.04"/><circle cx="1020.2" cy="421.5" r="1.0" opacity="0.06"/><circle cx="979.2" cy="862.3" r="1.0" opacity="0.05"/><circle cx="1338.5" cy="383.0" r="1.0" opacity="0.06"/><circle cx="582.5" cy="847.8" r="0.9" opacity="0.08"/><circle cx="490.8" cy="618.7" r="0.8" opacity="0.20"/><circle cx="770.7" cy="914.5" r="0.9" opacity="0.16"/><circle cx="1568.9" cy="609.5" r="0.9" opacity="0.06"/><circle cx="1435.9" cy="757.3" r="1.0" opacity="0.04"/><circle cx="1068.0" cy="754.4" r="1.0" opacity="0.07"/><circle cx="944.1" cy="707.1" r="1.0" opacity="0.04"/><circle cx="1413.5" cy="937.0" r="1.2" opacity="0.04"/><circle cx="642.2" cy="679.1" r="0.9" opacity="0.11"/><circle cx="1154.1" cy="914.5" r="0.8" opacity="0.13"/><circle cx="699.1" cy="509.7" r="0.8" opacity="0.26"/><circle cx="762.6" cy="420.9" r="1.2" opacity="0.11"/><circle cx="1271.5" cy="856.2" r="0.8" opacity="0.06"/><circle cx="988.1" cy="942.3" r="1.0" opacity="0.07"/><circle cx="552.0" cy="650.7" r="1.2" opacity="0.05"/><circle cx="548.2" cy="855.3" r="1.0" opacity="0.38"/><circle cx="786.1" cy="691.7" r="0.8" opacity="0.04"/><circle cx="468.5" cy="558.8" r="0.9" opacity="0.15"/><circle cx="707.5" cy="833.2" r="0.8" opacity="0.04"/><circle cx="839.8" cy="540.7" r="0.9" opacity="0.07"/><circle cx="528.7" cy="516.8" r="1.0" opacity="0.12"/><circle cx="1180.4" cy="527.7" r="0.9" opacity="0.18"/><circle cx="1016.7" cy="415.1" r="1.0" opacity="0.07"/><circle cx="1475.8" cy="970.1" r="0.8" opacity="0.05"/><circle cx="1004.2" cy="665.4" r="1.0" opacity="0.04"/><circle cx="833.9" cy="359.1" r="0.8" opacity="0.04"/><circle cx="1181.8" cy="364.8" r="1.0" opacity="0.05"/><circle cx="1583.8" cy="553.0" r="1.0" opacity="0.16"/><circle cx="678.1" cy="718.2" r="0.9" opacity="0.10"/><circle cx="568.0" cy="684.9" r="1.2" opacity="0.04"/><circle cx="517.6" cy="472.9" r="0.9" opacity="0.14"/><circle cx="943.1" cy="475.7" r="1.2" opacity="0.08"/><circle cx="1271.1" cy="721.4" r="1.0" opacity="0.11"/><circle cx="298.0" cy="688.5" r="0.9" opacity="0.32"/><circle cx="1261.7" cy="325.3" r="0.8" opacity="0.04"/><circle cx="882.1" cy="945.9" r="0.8" opacity="0.11"/><circle cx="400.8" cy="458.5" r="0.8" opacity="0.12"/><circle cx="537.8" cy="639.5" r="1.0" opacity="0.22"/><circle cx="852.1" cy="945.7" r="1.0" opacity="0.18"/><circle cx="592.0" cy="782.5" r="1.2" opacity="0.08"/><circle cx="1389.1" cy="561.7" r="1.0" opacity="0.23"/><circle cx="1077.7" cy="673.7" r="1.2" opacity="0.10"/><circle cx="732.5" cy="548.3" r="0.9" opacity="0.12"/><circle cx="402.0" cy="494.6" r="1.0" opacity="0.04"/><circle cx="495.0" cy="296.0" r="1.2" opacity="0.04"/><circle cx="1264.1" cy="333.9" r="0.8" opacity="0.04"/><circle cx="1494.7" cy="900.4" r="1.0" opacity="0.07"/><circle cx="425.7" cy="775.7" r="1.0" opacity="0.13"/><circle cx="268.2" cy="710.1" r="1.0" opacity="0.14"/><circle cx="461.0" cy="469.4" r="0.8" opacity="0.06"/><circle cx="749.5" cy="779.9" r="1.2" opacity="0.30"/><circle cx="734.9" cy="365.1" r="0.9" opacity="0.05"/><circle cx="1271.8" cy="863.7" r="0.9" opacity="0.10"/><circle cx="1017.2" cy="791.2" r="1.0" opacity="0.14"/><circle cx="1005.4" cy="481.2" r="0.9" opacity="0.12"/><circle cx="1227.9" cy="457.3" r="0.9" opacity="0.12"/><circle cx="992.6" cy="366.3" r="0.8" opacity="0.22"/><circle cx="726.9" cy="697.3" r="1.0" opacity="0.50"/><circle cx="577.8" cy="926.3" r="1.2" opacity="0.29"/><circle cx="1389.4" cy="994.4" r="0.8" opacity="0.09"/><circle cx="1266.4" cy="308.9" r="1.0" opacity="0.19"/><circle cx="471.1" cy="406.5" r="1.0" opacity="0.05"/><circle cx="1610.4" cy="688.1" r="1.0" opacity="0.14"/><circle cx="425.7" cy="695.0" r="1.0" opacity="0.06"/><circle cx="1430.3" cy="908.1" r="1.0" opacity="0.05"/><circle cx="1102.3" cy="516.8" r="1.0" opacity="0.15"/><circle cx="1581.9" cy="596.3" r="1.0" opacity="0.24"/><circle cx="402.5" cy="380.5" r="1.2" opacity="0.06"/><circle cx="1099.3" cy="488.2" r="1.0" opacity="0.10"/><circle cx="781.9" cy="387.2" r="0.9" opacity="0.09"/><circle cx="1606.4" cy="519.5" r="0.9" opacity="0.12"/><circle cx="458.6" cy="655.7" r="0.8" opacity="0.16"/><circle cx="322.1" cy="788.5" r="0.9" opacity="0.05"/><circle cx="1024.0" cy="737.5" r="1.2" opacity="0.33"/><circle cx="984.2" cy="853.3" r="1.2" opacity="0.07"/><circle cx="1382.9" cy="798.8" r="0.8" opacity="0.08"/><circle cx="495.8" cy="593.5" r="0.9" opacity="0.06"/><circle cx="510.3" cy="413.4" r="1.0" opacity="0.04"/><circle cx="506.3" cy="620.6" r="0.8" opacity="0.07"/><circle cx="1162.7" cy="699.3" r="1.0" opacity="0.07"/><circle cx="827.0" cy="358.3" r="1.0" opacity="0.05"/><circle cx="1409.7" cy="873.7" r="1.0" opacity="0.10"/><circle cx="1039.7" cy="798.1" r="0.8" opacity="0.20"/><circle cx="905.2" cy="859.3" r="0.9" opacity="0.04"/><circle cx="1637.7" cy="507.4" r="0.8" opacity="0.06"/><circle cx="1127.6" cy="603.6" r="0.9" opacity="0.11"/><circle cx="1487.1" cy="959.6" r="1.0" opacity="0.08"/><circle cx="536.8" cy="433.4" r="0.9" opacity="0.07"/><circle cx="1269.9" cy="978.8" r="1.0" opacity="0.18"/><circle cx="1409.4" cy="537.4" r="0.8" opacity="0.08"/><circle cx="914.8" cy="839.7" r="0.9" opacity="0.07"/><circle cx="402.4" cy="531.1" r="0.9" opacity="0.06"/><circle cx="539.6" cy="388.5" r="1.2" opacity="0.21"/><circle cx="1526.0" cy="568.3" r="1.0" opacity="0.04"/><circle cx="1016.3" cy="834.2" r="0.8" opacity="0.12"/><circle cx="749.5" cy="785.9" r="1.0" opacity="0.05"/><circle cx="690.8" cy="377.0" r="1.0" opacity="0.04"/><circle cx="1565.1" cy="613.9" r="0.9" opacity="0.04"/><circle cx="1671.4" cy="534.8" r="1.0" opacity="0.08"/><circle cx="1129.0" cy="607.4" r="1.2" opacity="0.12"/><circle cx="993.3" cy="452.7" r="1.0" opacity="0.11"/><circle cx="1229.7" cy="369.8" r="1.2" opacity="0.10"/><circle cx="1107.2" cy="561.3" r="1.0" opacity="0.29"/><circle cx="1124.1" cy="336.9" r="0.8" opacity="0.07"/><circle cx="1107.2" cy="1002.8" r="1.0" opacity="0.13"/><circle cx="1301.9" cy="744.5" r="1.2" opacity="0.06"/><circle cx="316.2" cy="765.3" r="0.9" opacity="0.06"/><circle cx="1024.5" cy="824.2" r="1.0" opacity="0.06"/><circle cx="867.7" cy="864.2" r="1.0" opacity="0.07"/><circle cx="477.6" cy="659.4" r="1.2" opacity="0.15"/><circle cx="472.5" cy="360.9" r="1.0" opacity="0.07"/><circle cx="1416.6" cy="397.7" r="1.0" opacity="0.04"/><circle cx="1328.9" cy="672.5" r="1.2" opacity="0.29"/><circle cx="1075.7" cy="467.0" r="0.9" opacity="0.17"/><circle cx="551.3" cy="741.2" r="0.9" opacity="0.05"/><circle cx="1506.1" cy="437.8" r="1.2" opacity="0.05"/><circle cx="1213.1" cy="481.6" r="1.0" opacity="0.08"/><circle cx="918.5" cy="865.8" r="1.2" opacity="0.10"/><circle cx="663.6" cy="506.1" r="1.0" opacity="0.09"/><circle cx="587.1" cy="919.6" r="1.0" opacity="0.10"/><circle cx="1032.6" cy="404.6" r="1.2" opacity="0.05"/><circle cx="1412.5" cy="615.3" r="0.9" opacity="0.16"/><circle cx="865.7" cy="810.4" r="1.0" opacity="0.04"/><circle cx="456.2" cy="820.3" r="1.0" opacity="0.07"/><circle cx="366.0" cy="710.1" r="1.0" opacity="0.06"/><circle cx="459.8" cy="711.6" r="1.2" opacity="0.21"/><circle cx="1362.5" cy="795.4" r="0.8" opacity="0.08"/><circle cx="513.2" cy="704.1" r="1.0" opacity="0.11"/><circle cx="1393.5" cy="428.6" r="1.0" opacity="0.14"/><circle cx="1150.1" cy="390.2" r="1.2" opacity="0.18"/><circle cx="884.6" cy="380.6" r="1.0" opacity="0.09"/><circle cx="1534.0" cy="753.9" r="1.0" opacity="0.16"/><circle cx="461.9" cy="737.9" r="1.2" opacity="0.08"/><circle cx="541.9" cy="364.0" r="1.2" opacity="0.12"/><circle cx="1459.0" cy="463.9" r="1.0" opacity="0.15"/><circle cx="1095.0" cy="380.7" r="1.0" opacity="0.13"/><circle cx="1050.7" cy="570.9" r="1.0" opacity="0.06"/><circle cx="1181.0" cy="416.3" r="0.9" opacity="0.04"/><circle cx="842.3" cy="422.3" r="0.9" opacity="0.04"/><circle cx="1096.7" cy="774.4" r="1.0" opacity="0.08"/><circle cx="1000.1" cy="561.9" r="0.8" opacity="0.08"/><circle cx="1138.2" cy="426.4" r="0.9" opacity="0.13"/><circle cx="675.5" cy="626.9" r="1.0" opacity="0.11"/><circle cx="890.7" cy="1012.9" r="1.0" opacity="0.07"/><circle cx="1089.8" cy="440.3" r="0.8" opacity="0.05"/><circle cx="1369.7" cy="512.5" r="1.2" opacity="0.21"/><circle cx="849.5" cy="901.8" r="0.9" opacity="0.04"/><circle cx="403.8" cy="637.4" r="1.0" opacity="0.07"/><circle cx="1466.3" cy="705.4" r="1.0" opacity="0.06"/><circle cx="1374.1" cy="465.6" r="1.0" opacity="0.09"/><circle cx="1488.9" cy="432.5" r="0.8" opacity="0.15"/><circle cx="1460.2" cy="418.2" r="1.2" opacity="0.05"/><circle cx="587.6" cy="788.5" r="0.8" opacity="0.20"/><circle cx="840.1" cy="656.7" r="1.0" opacity="0.05"/><circle cx="680.1" cy="401.6" r="1.0" opacity="0.08"/><circle cx="521.7" cy="410.2" r="0.8" opacity="0.15"/><circle cx="1495.4" cy="734.5" r="1.0" opacity="0.08"/><circle cx="1120.0" cy="687.9" r="0.8" opacity="0.05"/><circle cx="461.2" cy="577.1" r="0.8" opacity="0.04"/><circle cx="1260.3" cy="463.5" r="0.8" opacity="0.06"/><circle cx="505.6" cy="721.9" r="0.8" opacity="0.06"/><circle cx="702.4" cy="455.0" r="1.0" opacity="0.21"/><circle cx="659.3" cy="918.7" r="0.9" opacity="0.05"/><circle cx="1034.3" cy="851.4" r="0.8" opacity="0.40"/><circle cx="551.1" cy="296.0" r="0.9" opacity="0.24"/><circle cx="573.4" cy="845.0" r="1.0" opacity="0.16"/><circle cx="683.9" cy="994.1" r="1.2" opacity="0.08"/><circle cx="919.5" cy="826.0" r="0.8" opacity="0.08"/><circle cx="610.2" cy="504.2" r="1.0" opacity="0.11"/><circle cx="380.7" cy="460.0" r="1.2" opacity="0.11"/><circle cx="1459.3" cy="520.0" r="1.2" opacity="0.06"/><circle cx="874.7" cy="533.4" r="1.2" opacity="0.15"/><circle cx="233.6" cy="691.4" r="0.9" opacity="0.07"/><circle cx="436.8" cy="827.0" r="1.0" opacity="0.10"/><circle cx="1196.4" cy="979.5" r="1.0" opacity="0.27"/><circle cx="968.4" cy="883.6" r="1.2" opacity="0.12"/><circle cx="849.1" cy="462.7" r="1.0" opacity="0.04"/><circle cx="450.9" cy="584.3" r="1.0" opacity="0.06"/><circle cx="1021.7" cy="821.5" r="0.8" opacity="0.37"/><circle cx="864.9" cy="1006.6" r="1.0" opacity="0.11"/><circle cx="1228.7" cy="358.0" r="1.2" opacity="0.06"/><circle cx="595.5" cy="316.5" r="1.0" opacity="0.18"/><circle cx="691.7" cy="386.4" r="0.8" opacity="0.14"/><circle cx="1080.7" cy="944.4" r="1.0" opacity="0.05"/><circle cx="350.3" cy="543.6" r="1.2" opacity="0.10"/><circle cx="1493.9" cy="694.6" r="1.2" opacity="0.04"/><circle cx="1083.8" cy="470.9" r="1.0" opacity="0.10"/><circle cx="1233.8" cy="975.0" r="1.2" opacity="0.06"/><circle cx="1223.1" cy="488.2" r="0.8" opacity="0.04"/><circle cx="733.8" cy="615.9" r="1.2" opacity="0.11"/><circle cx="1318.8" cy="910.5" r="0.8" opacity="0.07"/><circle cx="556.2" cy="444.1" r="0.8" opacity="0.14"/><circle cx="759.2" cy="485.5" r="0.8" opacity="0.21"/><circle cx="1597.3" cy="673.5" r="1.0" opacity="0.06"/><circle cx="1045.0" cy="903.7" r="1.2" opacity="0.10"/><circle cx="1034.0" cy="521.7" r="0.9" opacity="0.10"/><circle cx="1381.8" cy="635.7" r="1.0" opacity="0.04"/><circle cx="481.4" cy="461.3" r="0.8" opacity="0.04"/><circle cx="1385.3" cy="524.4" r="0.9" opacity="0.11"/><circle cx="1290.1" cy="681.6" r="1.0" opacity="0.17"/><circle cx="1249.3" cy="789.0" r="0.9" opacity="0.18"/><circle cx="1379.2" cy="748.4" r="1.0" opacity="0.23"/><circle cx="863.8" cy="375.1" r="1.2" opacity="0.09"/><circle cx="275.5" cy="727.8" r="1.0" opacity="0.04"/><circle cx="735.0" cy="500.2" r="1.0" opacity="0.14"/><circle cx="249.8" cy="732.7" r="1.0" opacity="0.07"/><circle cx="361.5" cy="739.8" r="0.9" opacity="0.12"/><circle cx="436.1" cy="558.0" r="0.8" opacity="0.16"/><circle cx="1333.2" cy="1005.1" r="0.9" opacity="0.10"/><circle cx="1399.8" cy="774.2" r="1.2" opacity="0.20"/><circle cx="1414.6" cy="817.3" r="1.2" opacity="0.06"/><circle cx="1031.6" cy="932.4" r="1.0" opacity="0.04"/><circle cx="341.6" cy="619.6" r="1.2" opacity="0.14"/><circle cx="857.2" cy="820.0" r="0.8" opacity="0.19"/><circle cx="359.1" cy="755.3" r="0.8" opacity="0.20"/><circle cx="1058.4" cy="560.7" r="1.0" opacity="0.10"/><circle cx="1322.2" cy="385.0" r="1.0" opacity="0.15"/><circle cx="1047.1" cy="736.4" r="1.2" opacity="0.08"/><circle cx="1449.2" cy="729.4" r="0.9" opacity="0.06"/><circle cx="1328.0" cy="1003.6" r="0.8" opacity="0.22"/><circle cx="1631.6" cy="603.5" r="0.8" opacity="0.04"/><circle cx="484.0" cy="752.6" r="0.8" opacity="0.14"/><circle cx="1107.1" cy="860.9" r="1.0" opacity="0.10"/><circle cx="1215.3" cy="483.9" r="0.8" opacity="0.18"/><circle cx="1238.9" cy="731.0" r="0.9" opacity="0.04"/><circle cx="844.7" cy="950.8" r="1.2" opacity="0.06"/><circle cx="753.7" cy="988.7" r="0.9" opacity="0.22"/><circle cx="973.9" cy="880.2" r="1.2" opacity="0.08"/><circle cx="1631.6" cy="675.9" r="1.0" opacity="0.15"/><circle cx="391.9" cy="531.3" r="0.8" opacity="0.04"/><circle cx="969.3" cy="535.2" r="0.8" opacity="0.14"/><circle cx="507.2" cy="787.0" r="1.2" opacity="0.08"/><circle cx="1673.7" cy="630.3" r="1.0" opacity="0.16"/><circle cx="396.6" cy="569.8" r="1.0" opacity="0.18"/><circle cx="1158.8" cy="1004.0" r="0.9" opacity="0.22"/><circle cx="1481.6" cy="648.2" r="0.9" opacity="0.13"/><circle cx="1148.2" cy="738.3" r="1.2" opacity="0.05"/><circle cx="444.8" cy="817.4" r="0.8" opacity="0.08"/><circle cx="1530.6" cy="718.2" r="1.2" opacity="0.05"/><circle cx="1438.0" cy="935.1" r="1.0" opacity="0.08"/><circle cx="601.0" cy="600.1" r="1.2" opacity="0.06"/><circle cx="1078.7" cy="734.6" r="0.8" opacity="0.04"/><circle cx="988.5" cy="810.5" r="0.9" opacity="0.11"/><circle cx="578.3" cy="918.6" r="1.0" opacity="0.05"/><circle cx="547.3" cy="607.8" r="0.8" opacity="0.16"/><circle cx="703.9" cy="431.1" r="1.2" opacity="0.04"/><circle cx="1027.3" cy="826.5" r="1.0" opacity="0.05"/><circle cx="703.1" cy="898.2" r="1.2" opacity="0.04"/><circle cx="645.4" cy="739.6" r="1.0" opacity="0.08"/><circle cx="1082.5" cy="910.2" r="1.0" opacity="0.34"/><circle cx="1218.7" cy="957.9" r="1.0" opacity="0.35"/><circle cx="1422.5" cy="423.0" r="1.0" opacity="0.04"/><circle cx="1168.3" cy="851.3" r="0.8" opacity="0.18"/><circle cx="1568.7" cy="699.5" r="1.0" opacity="0.07"/><circle cx="1286.9" cy="471.7" r="1.0" opacity="0.41"/><circle cx="1392.0" cy="931.7" r="1.0" opacity="0.13"/><circle cx="1375.3" cy="655.9" r="0.9" opacity="0.04"/><circle cx="1579.9" cy="534.7" r="1.2" opacity="0.09"/><circle cx="703.0" cy="549.6" r="0.8" opacity="0.04"/><circle cx="1357.8" cy="558.5" r="0.8" opacity="0.04"/><circle cx="475.9" cy="501.3" r="0.9" opacity="0.08"/><circle cx="963.8" cy="487.0" r="1.2" opacity="0.05"/><circle cx="1601.0" cy="728.9" r="0.8" opacity="0.05"/><circle cx="976.0" cy="438.2" r="1.0" opacity="0.14"/><circle cx="1435.4" cy="719.2" r="1.0" opacity="0.11"/><circle cx="1297.5" cy="343.5" r="1.0" opacity="0.13"/><circle cx="1614.8" cy="636.6" r="1.0" opacity="0.04"/><circle cx="1134.4" cy="881.4" r="1.0" opacity="0.06"/><circle cx="819.9" cy="765.0" r="1.2" opacity="0.05"/><circle cx="901.4" cy="394.1" r="1.0" opacity="0.12"/><circle cx="1210.3" cy="719.6" r="0.8" opacity="0.10"/><circle cx="1345.4" cy="749.5" r="1.2" opacity="0.08"/><circle cx="1264.4" cy="442.2" r="1.0" opacity="0.21"/><circle cx="906.3" cy="787.0" r="1.0" opacity="0.08"/><circle cx="1299.7" cy="999.3" r="0.8" opacity="0.10"/><circle cx="1123.2" cy="731.0" r="1.0" opacity="0.12"/><circle cx="1467.5" cy="525.8" r="0.8" opacity="0.07"/><circle cx="958.7" cy="959.7" r="1.0" opacity="0.04"/><circle cx="1030.3" cy="648.1" r="1.2" opacity="0.09"/><circle cx="451.3" cy="820.1" r="1.0" opacity="0.10"/><circle cx="1078.4" cy="834.1" r="1.0" opacity="0.07"/><circle cx="1141.2" cy="690.7" r="1.0" opacity="0.19"/><circle cx="1179.0" cy="459.5" r="0.8" opacity="0.04"/><circle cx="1308.2" cy="862.7" r="1.0" opacity="0.10"/><circle cx="1080.1" cy="356.5" r="1.2" opacity="0.14"/><circle cx="573.0" cy="491.5" r="1.0" opacity="0.08"/><circle cx="1145.7" cy="978.7" r="1.2" opacity="0.06"/><circle cx="1538.2" cy="850.5" r="0.8" opacity="0.13"/><circle cx="971.5" cy="729.5" r="0.8" opacity="0.05"/><circle cx="1299.8" cy="952.2" r="1.2" opacity="0.04"/><circle cx="1289.0" cy="914.2" r="1.0" opacity="0.09"/><circle cx="564.3" cy="649.8" r="0.9" opacity="0.14"/><circle cx="1146.7" cy="744.6" r="1.0" opacity="0.14"/><circle cx="1383.4" cy="486.4" r="1.0" opacity="0.07"/><circle cx="458.7" cy="332.0" r="1.0" opacity="0.07"/><circle cx="661.7" cy="384.7" r="0.8" opacity="0.07"/><circle cx="1295.4" cy="586.2" r="1.2" opacity="0.15"/><circle cx="788.5" cy="585.8" r="0.9" opacity="0.11"/><circle cx="532.1" cy="509.0" r="1.0" opacity="0.16"/><circle cx="568.4" cy="888.6" r="0.9" opacity="0.07"/><circle cx="1358.4" cy="752.3" r="1.0" opacity="0.05"/><circle cx="638.9" cy="791.2" r="1.0" opacity="0.12"/><circle cx="623.2" cy="888.3" r="0.8" opacity="0.23"/><circle cx="1425.8" cy="531.1" r="0.9" opacity="0.20"/><circle cx="1210.6" cy="347.0" r="0.9" opacity="0.05"/><circle cx="925.0" cy="696.3" r="0.8" opacity="0.16"/><circle cx="218.4" cy="678.7" r="1.2" opacity="0.04"/><circle cx="1135.4" cy="738.0" r="0.8" opacity="0.04"/><circle cx="548.9" cy="637.2" r="0.9" opacity="0.09"/><circle cx="866.0" cy="907.5" r="1.0" opacity="0.08"/><circle cx="508.3" cy="682.9" r="1.2" opacity="0.11"/><circle cx="1445.5" cy="845.8" r="0.8" opacity="0.07"/><circle cx="553.7" cy="565.2" r="1.2" opacity="0.06"/><circle cx="1022.9" cy="431.6" r="0.8" opacity="0.22"/><circle cx="712.0" cy="754.0" r="0.9" opacity="0.08"/><circle cx="1356.0" cy="773.4" r="1.2" opacity="0.07"/><circle cx="1157.9" cy="951.5" r="0.9" opacity="0.14"/><circle cx="1148.1" cy="895.8" r="0.9" opacity="0.18"/><circle cx="1074.1" cy="403.0" r="1.0" opacity="0.11"/><circle cx="840.2" cy="293.6" r="1.0" opacity="0.04"/><circle cx="565.2" cy="495.2" r="1.2" opacity="0.13"/><circle cx="1342.9" cy="928.4" r="1.0" opacity="0.13"/><circle cx="937.5" cy="819.1" r="1.0" opacity="0.09"/><circle cx="738.6" cy="745.0" r="0.8" opacity="0.04"/><circle cx="1064.4" cy="651.8" r="1.0" opacity="0.04"/><circle cx="989.9" cy="370.6" r="1.0" opacity="0.07"/><circle cx="1341.4" cy="620.9" r="1.2" opacity="0.05"/><circle cx="441.2" cy="488.0" r="1.0" opacity="0.12"/><circle cx="1001.2" cy="953.0" r="0.8" opacity="0.20"/><circle cx="1164.4" cy="667.8" r="1.0" opacity="0.13"/><circle cx="377.6" cy="812.7" r="0.8" opacity="0.10"/><circle cx="1653.6" cy="550.7" r="1.0" opacity="0.14"/><circle cx="1325.9" cy="627.4" r="1.2" opacity="0.06"/><circle cx="1242.2" cy="353.0" r="0.9" opacity="0.11"/><circle cx="1130.8" cy="963.6" r="1.0" opacity="0.04"/><circle cx="375.5" cy="714.7" r="0.9" opacity="0.24"/><circle cx="875.5" cy="791.5" r="0.9" opacity="0.12"/><circle cx="1396.4" cy="580.8" r="1.0" opacity="0.04"/><circle cx="1357.4" cy="837.6" r="0.8" opacity="0.06"/><circle cx="1167.7" cy="978.4" r="0.9" opacity="0.05"/><circle cx="946.2" cy="825.4" r="0.9" opacity="0.11"/><circle cx="1046.2" cy="954.7" r="1.0" opacity="0.10"/><circle cx="1535.3" cy="564.0" r="1.2" opacity="0.13"/><circle cx="636.4" cy="531.8" r="0.8" opacity="0.05"/><circle cx="1444.0" cy="603.5" r="0.9" opacity="0.27"/><circle cx="804.8" cy="891.0" r="0.8" opacity="0.06"/><circle cx="535.4" cy="706.5" r="1.2" opacity="0.06"/><circle cx="822.7" cy="751.7" r="0.9" opacity="0.10"/><circle cx="590.2" cy="923.4" r="0.9" opacity="0.04"/><circle cx="502.8" cy="453.6" r="1.2" opacity="0.06"/><circle cx="446.7" cy="393.5" r="0.8" opacity="0.05"/><circle cx="1263.2" cy="855.7" r="1.0" opacity="0.17"/><circle cx="1304.4" cy="727.6" r="0.9" opacity="0.06"/><circle cx="1455.0" cy="465.9" r="1.0" opacity="0.05"/><circle cx="921.1" cy="543.3" r="1.2" opacity="0.09"/><circle cx="1406.4" cy="970.7" r="0.8" opacity="0.06"/><circle cx="423.2" cy="726.0" r="1.2" opacity="0.16"/><circle cx="1254.5" cy="767.0" r="0.9" opacity="0.09"/><circle cx="968.0" cy="783.3" r="0.8" opacity="0.04"/><circle cx="921.3" cy="532.7" r="1.0" opacity="0.15"/><circle cx="330.0" cy="544.9" r="0.9" opacity="0.08"/><circle cx="703.6" cy="952.6" r="0.8" opacity="0.26"/><circle cx="515.0" cy="423.3" r="0.9" opacity="0.19"/><circle cx="466.9" cy="548.6" r="0.9" opacity="0.15"/><circle cx="436.3" cy="421.1" r="0.8" opacity="0.07"/><circle cx="879.7" cy="863.4" r="1.2" opacity="0.11"/><circle cx="650.9" cy="476.5" r="1.0" opacity="0.06"/><circle cx="1002.6" cy="989.1" r="1.0" opacity="0.05"/><circle cx="800.0" cy="849.2" r="1.0" opacity="0.04"/><circle cx="584.8" cy="574.4" r="1.2" opacity="0.04"/><circle cx="1362.3" cy="559.6" r="1.0" opacity="0.12"/><circle cx="1369.2" cy="724.9" r="1.0" opacity="0.12"/><circle cx="1072.4" cy="508.0" r="1.0" opacity="0.06"/><circle cx="853.7" cy="771.7" r="1.0" opacity="0.18"/><circle cx="574.6" cy="526.6" r="0.9" opacity="0.12"/><circle cx="344.4" cy="792.6" r="1.2" opacity="0.09"/><circle cx="418.2" cy="432.5" r="1.0" opacity="0.13"/><circle cx="675.1" cy="434.7" r="1.0" opacity="0.05"/><circle cx="992.7" cy="646.9" r="1.2" opacity="0.11"/><circle cx="538.9" cy="839.1" r="0.9" opacity="0.10"/><circle cx="1303.8" cy="1005.2" r="1.0" opacity="0.09"/><circle cx="790.0" cy="414.8" r="1.2" opacity="0.08"/><circle cx="1157.5" cy="943.9" r="1.0" opacity="0.05"/><circle cx="1164.5" cy="1008.5" r="0.9" opacity="0.06"/></g>
</g></svg>
<svg class="abs" style="left:1584px;top:58px" width="161" height="161" viewBox="1584 58 161 161">
<defs><clipPath id="pc"><polygon points="1628.4,64.9 1743.8,126.4 1695.2,212.6 1584.9,143.3"/></clipPath>
<filter id="pb1" x="-50%" y="-50%" width="200%" height="200%"><feGaussianBlur stdDeviation="0.5"/></filter>
<filter id="pb2" x="-50%" y="-50%" width="200%" height="200%"><feGaussianBlur stdDeviation="1.2"/></filter>
<radialGradient id="pg"><stop offset="0" stop-color="#fff" stop-opacity=".9"/><stop offset="0.35" stop-color="#fff" stop-opacity=".45"/><stop offset="1" stop-color="#fff" stop-opacity="0"/></radialGradient>
<radialGradient id="pd"><stop offset="0" stop-color="#fff" stop-opacity=".4"/><stop offset="0.7" stop-color="#fff" stop-opacity=".18"/><stop offset="1" stop-color="#fff" stop-opacity="0"/></radialGradient></defs>
<polygon points="1628.4,64.9 1743.8,126.4 1695.2,212.6 1584.9,143.3" fill="#000" shape-rendering="crispEdges"/>
<g clip-path="url(#pc)">
<ellipse cx="1652.6" cy="141" rx="15.5" ry="22" fill="url(#pd)"/>
<ellipse cx="1652.6" cy="138" rx="11" ry="13" fill="none" stroke="#fff" stroke-width="2" opacity=".22" filter="url(#pb2)"/>
<circle cx="1652.2" cy="135" r="6" fill="url(#pg)"/>
<ellipse cx="1646" cy="112.8" rx="8" ry="6.5" fill="url(#pg)"/>
<g fill="#fff" filter="url(#pb1)"><circle cx="1659.2" cy="96.6" r="0.6" opacity="0.33"/><circle cx="1613.4" cy="111.4" r="0.6" opacity="0.23"/><circle cx="1613.0" cy="108.2" r="0.6" opacity="0.11"/><circle cx="1675.4" cy="97.0" r="0.6" opacity="0.13"/><circle cx="1641.4" cy="155.8" r="0.6" opacity="0.14"/><circle cx="1626.9" cy="127.8" r="0.6" opacity="0.43"/><circle cx="1677.7" cy="131.5" r="0.6" opacity="0.44"/><circle cx="1596.4" cy="135.1" r="0.6" opacity="0.20"/><circle cx="1639.9" cy="83.0" r="0.6" opacity="0.21"/><circle cx="1714.7" cy="129.3" r="0.6" opacity="0.30"/><circle cx="1685.9" cy="133.4" r="0.6" opacity="0.29"/><circle cx="1633.1" cy="73.4" r="0.6" opacity="0.17"/><circle cx="1688.3" cy="140.3" r="0.6" opacity="0.21"/><circle cx="1676.3" cy="136.4" r="0.6" opacity="0.20"/><circle cx="1689.7" cy="168.6" r="0.6" opacity="0.19"/><circle cx="1671.8" cy="141.4" r="0.6" opacity="0.41"/><circle cx="1700.1" cy="132.3" r="0.6" opacity="0.44"/><circle cx="1623.8" cy="104.9" r="0.6" opacity="0.36"/><circle cx="1624.7" cy="112.6" r="0.6" opacity="0.11"/><circle cx="1672.3" cy="165.9" r="0.6" opacity="0.30"/><circle cx="1715.8" cy="143.3" r="0.6" opacity="0.34"/><circle cx="1671.8" cy="146.9" r="0.6" opacity="0.26"/><circle cx="1684.2" cy="190.6" r="0.6" opacity="0.27"/><circle cx="1702.4" cy="110.5" r="0.6" opacity="0.35"/><circle cx="1659.9" cy="182.6" r="0.6" opacity="0.39"/><circle cx="1644.5" cy="112.6" r="0.6" opacity="0.33"/><circle cx="1610.9" cy="102.5" r="0.6" opacity="0.16"/><circle cx="1639.3" cy="76.7" r="0.6" opacity="0.37"/><circle cx="1632.6" cy="92.3" r="0.6" opacity="0.24"/><circle cx="1725.5" cy="124.8" r="0.6" opacity="0.26"/><circle cx="1653.4" cy="167.9" r="0.6" opacity="0.39"/><circle cx="1716.0" cy="139.9" r="0.6" opacity="0.25"/><circle cx="1631.3" cy="156.3" r="0.6" opacity="0.44"/><circle cx="1638.2" cy="88.0" r="0.6" opacity="0.18"/><circle cx="1634.2" cy="117.3" r="0.6" opacity="0.31"/><circle cx="1658.5" cy="81.4" r="0.6" opacity="0.25"/><circle cx="1646.4" cy="132.0" r="0.6" opacity="0.43"/><circle cx="1685.7" cy="147.8" r="0.6" opacity="0.32"/><circle cx="1704.1" cy="110.7" r="0.6" opacity="0.41"/><circle cx="1680.4" cy="181.4" r="0.6" opacity="0.38"/><circle cx="1656.3" cy="120.3" r="0.6" opacity="0.14"/><circle cx="1698.9" cy="108.8" r="0.6" opacity="0.12"/><circle cx="1645.4" cy="90.5" r="0.6" opacity="0.22"/><circle cx="1634.5" cy="68.2" r="0.6" opacity="0.15"/><circle cx="1624.3" cy="99.6" r="0.6" opacity="0.11"/><circle cx="1702.6" cy="166.8" r="0.6" opacity="0.15"/><circle cx="1642.4" cy="107.6" r="0.6" opacity="0.23"/><circle cx="1605.6" cy="139.0" r="0.6" opacity="0.45"/><circle cx="1661.1" cy="131.5" r="0.6" opacity="0.13"/><circle cx="1625.3" cy="98.0" r="0.6" opacity="0.19"/><circle cx="1717.0" cy="128.5" r="0.6" opacity="0.11"/><circle cx="1715.2" cy="164.8" r="0.6" opacity="0.15"/><circle cx="1689.9" cy="100.4" r="0.6" opacity="0.28"/><circle cx="1703.8" cy="192.8" r="0.6" opacity="0.34"/><circle cx="1642.6" cy="109.7" r="0.6" opacity="0.16"/><circle cx="1694.3" cy="154.1" r="0.6" opacity="0.37"/><circle cx="1656.7" cy="102.7" r="0.6" opacity="0.38"/><circle cx="1705.0" cy="192.3" r="0.6" opacity="0.38"/><circle cx="1690.7" cy="173.2" r="0.6" opacity="0.18"/><circle cx="1672.7" cy="124.6" r="0.6" opacity="0.11"/><circle cx="1619.5" cy="88.5" r="0.6" opacity="0.19"/><circle cx="1666.7" cy="182.5" r="0.6" opacity="0.26"/><circle cx="1693.6" cy="200.0" r="0.6" opacity="0.43"/><circle cx="1660.9" cy="104.6" r="0.6" opacity="0.18"/><circle cx="1642.2" cy="93.0" r="0.6" opacity="0.32"/><circle cx="1695.7" cy="186.2" r="0.6" opacity="0.27"/><circle cx="1669.0" cy="167.8" r="0.6" opacity="0.13"/><circle cx="1665.1" cy="176.9" r="0.6" opacity="0.37"/><circle cx="1694.2" cy="148.5" r="0.6" opacity="0.16"/><circle cx="1705.0" cy="139.5" r="0.6" opacity="0.38"/><circle cx="1691.5" cy="198.5" r="0.9" opacity=".9"/><circle cx="1673" cy="133.5" r="0.8" opacity=".6"/></g>
</g>
<rect x="1585" y="98.5" width="159" height="1.3" fill="#28d2e6"/>
<rect x="1585" y="175.4" width="159" height="1.4" fill="#35cfe0" opacity=".6"/>
<g fill="none" stroke-width="1.15"><path d="M1664.6 138.2V106" stroke="#22d422"/><path d="M1664.6 138.2H1701" stroke="#22d422"/><path d="M1664.6 138.2V115" stroke="#eaea1c"/><path d="M1664.6 138.2H1638" stroke="#eaea1c"/></g>
<path d="M1664.6 103.8L1661.6999999999998 109.6L1664.6 108.2L1667.5 109.6Z" fill="#22d422"/>
<path d="M1703.2 138.2L1697.2 135.29999999999998L1698.6 138.2L1697.2 141.1Z" fill="#22d422"/>
<path d="M1664.6 113L1661.6 119.6L1664.6 118L1667.6 119.6Z" fill="#eaea1c"/>
<path d="M1635.8 138.2L1642.4 135.2L1640.8 138.2L1642.4 141.2Z" fill="#eaea1c"/>
<text x="1663.2" y="93.3" text-anchor="middle" font-family="Liberation Sans, sans-serif" font-size="13" fill="#22d422" stroke="#22d422" stroke-width="0.45" textLength="8" lengthAdjust="spacingAndGlyphs">Y</text>
<text x="1663.8" y="105.1" text-anchor="middle" font-family="Liberation Sans, sans-serif" font-size="13" fill="#eaea1c" stroke="#eaea1c" stroke-width="0.45" textLength="8" lengthAdjust="spacingAndGlyphs">N</text>
<text x="1625.4" y="144.10000000000002" text-anchor="middle" font-family="Liberation Sans, sans-serif" font-size="13" fill="#eaea1c" stroke="#eaea1c" stroke-width="0.45" textLength="8" lengthAdjust="spacingAndGlyphs">E</text>
<text x="1713" y="144.10000000000002" text-anchor="middle" font-family="Liberation Sans, sans-serif" font-size="13" fill="#22d422" stroke="#22d422" stroke-width="0.45" textLength="8" lengthAdjust="spacingAndGlyphs">X</text>
</svg>
<div class="abs" style="left:0;top:1019px;width:1920px;height:24px;box-sizing:border-box;border-top:1px solid #3c3c3c;border-bottom:1px solid #111;border-right:1px solid #222;background:linear-gradient(90deg,#000 0,#000 290px,#fff 1140px,#fff 1920px)"></div>
<div class="abs" style="left:191px;top:1043px;width:2px;height:3px;background:#555"></div>
<div class="abs" style="left:383px;top:1043px;width:2px;height:3px;background:#555"></div>
<div class="abs" style="left:575px;top:1043px;width:2px;height:3px;background:#555"></div>
<div class="abs" style="left:767px;top:1043px;width:2px;height:3px;background:#555"></div>
<div class="abs" style="left:959px;top:1043px;width:2px;height:3px;background:#555"></div>
<div class="abs" style="left:1151px;top:1043px;width:2px;height:3px;background:#555"></div>
<div class="abs" style="left:1343px;top:1043px;width:2px;height:3px;background:#555"></div>
<div class="abs" style="left:1535px;top:1043px;width:2px;height:3px;background:#555"></div>
<div class="abs" style="left:1727px;top:1043px;width:2px;height:3px;background:#555"></div>
<div class="abs" style="left:1919px;top:29px;width:1px;height:1051px;background:#c2c2c2"></div>
<div class="abs" style="left:0;top:1078px;width:1920px;height:2px;background:#9d9d9d"></div>
<div class="abs" style="left:61px;top:1079px;width:70px;height:1px;background:#e4e4e4"></div>
<div class="abs" style="left:427px;top:1079px;width:70px;height:1px;background:#e4e4e4"></div>
<div class="abs" style="left:793px;top:1079px;width:70px;height:1px;background:#e4e4e4"></div>
<div class="abs" style="left:1159px;top:1079px;width:70px;height:1px;background:#e4e4e4"></div>
<div class="abs" style="left:1525px;top:1079px;width:70px;height:1px;background:#e4e4e4"></div>
<span class="t" style="left:899.90px;top:6.00px;font-size:18px;color:#2a2a2a;transform:scaleX(0.9840)">SAOImage ds9</span>
<span class="t" style="left:8.54px;top:31.00px;font-size:15px;color:#000;transform:scaleX(0.9663)">File</span>
<span class="t" style="left:48.31px;top:31.00px;font-size:15px;color:#000;transform:scaleX(0.9876)">Edit</span>
<span class="t" style="left:91.30px;top:31.00px;font-size:15px;color:#000;transform:scaleX(0.9664)">View</span>
<span class="t" style="left:139.63px;top:31.00px;font-size:15px;color:#000;transform:scaleX(0.9754)">Frame</span>
<span class="t" style="left:198.50px;top:31.00px;font-size:15px;color:#8a8a8a;transform:scaleX(0.9968)">Bin</span>
<span class="t" style="left:237.02px;top:31.00px;font-size:15px;color:#000;transform:scaleX(1.0691)">Zoom</span>
<span class="t" style="left:294.77px;top:31.00px;font-size:15px;color:#000;transform:scaleX(0.9302)">Scale</span>
<span class="t" style="left:346.13px;top:31.00px;font-size:15px;color:#000;transform:scaleX(1.0287)">Color</span>
<span class="t" style="left:399.71px;top:31.00px;font-size:15px;color:#000;transform:scaleX(0.9930)">Region</span>
<span class="t" style="left:464.30px;top:31.00px;font-size:15px;color:#000;transform:scaleX(0.9021)">WCS</span>
<span class="t" style="left:513.00px;top:31.00px;font-size:15px;color:#000;transform:scaleX(0.9579)">Analysis</span>
<span class="t" style="left:583.48px;top:31.00px;font-size:15px;color:#000;transform:scaleX(1.0196)">Help</span>
<span class="t" style="left:4.41px;top:59.00px;font-size:15px;color:#000;transform:scaleX(0.9909)">File</span>
<span class="t" style="left:4.92px;top:83.00px;font-size:15px;color:#000;transform:scaleX(1.0121)">Object</span>
<span class="t" style="left:5.30px;top:106.00px;font-size:15px;color:#000;transform:scaleX(0.9882)">Value</span>
<span class="t" style="left:5.30px;top:130.00px;font-size:15px;color:#000;transform:scaleX(0.9050)">WCS</span>
<span class="t" style="left:4.51px;top:153.00px;font-size:15px;color:#000;transform:scaleX(0.9884)">Physical</span>
<span class="t" style="left:4.32px;top:177.00px;font-size:15px;color:#000;transform:scaleX(1.0246)">Image</span>
<span class="t" style="left:4.57px;top:201.00px;font-size:15px;color:#000;transform:scaleX(0.9397)">Frame 1</span>
<span class="t" style="left:108.35px;top:59.00px;font-size:15px;color:#000;transform:scaleX(0.9749)">ngc5194_v7.phot.1.fits</span>
<span class="t" style="left:108.20px;top:83.00px;font-size:15px;color:#000;transform:scaleX(0.9165)">NGC5194_95</span>
<span class="t" style="left:92.53px;top:153.00px;font-size:15px;color:#000;transform:scaleX(0.9101)">X</span>
<span class="t" style="left:198.74px;top:153.00px;font-size:15px;color:#000;transform:scaleX(0.8640)">Y</span>
<span class="t" style="left:92.53px;top:177.00px;font-size:15px;color:#000;transform:scaleX(0.9101)">X</span>
<span class="t" style="left:198.74px;top:177.00px;font-size:15px;color:#000;transform:scaleX(0.8640)">Y</span>
<span class="t" style="left:92.66px;top:201.00px;font-size:15px;color:#000;transform:scaleX(0.9028)">x</span>
<span class="t" style="left:132.42px;top:201.00px;font-size:15px;color:#000;transform:scaleX(0.9186)">0.500</span>
<span class="t" style="left:245.61px;top:201.00px;font-size:15px;color:#000;transform:scaleX(0.9241)">0.000</span>
<span class="t" style="left:71.09px;top:234.00px;font-size:15px;color:#000;transform:scaleX(1.0865)">file</span>
<span class="t" style="left:235.13px;top:234.00px;font-size:15px;color:#000;transform:scaleX(1.0301)">edit</span>
<span class="t" style="left:404.25px;top:234.00px;font-size:15px;color:#000;transform:scaleX(0.9817)">view</span>
<span class="t" style="left:577.35px;top:234.00px;font-size:15px;color:#000;transform:scaleX(1.0313)">frame</span>
<span class="t" style="left:759.50px;top:234.00px;font-size:15px;color:#000;transform:scaleX(1.1126)">bin</span>
<span class="t" style="left:924.38px;top:234.00px;font-size:15px;color:#000;transform:scaleX(1.0389)">zoom</span>
<span class="t" style="left:1106.40px;top:234.00px;font-size:15px;color:#000;transform:scaleX(0.9405)">scale</span>
<span class="t" style="left:1282.63px;top:234.00px;font-size:15px;color:#000;transform:scaleX(1.0404)">color</span>
<span class="t" style="left:1460.99px;top:234.00px;font-size:15px;color:#000;transform:scaleX(1.0363)">region</span>
<span class="t" style="left:1649.57px;top:234.00px;font-size:15px;color:#000;transform:scaleX(0.9554)">wcs</span>
<span class="t" style="left:1818.50px;top:234.00px;font-size:15px;color:#000;transform:scaleX(1.0274)">help</span>
<span class="t" style="left:140.14px;top:265.00px;font-size:15px;color:#000;transform:scaleX(1.0203)">open</span>
<span class="t" style="left:453.91px;top:265.00px;font-size:15px;color:#000;transform:scaleX(0.9041)">save</span>
<span class="t" style="left:763.55px;top:265.00px;font-size:15px;color:#000;transform:scaleX(0.9717)">header</span>
<span class="t" style="left:1089.62px;top:265.00px;font-size:15px;color:#000;transform:scaleX(0.9833)">page setup</span>
<span class="t" style="left:1443.54px;top:265.00px;font-size:15px;color:#000;transform:scaleX(1.0624)">print</span>
<span class="t" style="left:1756.43px;top:265.00px;font-size:15px;color:#000;transform:scaleX(0.9582)">exit</span>
<span class="t" style="left:179.10px;top:1054.00px;font-size:15px;color:#1a1a1a;transform:scaleX(0.8850)">-0.1</span>
<span class="t" style="left:374.21px;top:1054.00px;font-size:15px;color:#1a1a1a;transform:scaleX(0.8850)">0.3</span>
<span class="t" style="left:565.92px;top:1054.00px;font-size:15px;color:#1a1a1a;transform:scaleX(0.8850)">1.0</span>
<span class="t" style="left:758.11px;top:1054.00px;font-size:15px;color:#1a1a1a;transform:scaleX(0.8850)">2.5</span>
<span class="t" style="left:950.18px;top:1054.00px;font-size:15px;color:#1a1a1a;transform:scaleX(0.8850)">5.5</span>
<span class="t" style="left:1138.65px;top:1054.00px;font-size:15px;color:#1a1a1a;transform:scaleX(0.8850)">11.4</span>
<span class="t" style="left:1330.46px;top:1054.00px;font-size:15px;color:#1a1a1a;transform:scaleX(0.8850)">23.1</span>
<span class="t" style="left:1522.66px;top:1054.00px;font-size:15px;color:#1a1a1a;transform:scaleX(0.8850)">46.7</span>
<span class="t" style="left:1714.36px;top:1054.00px;font-size:15px;color:#1a1a1a;transform:scaleX(0.8850)">93.4</span>
</body></html>
